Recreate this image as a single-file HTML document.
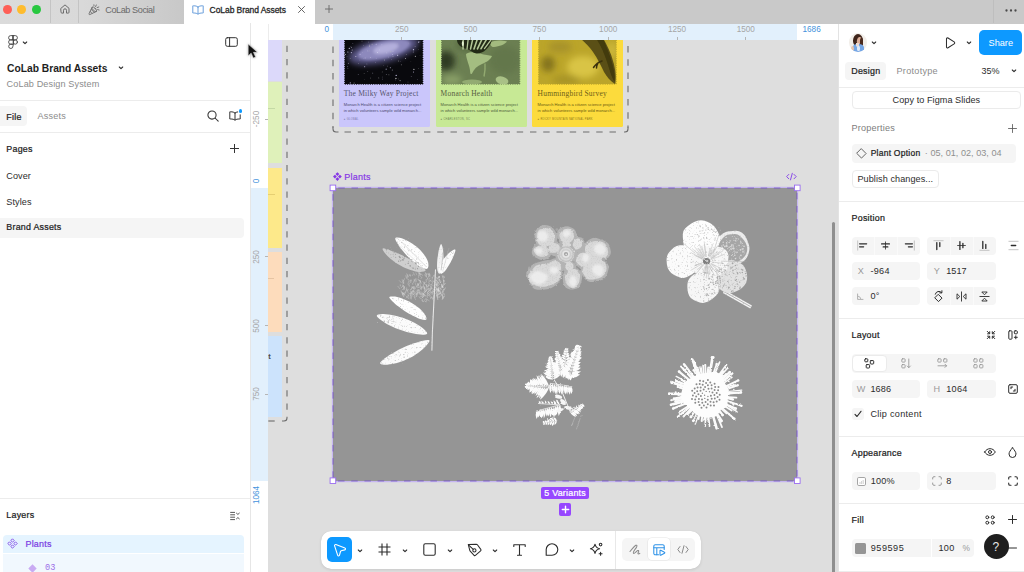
<!DOCTYPE html>
<html><head><meta charset="utf-8"><title>CoLab Brand Assets</title>
<style>
*{box-sizing:border-box;margin:0;padding:0}
html,body{width:1024px;height:572px;overflow:hidden;background:#fff;font-family:"Liberation Sans",sans-serif;font-size:8.65px;color:#1e1e1e}
.a{position:absolute}
.t{position:absolute;white-space:pre;line-height:12px;height:12px;font-size:9.1px;letter-spacing:.08px;color:#2c2c2c}
.b{font-weight:normal;font-size:8.900px;letter-spacing:.24px;color:#1e1e1e;-webkit-text-stroke:.24px currentColor}
.g{color:#8c8c8c}
svg{position:absolute;overflow:visible}
.ic{fill:none;stroke:#2c2c2c;stroke-width:1;stroke-linecap:round;stroke-linejoin:round}
.fld{position:absolute;background:#f5f5f5;border-radius:4px;height:18px}
.hr{position:absolute;height:1px;background:#ececec}
/* title bar */
#tb{left:0;top:0;width:1024px;height:23.500px;background:#c9c9c9}
#tbl{left:0;top:0;width:184px;height:23.500px;background:linear-gradient(90deg,#dbdbdb 0,#d9d9d9 45%,#c8c8c8 100%)}
#tab{left:184px;top:0;width:131px;height:24px;background:#fff}
/* panels */
#left{left:0;top:23.500px;width:250px;height:549px;background:#fff}
#lb{left:250px;top:23px;width:1px;height:549px;background:#e6e6e6}
#right{left:838px;top:23.500px;width:186px;height:549px;background:#fff;border-left:1px solid #e3e3e3}
#hr{left:251px;top:23.500px;width:587px;height:16px;background:#fff}
#vr{left:251px;top:39.500px;width:17px;height:532.500px;background:#fff}
#cv{left:268px;top:39.500px;width:570px;height:532.500px;background:#dedede;overflow:hidden}
.rl{position:absolute;font-size:8.2px;line-height:10px;height:10px;color:#a6a6a6;white-space:pre}
.vl{position:absolute;font-size:8.2px;line-height:10px;height:10px;width:30px;text-align:center;color:#a6a6a6;transform:rotate(-90deg);transform-origin:50% 50%;white-space:pre}
.tk{position:absolute;background:#b5b5b5}
.rb{color:#3f92dc}
</style></head><body>

<!-- ================= TITLE BAR ================= -->
<div id="tb" class="a"></div>
<div id="tbl" class="a"></div>
<div id="tab" class="a"></div>
<div class="a" style="left:3.2px;top:5.4px;width:8.8px;height:8.8px;border-radius:50%;background:#fe5f57"></div>
<div class="a" style="left:17.4px;top:5.4px;width:8.8px;height:8.8px;border-radius:50%;background:#febc2e"></div>
<div class="a" style="left:32px;top:5.4px;width:8.8px;height:8.8px;border-radius:50%;background:#28c840"></div>
<div class="a" style="left:50px;top:0;width:1px;height:23px;background:#c4c4c4"></div>
<div class="a" style="left:78px;top:0;width:1px;height:23px;background:#c4c4c4"></div>
<div class="a" style="left:993px;top:0;width:1px;height:23px;background:#bebebe"></div>
<!-- home -->
<svg class="ic" style="left:59.500px;top:4.400px;stroke:#6c6c6c;stroke-width:1" width="10" height="10" viewBox="0 0 10 10"><path d="M1 4.300 5 .9 9 4.300V8.300a.8.800 0 0 1-.8.800H6.500V6.300a1.500 1.500 0 0 0-3 0V9.100H1.800A.8.800 0 0 1 1 8.300z"/></svg>
<!-- party popper (CoLab Social) -->
<svg class="ic" style="left:88px;top:4px;stroke:#6c6c6c;stroke-width:.9" width="12" height="12" viewBox="0 0 12 12"><path d="M4.200 3.200 1 9.800c-.2.500.3 1 .8.800L8.400 7.400"/><ellipse cx="6.300" cy="5.300" rx="1.300" ry="3" transform="rotate(-45 6.300 5.300)"/><path d="M3.200 5.400 6.200 8.400M2.200 7.400 4 9.300"/><path d="M7.600 2.600 8.300 1M9.100 3.600l1.700-.6M9.600 5.600l1.500.4M6 1.800 5.900.8"/></svg>
<!-- book (active tab) -->
<svg class="ic" style="left:192.300px;top:4.600px;stroke:#6a9fdc;stroke-width:1" width="12" height="10" viewBox="0 0 12 10"><path d="M6 2C5 1.100 3.500 .8 1.600 .8H.8V8h.8C3.500 8 5 8.300 6 9.200 7 8.300 8.500 8 10.400 8h.8V.8h-.8C8.500 .8 7 1.100 6 2zM6 2v7"/></svg>
<!-- close -->
<svg class="ic" style="left:297.500px;top:6.100px;stroke:#555;stroke-width:.9" width="7" height="7" viewBox="0 0 7 7"><path d="M.5 .5 6.500 6.500M6.500 .5 .5 6.500"/></svg>
<!-- new tab -->
<svg class="ic" style="left:325.300px;top:5.400px;stroke:#666;stroke-width:.9" width="8" height="8" viewBox="0 0 8 8"><path d="M4 .4V7.600M.4 4H7.600"/></svg>
<!-- ellipsis -->
<svg style="left:1004.500px;top:8.600px" width="12" height="3" viewBox="0 0 12 3"><circle cx="1.500" cy="1.500" r="1.150" fill="#4a4a4a"/><circle cx="6" cy="1.500" r="1.150" fill="#4a4a4a"/><circle cx="10.500" cy="1.500" r="1.150" fill="#4a4a4a"/></svg>

<div class="t" style="left:105.300px;top:4px;color:#6a6a6a;letter-spacing:-.42px">CoLab Social</div>
<div class="t" style="left:209.600px;top:4px;font-size:8.500px;letter-spacing:-.07px;color:#2a2a2a;-webkit-text-stroke:.3px #2a2a2a">CoLab Brand Assets</div>

<!-- ================= LEFT PANEL ================= -->
<div id="left" class="a"></div>
<div id="lb" class="a"></div>
<div class="t" style="left:7px;top:63px;font-size:10.250px;font-weight:bold;letter-spacing:0;color:#1e1e1e">CoLab Brand Assets</div>
<div class="t g" style="left:6.6px;top:77.8px;letter-spacing:.12px">CoLab Design System</div>
<div class="hr" style="left:0;top:99.5px;width:250px"></div>
<div class="a" style="left:0;top:106px;width:27px;height:19.5px;background:#f5f5f5;border-radius:0 4px 4px 0"></div>
<div class="t b" style="left:6.300px;top:110.600px">File</div>
<div class="t g" style="left:37.500px;top:110.400px;letter-spacing:.2px">Assets</div>
<div class="hr" style="left:0;top:132px;width:250px"></div>
<div class="t b" style="left:6.3px;top:142.5px">Pages</div>
<div class="t" style="left:6.3px;top:170px">Cover</div>
<div class="t" style="left:6.3px;top:196px">Styles</div>
<div class="a" style="left:0;top:217.5px;width:244px;height:20px;background:#f5f5f5;border-radius:0 4px 4px 0"></div>
<div class="t b" style="left:6.300px;top:221.400px">Brand Assets</div>
<div class="hr" style="left:0;top:498px;width:250px"></div>
<div class="t b" style="left:6.3px;top:509px">Layers</div>
<div class="a" style="left:3px;top:534.5px;width:241px;height:18.5px;background:#e5f4ff;border-radius:4px 4px 0 0"></div>
<div class="a" style="left:3px;top:554px;width:241px;height:18px;background:#f1f8fe"></div>
<div class="t b" style="left:25.500px;top:538.200px;color:#7b3fe4">Plants</div>
<div class="t" style="left:45px;top:562px;color:#9d6fe8;font-family:'Liberation Mono',monospace;font-size:8.6px;letter-spacing:0">03</div>

<!-- figma logo + chevron -->
<svg class="ic" style="left:7.600px;top:35.300px;stroke:#3c3c3c;stroke-width:.85" width="10" height="14" viewBox="0 0 10 14"><path d="M5 .6H2.750a2.150 2.150 0 0 0 0 4.300H5zM5 .6h2.250a2.150 2.150 0 0 1 0 4.300H5zM5 4.900H2.750a2.150 2.150 0 0 0 0 4.300H5zM5 9.200H2.750a2.150 2.150 0 1 0 2.250 2.150z"/><circle cx="7.250" cy="7.050" r="2.150"/></svg>
<svg class="ic" style="left:22.300px;top:40.800px;stroke-width:1.100" width="6" height="4" viewBox="0 0 6 4"><path d="M1.300 1 3 2.600 4.700 1"/></svg>
<!-- sidebar toggle -->
<svg class="ic" style="left:225.300px;top:37.300px;stroke:#333;stroke-width:1" width="13" height="10" viewBox="0 0 13 10"><rect x=".7" y=".7" width="11.600" height="8.600" rx="1.600"/><path d="M4.600 .7v8.600"/></svg>
<!-- title chevron -->
<svg class="ic" style="left:118.200px;top:66.200px;stroke-width:1.100" width="6" height="4" viewBox="0 0 6 4"><path d="M1.300 1 3 2.600 4.700 1"/></svg>
<!-- search -->
<svg class="ic" style="left:207px;top:110.300px;stroke:#333;stroke-width:1.050" width="12" height="12" viewBox="0 0 12 12"><circle cx="5" cy="5" r="4.100"/><path d="M8 8 11.200 11.200"/></svg>
<!-- libraries book + dot -->
<svg class="ic" style="left:229px;top:110.500px;stroke:#333;stroke-width:1" width="12" height="10" viewBox="0 0 12 10"><path d="M6 2C5 1.100 3.500 .8 1.600 .8H.8V8h.8C3.500 8 5 8.300 6 9.200 7 8.300 8.500 8 10.400 8h.8V3.800M6 2v7M6 2c.7-.6 1.600-.9 2.700-1.100"/></svg>
<div class="a" style="left:238.700px;top:109.300px;width:3.600px;height:3.600px;border-radius:50%;background:#0d99ff"></div>
<!-- add page -->
<svg class="ic" style="left:230px;top:143.500px;stroke:#333;stroke-width:1" width="9" height="9" viewBox="0 0 9 9"><path d="M4.500 .4V8.600M.4 4.500H8.600"/></svg>
<!-- layers collapse -->
<svg class="ic" style="left:230px;top:510.500px;stroke:#444;stroke-width:.9" width="10" height="10" viewBox="0 0 10 10"><path d="M.6 1.400H4.600M.6 3.800H4.600M.6 6.200H4.600M.6 8.600H4.600M6.500 2.200 7.900 3.400 9.300 2.200M6.500 7.800 7.900 6.600 9.300 7.800"/></svg>
<!-- component-set glyph in layers -->
<svg style="left:7px;top:538px" width="11" height="11" viewBox="0 0 11 11" fill="none" stroke="#7b3fe4" stroke-width=".85" stroke-linejoin="round"><path d="M5.500 .8 7.200 2.500 5.500 4.200 3.800 2.500zM5.500 6.800 7.200 8.500 5.500 10.200 3.800 8.500zM2.500 3.800 4.200 5.500 2.500 7.200 .8 5.500zM8.500 3.800 10.200 5.500 8.500 7.200 6.800 5.500z"/></svg>
<!-- variant diamond (faded) -->
<svg style="left:27.500px;top:563.500px" width="9" height="9" viewBox="0 0 9 9"><path d="M4.500 .3 8.700 4.500 4.500 8.700 .3 4.500z" fill="#c9abf3"/></svg>

<!-- ================= RULERS + CANVAS ================= -->
<div id="cv" class="a">
<div class="a" style="left:-268px;top:-39.500px;width:1024px;height:572px">
<!-- colour strips at far left -->
<div class="a" style="left:268px;top:39px;width:14.200px;height:41.500px;background:#dcd9fa"></div>
<div class="a" style="left:268px;top:82.300px;width:14.200px;height:80.800px;background:#dff1ba"></div>
<div class="a" style="left:268px;top:167.500px;width:14.200px;height:80.500px;background:#fde98a"></div>
<div class="a" style="left:268px;top:252px;width:14.200px;height:80.200px;background:#fddcbc"></div>
<div class="a" style="left:268px;top:336.200px;width:14.200px;height:80.500px;background:#cce3fc"></div>
<div class="a" style="left:268px;top:108px;width:7px;height:1px;background:#c4d9a5"></div>
<div class="a" style="left:268px;top:194px;width:7px;height:1px;background:#e6cf72"></div>
<div class="a" style="left:268px;top:278px;width:6px;height:1px;background:#e6c4a3"></div>
<div class="t" style="left:268.200px;top:350.500px;font-size:7.500px;color:#4a4a4a;font-weight:bold">t</div>

<!-- dashed section outlines -->
<svg style="left:0;top:0" width="1024" height="572" viewBox="0 0 1024 572">
  <g fill="none" stroke="#6c6c6c" stroke-width="1.100" stroke-dasharray="6.400 6.850">
    <path d="M287 45.700V416"/>
    <path d="M274.700 421H268"/>
    <path d="M333 46.600V128"/>
    <path d="M344.500 132H622"/>
    <path d="M628 46V128"/>
  </g>
  <g fill="none" stroke="#6c6c6c" stroke-width="1.100">
    <path d="M287 416.800v1.200a3 3 0 0 1-3 3h-2"/>
    <path d="M333 127.500v1.500a3 3 0 0 0 3 3h2.500"/>
    <path d="M628 127.500v1.500a3 3 0 0 1-3 3h-1"/>
  </g>
</svg>

<!-- cards -->
<div class="a" style="left:339px;top:30px;width:91px;height:96.800px;background:#cac6fb;border-radius:0 0 1.500px 1.500px"></div>
<div class="a" style="left:435.700px;top:30px;width:91px;height:96.800px;background:#c7e995;border-radius:0 0 1.500px 1.500px"></div>
<div class="a" style="left:532px;top:30px;width:91.300px;height:96.800px;background:#fcdb3c;border-radius:0 0 1.500px 1.500px"></div>
<svg style="left:0;top:0" width="1024" height="572" viewBox="0 0 1024 572"><defs><filter id="cb1" x="-20%" y="-20%" width="140%" height="140%"><feGaussianBlur stdDeviation="1.6"/></filter><filter id="cb2" x="-20%" y="-20%" width="140%" height="140%"><feGaussianBlur stdDeviation=".7"/></filter><filter id="cb3" x="-20%" y="-20%" width="140%" height="140%"><feGaussianBlur stdDeviation="3"/></filter><filter id="cb0" x="-20%" y="-20%" width="140%" height="140%"><feGaussianBlur stdDeviation=".3"/></filter><clipPath id="c1"><rect x="344.1" y="30" width="79.3" height="54.8"/></clipPath><clipPath id="c2"><rect x="441" y="30" width="79.3" height="54.8"/></clipPath><clipPath id="c3"><rect x="538" y="30" width="78.9" height="54.8"/></clipPath></defs><g clip-path="url(#c1)"><rect x="344" y="30" width="80" height="55" fill="#09090d"/><g filter="url(#cb3)"><ellipse cx="383.5" cy="50" rx="36" ry="12" transform="rotate(-14 383.5 50)" fill="#5b5888"/></g><g filter="url(#cb1)"><ellipse cx="384" cy="49.500" rx="27" ry="8.500" transform="rotate(-14 384 49.500)" fill="#8d89bd"/><ellipse cx="386" cy="48.500" rx="13" ry="4.600" transform="rotate(-14 386 48.500)" fill="#b3afdc"/></g><g filter="url(#cb0)"><circle cx="363.4" cy="45.4" r="0.4" fill="#bbb" opacity="0.58"/><circle cx="350.2" cy="58.3" r="0.35" fill="#fff" opacity="0.61"/><circle cx="386.9" cy="52.9" r="0.3" fill="#fff" opacity="0.63"/><circle cx="418.6" cy="42.1" r="0.65" fill="#d0ccf0" opacity="0.90"/><circle cx="360.1" cy="54.3" r="0.65" fill="#d0ccf0" opacity="0.54"/><circle cx="392.3" cy="69.9" r="0.5" fill="#e8e6ff" opacity="0.59"/><circle cx="381.9" cy="44.8" r="0.5" fill="#d0ccf0" opacity="0.50"/><circle cx="367.8" cy="71.3" r="0.35" fill="#e8e6ff" opacity="0.71"/><circle cx="391.7" cy="59.5" r="0.3" fill="#e8e6ff" opacity="0.65"/><circle cx="408.4" cy="42.9" r="0.25" fill="#bbb" opacity="0.81"/><circle cx="366.9" cy="64" r="0.4" fill="#d0ccf0" opacity="0.57"/><circle cx="397.6" cy="43.9" r="0.3" fill="#bbb" opacity="0.64"/><circle cx="372.8" cy="73.1" r="0.35" fill="#e8e6ff" opacity="0.95"/><circle cx="352.9" cy="43.6" r="0.3" fill="#d0ccf0" opacity="0.88"/><circle cx="393" cy="51.2" r="0.35" fill="#e8e6ff" opacity="0.65"/><circle cx="347" cy="56.4" r="0.25" fill="#d0ccf0" opacity="0.87"/><circle cx="419.9" cy="41.8" r="0.35" fill="#d0ccf0" opacity="0.98"/><circle cx="405.5" cy="58.6" r="0.5" fill="#fff" opacity="0.65"/><circle cx="359.9" cy="60.1" r="0.3" fill="#d0ccf0" opacity="0.69"/><circle cx="420" cy="55.2" r="0.25" fill="#d0ccf0" opacity="0.52"/><circle cx="358.2" cy="74.7" r="0.35" fill="#d0ccf0" opacity="0.79"/><circle cx="379.3" cy="49.9" r="0.3" fill="#fff" opacity="0.53"/><circle cx="349.3" cy="48.3" r="0.65" fill="#e8e6ff" opacity="0.80"/><circle cx="387.6" cy="66.1" r="0.35" fill="#fff" opacity="0.56"/><circle cx="386.3" cy="74.3" r="0.4" fill="#e8e6ff" opacity="0.74"/><circle cx="363.9" cy="58.7" r="0.25" fill="#e8e6ff" opacity="0.71"/><circle cx="364.4" cy="79.2" r="0.3" fill="#bbb" opacity="0.59"/><circle cx="347.9" cy="51.9" r="0.5" fill="#e8e6ff" opacity="0.89"/><circle cx="377.5" cy="52.3" r="0.35" fill="#fff" opacity="0.95"/><circle cx="369.5" cy="46" r="0.5" fill="#bbb" opacity="0.98"/><circle cx="395.9" cy="78.4" r="0.65" fill="#fff" opacity="0.75"/><circle cx="352.2" cy="50.1" r="0.5" fill="#e8e6ff" opacity="0.67"/><circle cx="396.2" cy="75.4" r="0.65" fill="#d0ccf0" opacity="0.91"/><circle cx="386.2" cy="69.2" r="0.65" fill="#d0ccf0" opacity="0.67"/><circle cx="375.6" cy="62.3" r="0.35" fill="#e8e6ff" opacity="0.52"/><circle cx="415.1" cy="46.5" r="0.35" fill="#fff" opacity="0.94"/><circle cx="398.7" cy="61" r="0.4" fill="#bbb" opacity="0.96"/><circle cx="362" cy="41.1" r="0.3" fill="#fff" opacity="0.81"/><circle cx="365.1" cy="58" r="0.4" fill="#e8e6ff" opacity="0.78"/><circle cx="413.5" cy="49.7" r="0.65" fill="#d0ccf0" opacity="0.91"/><circle cx="388.9" cy="74.7" r="0.5" fill="#bbb" opacity="0.51"/><circle cx="347.7" cy="66.6" r="0.4" fill="#d0ccf0" opacity="0.80"/><circle cx="355.8" cy="56.6" r="0.5" fill="#fff" opacity="0.65"/><circle cx="372.1" cy="44.2" r="0.5" fill="#bbb" opacity="0.69"/><circle cx="406.4" cy="54.4" r="0.3" fill="#bbb" opacity="0.93"/><circle cx="376.2" cy="44.3" r="0.5" fill="#d0ccf0" opacity="0.76"/><circle cx="378.8" cy="77.9" r="0.4" fill="#fff" opacity="0.81"/><circle cx="418.4" cy="68.4" r="0.4" fill="#bbb" opacity="0.56"/><circle cx="388.5" cy="57" r="0.3" fill="#e8e6ff" opacity="0.85"/><circle cx="370.5" cy="78" r="0.35" fill="#fff" opacity="0.86"/><circle cx="345.4" cy="54.4" r="0.5" fill="#fff" opacity="0.74"/><circle cx="400.8" cy="61.8" r="0.25" fill="#e8e6ff" opacity="0.71"/><circle cx="367.9" cy="50.9" r="0.3" fill="#fff" opacity="0.84"/><circle cx="392.5" cy="54.5" r="0.4" fill="#d0ccf0" opacity="0.97"/><circle cx="384.5" cy="60" r="0.5" fill="#bbb" opacity="0.70"/><circle cx="364.6" cy="66.7" r="0.65" fill="#d0ccf0" opacity="0.57"/><circle cx="351.4" cy="47.2" r="0.5" fill="#e8e6ff" opacity="0.64"/><circle cx="418.3" cy="49.5" r="0.35" fill="#fff" opacity="0.54"/><circle cx="395.4" cy="79.9" r="0.35" fill="#d0ccf0" opacity="0.66"/><circle cx="368.4" cy="42" r="0.25" fill="#fff" opacity="0.90"/><circle cx="408" cy="82" r="0.3" fill="#e8e6ff" opacity="0.79"/><circle cx="383.6" cy="65.7" r="0.25" fill="#fff" opacity="0.59"/><circle cx="382.4" cy="79.1" r="0.3" fill="#d0ccf0" opacity="0.93"/><circle cx="398.6" cy="78.9" r="0.3" fill="#bbb" opacity="0.85"/><circle cx="369.2" cy="50.9" r="0.35" fill="#bbb" opacity="0.95"/><circle cx="376.2" cy="58.2" r="0.35" fill="#d0ccf0" opacity="0.72"/><circle cx="390.9" cy="51.8" r="0.5" fill="#bbb" opacity="0.85"/><circle cx="393" cy="56.7" r="0.4" fill="#fff" opacity="0.58"/><circle cx="350.3" cy="82.9" r="0.65" fill="#d0ccf0" opacity="0.80"/><circle cx="369.4" cy="44.9" r="0.35" fill="#bbb" opacity="0.61"/><circle cx="417.4" cy="79.4" r="0.25" fill="#e8e6ff" opacity="0.96"/><circle cx="350.4" cy="46.7" r="0.25" fill="#e8e6ff" opacity="0.70"/><circle cx="390.4" cy="67.7" r="0.65" fill="#d0ccf0" opacity="0.51"/><circle cx="364.1" cy="73.3" r="0.3" fill="#fff" opacity="0.97"/><circle cx="351.4" cy="52.6" r="0.65" fill="#d0ccf0" opacity="0.80"/><circle cx="394.3" cy="48.4" r="0.3" fill="#bbb" opacity="0.98"/><circle cx="413.5" cy="71.9" r="0.5" fill="#d0ccf0" opacity="0.85"/><circle cx="401.4" cy="64.8" r="0.5" fill="#bbb" opacity="0.58"/><circle cx="410.9" cy="61.8" r="0.25" fill="#bbb" opacity="0.58"/><circle cx="413.2" cy="52" r="0.4" fill="#d0ccf0" opacity="0.93"/><circle cx="370.6" cy="57.6" r="0.4" fill="#fff" opacity="0.64"/><circle cx="397.7" cy="54.1" r="0.3" fill="#fff" opacity="0.58"/><circle cx="411.2" cy="76.4" r="0.3" fill="#e8e6ff" opacity="0.78"/><circle cx="382.2" cy="71.9" r="0.3" fill="#bbb" opacity="1.00"/><circle cx="400.1" cy="80.6" r="0.65" fill="#bbb" opacity="0.67"/><circle cx="358.5" cy="63.8" r="0.3" fill="#fff" opacity="0.74"/><circle cx="415.4" cy="56.3" r="0.65" fill="#bbb" opacity="0.80"/><circle cx="347.9" cy="68.2" r="0.35" fill="#d0ccf0" opacity="0.89"/><circle cx="382.2" cy="76.9" r="0.25" fill="#e8e6ff" opacity="0.95"/><circle cx="413.9" cy="69.3" r="0.65" fill="#fff" opacity="0.80"/><circle cx="386.1" cy="83.5" r="0.35" fill="#fff" opacity="0.59"/><circle cx="348.4" cy="63.3" r="0.5" fill="#e8e6ff" opacity="0.52"/><circle cx="397.7" cy="55.5" r="0.5" fill="#e8e6ff" opacity="0.85"/><circle cx="354.1" cy="83.1" r="0.5" fill="#fff" opacity="0.54"/><circle cx="362.6" cy="52.8" r="0.25" fill="#fff" opacity="0.51"/></g></g><g clip-path="url(#c2)"><rect x="441" y="30" width="80" height="55" fill="#6b7f52"/><g filter="url(#cb3)"><ellipse cx="446" cy="61" rx="9" ry="10" fill="#2f3b22"/><ellipse cx="505" cy="60" rx="16" ry="14" fill="#63774b"/><ellipse cx="470" cy="45" rx="14" ry="6" fill="#57693f"/><ellipse cx="452" cy="80" rx="10" ry="5" fill="#8aa068"/></g><g filter="url(#cb2)"><path d="M466 54c3-2.500 9-2 14-.5 5 1.500 9 1.500 12 2.500-1 3-5 6-10 8-5 2-8 5-10 9.500-1 1.500-1.800 0-1.800-1.500C470 66 466 59 466 54z" fill="#a4bd81"/><path d="M485 63.500c.4 5-.2 9-1 13" stroke="#92aa70" stroke-width="1.400" fill="none"/><path d="M491 42c3-1.500 9-2.500 16-.5-2 3-8 5-13 5.500-3 .3-4.500-3-3-5z" fill="#a3bb7f"/><ellipse cx="502" cy="80.500" rx="6.500" ry="4" fill="#a9c186" transform="rotate(15 502 80.500)"/><ellipse cx="472" cy="82" rx="10" ry="2.600" fill="#93ab72"/></g><g filter="url(#cb0)"><path d="M457 40c0 4 4 8 10 9 3 .8 5.500 4 9.500 4.500 6 .5 13-5 15.500-13.500z" fill="#222b17"/><path d="M464.5 38L462 49" stroke="#b4c898" stroke-width="1.5" stroke-linecap="round" transform="rotate(-12 462 44)"/><path d="M469.0 38L466.5 49" stroke="#b4c898" stroke-width="1.3" stroke-linecap="round" transform="rotate(-6 466.5 44)"/><path d="M473.0 38L470.5 49" stroke="#b4c898" stroke-width="1.5" stroke-linecap="round" transform="rotate(0 470.5 44)"/><path d="M477.0 38L474.5 49" stroke="#b4c898" stroke-width="1.6" stroke-linecap="round" transform="rotate(6 474.5 44)"/><path d="M481.0 38L478.5 49" stroke="#b4c898" stroke-width="1.6" stroke-linecap="round" transform="rotate(12 478.5 44)"/><path d="M485.0 38L482.5 49" stroke="#b4c898" stroke-width="1.5" stroke-linecap="round" transform="rotate(18 482.5 44)"/><path d="M489.0 38L486.5 49" stroke="#b4c898" stroke-width="1.3" stroke-linecap="round" transform="rotate(24 486.5 44)"/><ellipse cx="462.800" cy="43.500" rx="1" ry="2.600" fill="#e6f2d2"/></g></g><g clip-path="url(#c3)"><rect x="538" y="30" width="80" height="55" fill="#bba52a"/><g filter="url(#cb3)"><ellipse cx="583" cy="67" rx="16" ry="11" fill="#d9c444"/><ellipse cx="548" cy="64" rx="7" ry="8" fill="#85751a"/><ellipse cx="560" cy="47" rx="12" ry="6" fill="#a8932a"/><ellipse cx="566" cy="80" rx="14" ry="5" fill="#a89426"/><ellipse cx="612" cy="50" rx="5" ry="8" fill="#cdb83a"/></g><g filter="url(#cb2)"><path d="M580 38c5 5 10 9 13 14 5 7 8 14 11 20 3 5 6 9 11 12 1.500-6 .5-15-2-23-2-8-6-16-10-23z" fill="#5a5016"/><path d="M596 38c5 8 9 17 12 27 2 7 4 13 6.500 17 1-5-.5-13-3-21-2.500-9-6-17-9-23z" fill="#3f360c" opacity=".85"/><path d="M602 61c-3 1-6 3-8.500 6.500M598 63c-1 2-1.500 3.500-1.500 5" stroke="#3a300a" stroke-width="1.500" fill="none" stroke-linecap="round"/></g></g><g fill="#cac6fb"><circle cx="344.1" cy="84.8" r=".78"/><circle cx="346.4" cy="84.8" r=".78"/><circle cx="348.7" cy="84.8" r=".78"/><circle cx="350.9" cy="84.8" r=".78"/><circle cx="353.2" cy="84.8" r=".78"/><circle cx="355.5" cy="84.8" r=".78"/><circle cx="357.8" cy="84.8" r=".78"/><circle cx="360.1" cy="84.8" r=".78"/><circle cx="362.3" cy="84.8" r=".78"/><circle cx="364.6" cy="84.8" r=".78"/><circle cx="366.9" cy="84.8" r=".78"/><circle cx="369.2" cy="84.8" r=".78"/><circle cx="371.5" cy="84.8" r=".78"/><circle cx="373.7" cy="84.8" r=".78"/><circle cx="376" cy="84.8" r=".78"/><circle cx="378.3" cy="84.8" r=".78"/><circle cx="380.6" cy="84.8" r=".78"/><circle cx="382.9" cy="84.8" r=".78"/><circle cx="385.1" cy="84.8" r=".78"/><circle cx="387.4" cy="84.8" r=".78"/><circle cx="389.7" cy="84.8" r=".78"/><circle cx="392" cy="84.8" r=".78"/><circle cx="394.3" cy="84.8" r=".78"/><circle cx="396.5" cy="84.8" r=".78"/><circle cx="398.8" cy="84.8" r=".78"/><circle cx="401.1" cy="84.8" r=".78"/><circle cx="403.4" cy="84.8" r=".78"/><circle cx="405.7" cy="84.8" r=".78"/><circle cx="407.9" cy="84.8" r=".78"/><circle cx="410.2" cy="84.8" r=".78"/><circle cx="412.5" cy="84.8" r=".78"/><circle cx="414.8" cy="84.8" r=".78"/><circle cx="417.1" cy="84.8" r=".78"/><circle cx="419.3" cy="84.8" r=".78"/><circle cx="421.6" cy="84.8" r=".78"/><circle cx="344.1" cy="84.8" r=".78"/><circle cx="423.4" cy="84.8" r=".78"/><circle cx="344.1" cy="82.5" r=".78"/><circle cx="423.4" cy="82.5" r=".78"/><circle cx="344.1" cy="80.2" r=".78"/><circle cx="423.4" cy="80.2" r=".78"/><circle cx="344.1" cy="78" r=".78"/><circle cx="423.4" cy="78" r=".78"/><circle cx="344.1" cy="75.7" r=".78"/><circle cx="423.4" cy="75.7" r=".78"/><circle cx="344.1" cy="73.4" r=".78"/><circle cx="423.4" cy="73.4" r=".78"/><circle cx="344.1" cy="71.1" r=".78"/><circle cx="423.4" cy="71.1" r=".78"/><circle cx="344.1" cy="68.8" r=".78"/><circle cx="423.4" cy="68.8" r=".78"/><circle cx="344.1" cy="66.6" r=".78"/><circle cx="423.4" cy="66.6" r=".78"/><circle cx="344.1" cy="64.3" r=".78"/><circle cx="423.4" cy="64.3" r=".78"/><circle cx="344.1" cy="62" r=".78"/><circle cx="423.4" cy="62" r=".78"/><circle cx="344.1" cy="59.7" r=".78"/><circle cx="423.4" cy="59.7" r=".78"/><circle cx="344.1" cy="57.4" r=".78"/><circle cx="423.4" cy="57.4" r=".78"/><circle cx="344.1" cy="55.2" r=".78"/><circle cx="423.4" cy="55.2" r=".78"/><circle cx="344.1" cy="52.9" r=".78"/><circle cx="423.4" cy="52.9" r=".78"/><circle cx="344.1" cy="50.6" r=".78"/><circle cx="423.4" cy="50.6" r=".78"/><circle cx="344.1" cy="48.3" r=".78"/><circle cx="423.4" cy="48.3" r=".78"/><circle cx="344.1" cy="46" r=".78"/><circle cx="423.4" cy="46" r=".78"/><circle cx="344.1" cy="43.8" r=".78"/><circle cx="423.4" cy="43.8" r=".78"/><circle cx="344.1" cy="41.5" r=".78"/><circle cx="423.4" cy="41.5" r=".78"/><circle cx="344.1" cy="39.2" r=".78"/><circle cx="423.4" cy="39.2" r=".78"/></g><g fill="#c7e995"><circle cx="441" cy="84.8" r=".78"/><circle cx="443.3" cy="84.8" r=".78"/><circle cx="445.6" cy="84.8" r=".78"/><circle cx="447.8" cy="84.8" r=".78"/><circle cx="450.1" cy="84.8" r=".78"/><circle cx="452.4" cy="84.8" r=".78"/><circle cx="454.7" cy="84.8" r=".78"/><circle cx="457" cy="84.8" r=".78"/><circle cx="459.2" cy="84.8" r=".78"/><circle cx="461.5" cy="84.8" r=".78"/><circle cx="463.8" cy="84.8" r=".78"/><circle cx="466.1" cy="84.8" r=".78"/><circle cx="468.4" cy="84.8" r=".78"/><circle cx="470.6" cy="84.8" r=".78"/><circle cx="472.9" cy="84.8" r=".78"/><circle cx="475.2" cy="84.8" r=".78"/><circle cx="477.5" cy="84.8" r=".78"/><circle cx="479.8" cy="84.8" r=".78"/><circle cx="482" cy="84.8" r=".78"/><circle cx="484.3" cy="84.8" r=".78"/><circle cx="486.6" cy="84.8" r=".78"/><circle cx="488.9" cy="84.8" r=".78"/><circle cx="491.2" cy="84.8" r=".78"/><circle cx="493.4" cy="84.8" r=".78"/><circle cx="495.7" cy="84.8" r=".78"/><circle cx="498" cy="84.8" r=".78"/><circle cx="500.3" cy="84.8" r=".78"/><circle cx="502.6" cy="84.8" r=".78"/><circle cx="504.8" cy="84.8" r=".78"/><circle cx="507.1" cy="84.8" r=".78"/><circle cx="509.4" cy="84.8" r=".78"/><circle cx="511.7" cy="84.8" r=".78"/><circle cx="514" cy="84.8" r=".78"/><circle cx="516.2" cy="84.8" r=".78"/><circle cx="518.5" cy="84.8" r=".78"/><circle cx="441" cy="84.8" r=".78"/><circle cx="520.3" cy="84.8" r=".78"/><circle cx="441" cy="82.5" r=".78"/><circle cx="520.3" cy="82.5" r=".78"/><circle cx="441" cy="80.2" r=".78"/><circle cx="520.3" cy="80.2" r=".78"/><circle cx="441" cy="78" r=".78"/><circle cx="520.3" cy="78" r=".78"/><circle cx="441" cy="75.7" r=".78"/><circle cx="520.3" cy="75.7" r=".78"/><circle cx="441" cy="73.4" r=".78"/><circle cx="520.3" cy="73.4" r=".78"/><circle cx="441" cy="71.1" r=".78"/><circle cx="520.3" cy="71.1" r=".78"/><circle cx="441" cy="68.8" r=".78"/><circle cx="520.3" cy="68.8" r=".78"/><circle cx="441" cy="66.6" r=".78"/><circle cx="520.3" cy="66.6" r=".78"/><circle cx="441" cy="64.3" r=".78"/><circle cx="520.3" cy="64.3" r=".78"/><circle cx="441" cy="62" r=".78"/><circle cx="520.3" cy="62" r=".78"/><circle cx="441" cy="59.7" r=".78"/><circle cx="520.3" cy="59.7" r=".78"/><circle cx="441" cy="57.4" r=".78"/><circle cx="520.3" cy="57.4" r=".78"/><circle cx="441" cy="55.2" r=".78"/><circle cx="520.3" cy="55.2" r=".78"/><circle cx="441" cy="52.9" r=".78"/><circle cx="520.3" cy="52.9" r=".78"/><circle cx="441" cy="50.6" r=".78"/><circle cx="520.3" cy="50.6" r=".78"/><circle cx="441" cy="48.3" r=".78"/><circle cx="520.3" cy="48.3" r=".78"/><circle cx="441" cy="46" r=".78"/><circle cx="520.3" cy="46" r=".78"/><circle cx="441" cy="43.8" r=".78"/><circle cx="520.3" cy="43.8" r=".78"/><circle cx="441" cy="41.5" r=".78"/><circle cx="520.3" cy="41.5" r=".78"/><circle cx="441" cy="39.2" r=".78"/><circle cx="520.3" cy="39.2" r=".78"/></g><g fill="#fcdb3c"><circle cx="538" cy="84.8" r=".78"/><circle cx="540.3" cy="84.8" r=".78"/><circle cx="542.6" cy="84.8" r=".78"/><circle cx="544.8" cy="84.8" r=".78"/><circle cx="547.1" cy="84.8" r=".78"/><circle cx="549.4" cy="84.8" r=".78"/><circle cx="551.7" cy="84.8" r=".78"/><circle cx="554" cy="84.8" r=".78"/><circle cx="556.2" cy="84.8" r=".78"/><circle cx="558.5" cy="84.8" r=".78"/><circle cx="560.8" cy="84.8" r=".78"/><circle cx="563.1" cy="84.8" r=".78"/><circle cx="565.4" cy="84.8" r=".78"/><circle cx="567.6" cy="84.8" r=".78"/><circle cx="569.9" cy="84.8" r=".78"/><circle cx="572.2" cy="84.8" r=".78"/><circle cx="574.5" cy="84.8" r=".78"/><circle cx="576.8" cy="84.8" r=".78"/><circle cx="579" cy="84.8" r=".78"/><circle cx="581.3" cy="84.8" r=".78"/><circle cx="583.6" cy="84.8" r=".78"/><circle cx="585.9" cy="84.8" r=".78"/><circle cx="588.2" cy="84.8" r=".78"/><circle cx="590.4" cy="84.8" r=".78"/><circle cx="592.7" cy="84.8" r=".78"/><circle cx="595" cy="84.8" r=".78"/><circle cx="597.3" cy="84.8" r=".78"/><circle cx="599.6" cy="84.8" r=".78"/><circle cx="601.8" cy="84.8" r=".78"/><circle cx="604.1" cy="84.8" r=".78"/><circle cx="606.4" cy="84.8" r=".78"/><circle cx="608.7" cy="84.8" r=".78"/><circle cx="611" cy="84.8" r=".78"/><circle cx="613.2" cy="84.8" r=".78"/><circle cx="615.5" cy="84.8" r=".78"/><circle cx="538" cy="84.8" r=".78"/><circle cx="616.9" cy="84.8" r=".78"/><circle cx="538" cy="82.5" r=".78"/><circle cx="616.9" cy="82.5" r=".78"/><circle cx="538" cy="80.2" r=".78"/><circle cx="616.9" cy="80.2" r=".78"/><circle cx="538" cy="78" r=".78"/><circle cx="616.9" cy="78" r=".78"/><circle cx="538" cy="75.7" r=".78"/><circle cx="616.9" cy="75.7" r=".78"/><circle cx="538" cy="73.4" r=".78"/><circle cx="616.9" cy="73.4" r=".78"/><circle cx="538" cy="71.1" r=".78"/><circle cx="616.9" cy="71.1" r=".78"/><circle cx="538" cy="68.8" r=".78"/><circle cx="616.9" cy="68.8" r=".78"/><circle cx="538" cy="66.6" r=".78"/><circle cx="616.9" cy="66.6" r=".78"/><circle cx="538" cy="64.3" r=".78"/><circle cx="616.9" cy="64.3" r=".78"/><circle cx="538" cy="62" r=".78"/><circle cx="616.9" cy="62" r=".78"/><circle cx="538" cy="59.7" r=".78"/><circle cx="616.9" cy="59.7" r=".78"/><circle cx="538" cy="57.4" r=".78"/><circle cx="616.9" cy="57.4" r=".78"/><circle cx="538" cy="55.2" r=".78"/><circle cx="616.9" cy="55.2" r=".78"/><circle cx="538" cy="52.9" r=".78"/><circle cx="616.9" cy="52.9" r=".78"/><circle cx="538" cy="50.6" r=".78"/><circle cx="616.9" cy="50.6" r=".78"/><circle cx="538" cy="48.3" r=".78"/><circle cx="616.9" cy="48.3" r=".78"/><circle cx="538" cy="46" r=".78"/><circle cx="616.9" cy="46" r=".78"/><circle cx="538" cy="43.8" r=".78"/><circle cx="616.9" cy="43.8" r=".78"/><circle cx="538" cy="41.5" r=".78"/><circle cx="616.9" cy="41.5" r=".78"/><circle cx="538" cy="39.2" r=".78"/><circle cx="616.9" cy="39.2" r=".78"/></g></svg>
<div class="t" style="left:343.800px;top:87.600px;font-family:'Liberation Serif',serif;font-size:7.500px;letter-spacing:.21px;color:#55546e">The Milky Way Project</div>
<div class="t" style="left:440.600px;top:87.600px;font-family:'Liberation Serif',serif;font-size:7.500px;letter-spacing:.21px;color:#56613f">Monarch Health</div>
<div class="t" style="left:537.600px;top:87.600px;font-family:'Liberation Serif',serif;font-size:7.500px;letter-spacing:.21px;color:#6e5f18">Hummingbird Survey</div>
<div class="t" style="left:343.800px;top:101.900px;font-size:4.080px;line-height:5.900px;height:auto;letter-spacing:0;color:#4b4972">Monarch Health is a citizen science project
in which volunteers sample wild monarch...</div>
<div class="t" style="left:440.600px;top:101.900px;font-size:4.080px;line-height:5.900px;height:auto;letter-spacing:0;color:#4d5c38">Monarch Health is a citizen science project
in which volunteers sample wild monarch...</div>
<div class="t" style="left:537.600px;top:101.900px;font-size:4.080px;line-height:5.900px;height:auto;letter-spacing:0;color:#6a590f">Monarch Health is a citizen science project
in which volunteers sample wild monarch...</div>
<div class="t" style="left:343.800px;top:113.500px;font-size:2.600px;letter-spacing:.28px;color:#7a77a8">● GLOBAL</div>
<div class="t" style="left:440.600px;top:113.500px;font-size:2.600px;letter-spacing:.28px;color:#6f8354">● CHARLESTON, SC</div>
<div class="t" style="left:537.600px;top:113.500px;font-size:2.600px;letter-spacing:.28px;color:#8c7718">● ROCKY MOUNTAIN NATIONAL PARK</div>

<!-- main frame -->
<div class="a" style="left:333px;top:188px;width:464px;height:293px;background:#959595;border-radius:2.200px;overflow:hidden">
<svg style="left:0;top:0" width="464" height="293" viewBox="333 188 464 293"><defs><filter id="bl3" x="-10%" y="-10%" width="120%" height="120%"><feGaussianBlur stdDeviation=".32"/></filter><filter id="bl5" x="-10%" y="-10%" width="120%" height="120%"><feGaussianBlur stdDeviation=".55"/></filter><filter id="bl8" x="-20%" y="-20%" width="140%" height="140%"><feGaussianBlur stdDeviation="1.1"/></filter><filter id="rough" x="-10%" y="-10%" width="120%" height="120%"><feTurbulence type="fractalNoise" baseFrequency=".5" numOctaves="2" seed="3" result="n"/><feDisplacementMap in="SourceGraphic" in2="n" scale="2.6" xChannelSelector="R" yChannelSelector="G"/></filter><filter id="roughtex" x="-10%" y="-10%" width="120%" height="120%"><feTurbulence type="fractalNoise" baseFrequency=".5" numOctaves="2" seed="3" result="n"/><feDisplacementMap in="SourceGraphic" in2="n" scale="2.6" xChannelSelector="R" yChannelSelector="G" result="d"/><feTurbulence type="fractalNoise" baseFrequency=".8" numOctaves="2" seed="9" result="m"/><feColorMatrix in="m" type="matrix" values="0 0 0 0 .64  0 0 0 0 .64  0 0 0 0 .64  0 0 0 6 -3.05" result="sp"/><feComposite in="sp" in2="d" operator="in" result="s2"/><feMerge><feMergeNode in="d"/><feMergeNode in="s2"/></feMerge></filter><filter id="rough2" x="-10%" y="-10%" width="120%" height="120%"><feTurbulence type="fractalNoise" baseFrequency=".4" numOctaves="2" seed="12" result="n"/><feDisplacementMap in="SourceGraphic" in2="n" scale="2.2" xChannelSelector="R" yChannelSelector="G"/><feGaussianBlur stdDeviation=".3"/></filter><filter id="tex" x="-5%" y="-5%" width="110%" height="110%"><feTurbulence type="fractalNoise" baseFrequency=".55" numOctaves="3" seed="5" result="m"/><feColorMatrix in="m" type="matrix" values="0 0 0 0 .62  0 0 0 0 .62  0 0 0 0 .62  0 0 0 5 -2.98" result="sp"/><feComposite in="sp" in2="SourceGraphic" operator="in" result="s2"/><feMerge><feMergeNode in="SourceGraphic"/><feMergeNode in="s2"/></feMerge></filter></defs><g filter="url(#bl3)"><g filter="url(#tex)"><g><path d="M417.8 292.2l-1.9 -1.6M409.3 286.2l0 -1.3M433.8 290l-1 -0.9M403.7 293.9l-0.8 -1.2M406.3 277.9l-0.5 -2.3M424.4 287.6l-1.2 -2.7M424.7 291.1l1.1 -1.4M427.6 297.5l-0.6 -2.4M417 287.2l-0.7 -1.1M415.4 280.1l0.4 -1.8M410.8 290l1.2 -2.5M421.6 298.4l1.6 -1.6M419.6 281.1l-2.2 -2.2M404.9 294l-0 -1.5M437.6 290.8l0.5 -2.7M428.7 282.9l0.6 -2.5M409 283.6l2.4 -1.7M404.1 289.8l0.6 -1.2M407.9 276.4l-1.2 -2.6M408.1 295.5l-0.1 -1.2M423.9 291.5l0.7 -1.1M427.5 292.5l1.4 -1.4M432.8 292.3l1.7 -1.6M429.4 275.9l-0.3 -1.7M408.2 298.4l-2 -2.4M425 293.4l-0 -1.7M412.7 284.5l-0.2 -1.2M410.4 295.5l1.3 -2.8M404.7 286.9l-2 -1.6M436.2 280.6l1.8 -2.4M411.2 293.2l0.4 -1.3M425 289.1l-1 -1.2M419 290.1l-0.8 -0.9M430.5 292.7l0.9 -0.9M415.7 284.9l-0.5 -1.6M416.9 291.1l2.5 -1.4M407.2 290l-1 -0.9M415.6 293.4l-1.8 -2.2M441.9 290l-1.5 -1.7M418.6 287.5l1.9 -1.2M432.5 279.1l-0.4 -1.7M430.3 298.8l1.3 -1.9M416.7 293.2l2.4 -1.4M432.5 277.8l1.4 -2.5M423.1 297.7l-1.6 -1.1M431 289.2l0.7 -1.6M433.9 285.6l2.7 -1.5M432.4 285.8l-0.9 -1.4M423.7 293.3l1.9 -1.6M428.5 280.1l1.5 -2M435.6 293.7l1.7 -2.5M421 278.6l0.9 -1.3M411.5 299l-0.6 -3.1M403.8 296.1l-1.6 -2.1M425.9 291.3l1.9 -2.4M432.8 298.3l1.1 -3M412 296.2l-1.2 -0.8M437.5 285.9l1.8 -1.3M402.6 293.4l-1.6 -2.4M420.9 294.9l0.3 -1.6M420.2 296.6l1.1 -0.9M412.7 295.2l1.8 -1.5M402.8 294.6l0.2 -2.2M419 287.8l-1.3 -1.7M440 288.3l-0.1 -1.5M418.6 277.9l0.1 -1.8M403.3 283.7l0.2 -1.4M421.1 294.7l0.1 -2.7M403.8 283.3l-0.3 -3M410 281.7l0.9 -2M406.7 290.9l1.8 -1.3M414.7 275.2l-1.4 -2.7M401.4 282.8l-1.9 -2.1M430.6 294.1l-0.7 -1.2M436.4 293l2.1 -1.8M431.1 297.8l-1.7 -1.9M436.8 278.4l1.4 -0.9M409.6 293.6l2.1 -2.4M427.9 295.4l-0.7 -2.1M424.7 294.9l-2.2 -1.5M408.4 285l-0.4 -1.2M410.6 281.1l1.1 -0.7M426.1 274.1l-0.6 -1.3M439.2 291.1l-1.2 -1.3M402.8 294.4l-1.3 -2.5M433.2 299.1l1 -2.1M424.3 289.4l-0.3 -2.6M439.8 294.1l1.5 -2M438.2 294.6l0.9 -0.9M410.1 290.1l1.8 -1.4M420.3 292.2l-1.1 -1.9M426.6 291.1l-0.7 -1.1M416.9 294.6l-1.1 -2.5M413.2 288l-1.6 -1M421 289.2l0.3 -2.6M426.2 296.6l-2.2 -2.1M426.5 280l1.4 -1.6M409.6 294l2.2 -1.3M410.2 298.9l0.8 -2.5M411.4 292.3l-0.9 -1M437.4 293.2l-1.1 -1.3M437.9 294.6l1.1 -2.7M419.1 294.1l-0.1 -1.8M428.4 295.5l1.4 -0.9M435.9 286.2l1.4 -0.9M416.7 295.3l-0.3 -1.2M406.7 289.5l0 -1.6M430.8 288.2l-0.3 -1.4M423.1 288.4l-0.9 -1.6M408.2 282.9l0.9 -2.5M416.7 274.8l-0.7 -1.9M427.9 287.5l0.8 -2.5M439.8 291.5l0.8 -2.9M419 275.2l0.1 -1.5M401.4 287.6l1.8 -2.1M403.4 281.1l1.1 -2.3M421.3 289.8l-0.4 -1.4M436.5 296l0.7 -2.2M408.8 279.7l-1.9 -1.1M426.4 276.3l0.2 -2.2M418.7 285.6l-1.3 -2.3M429.8 290.9l-1.5 -2.2M419.6 273.7l-0.5 -2.1M403.8 289.5l0.7 -2.6M418 285.5l-0.7 -1.3M420.5 280.9l-2 -1.3M430.2 290.4l1 -2.3M416.3 281.8l-0.1 -2.2M415 288.8l-1.7 -2.4M441.8 286.1l-0.1 -1.2M430.1 275.1l-0.9 -1.9M426.2 301.6l0.3 -1.6M430.3 295.6l-2.1 -2.3M427.2 279.2l1.3 -2.7M423.4 301.5l-1.8 -1.2M435.2 288.2l-0.8 -1.9M428.3 293.9l1.2 -1.4M439.3 288.1l-2 -2.1M436.9 282.7l-1.2 -2.7M412.3 293.9l0.7 -3.1M412.6 294.7l-1.4 -1M436.7 295.8l1.4 -1.1M421 294.5l-1.3 -1.8M406.1 298.1l1.9 -2.3M406.9 277.9l0.4 -3.1M420.3 285.6l-0.2 -2.7M421.3 276.8l-1.4 -1.1M426.7 286.1l-0.6 -2M415.6 299.6l-1.5 -2.8M415.1 282.1l-0.5 -2.3M424.6 292.2l1.2 -1M412.2 288.1l2.6 -1.5M414.6 289.4l-1.2 -1.1M418.1 290.9l-0.8 -1.5M402.6 282.2l-0.4 -2.7M408.3 293.1l-0.6 -1.9M430.3 290.5l-2.2 -2.3M404.5 287.7l-1.6 -2.5M419.7 294.2l-0.2 -2M439.9 284.2l-2.5 -1.6M438.4 290.4l-0.1 -3M420.9 287.9l1.6 -1.2M430.1 276.2l-1.5 -2.7M426.5 291l0.9 -2.1M437.7 283.7l1.4 -2.1M406.3 290.7l0.7 -1M423.2 301.7l-0.9 -2.3M427.6 292.6l1 -2.2M424.4 289.9l0.4 -2.2M414.2 291.8l-2 -1.3M416.6 296.6l1 -3M431.4 281.8l-0.8 -1.5M438.1 285.1l-1.5 -1M403.8 288.1l-1 -1.8M410.6 275.9l-1.4 -1M414.2 295.3l-1.5 -2.1M426.3 276.4l-1.2 -1.8M431.6 286.6l-1.5 -2.4M424.3 300.1l1.5 -1M413 288.1l-0.3 -1.6M410.3 275.8l-0.3 -1.5M425.9 301.9l-1.2 -0.9M432.6 291l2.2 -2M418.6 273.5l-1 -2.9M429.2 300.8l-2.2 -1.5M414.7 281l-0.6 -1.8M421.3 288.4l-0.5 -1.7M427 286.8l-1.8 -2.6M408.9 298.1l-0.3 -2.8M434.2 290.8l1.5 -1.2M425.1 295.4l-2.5 -1.7M404.7 294.8l-2.2 -1.6M425 288.6l-1.4 -2.7M420.6 274.3l-0.8 -1.7M436.7 285.1l0.8 -1.5M416.9 294.1l0.6 -1M435.3 282.4l-2.6 -1.7M422.4 297.2l2.6 -1.7M413.8 292.1l0 -2.1M428.1 285.7l1.4 -2.4M429.2 276.8l-0.8 -2.3M416 295.1l-2.1 -1.8M427 299.6l-1.3 -1.1M435.9 290.1l1.6 -1M437.1 278.3l-1.3 -1.1M432.8 293.4l-0.2 -2.6M422.3 296.5l0.9 -2.3M420.7 274.8l-1.8 -1.8M426.6 282.1l-0.6 -2.3M420.4 282.5l-0.8 -1.5M432.5 299.1l-0.8 -2.2M403.7 296.8l-1.1 -1.9M427 277.5l-2.3 -2.2M401.9 290l2.2 -1.8M431.1 289.7l-0.8 -1.2M436.5 286.2l-0.7 -3M430 281.3l1 -1.4M426.3 286.7l0.6 -2.3M423.4 295.8l-0.8 -1.2M420.5 298.7l-1.4 -2.1M432.1 288.5l-1.5 -2.1M417.8 293.1l0.3 -2.8M426.1 289.4l0.3 -2M417.7 285.3l0.6 -1.4M412.3 291.6l1.5 -1M415.1 297.5l-0.3 -1.9M435.3 277l-1.1 -1.6M419.8 282.4l0.9 -0.8M403.8 293.9l1.5 -1.4M413.9 289.2l0.2 -1.2M407.9 277.3l0.4 -1.3M411 295l-0.6 -1.4M400.3 286.1l0 -1.4M428.2 274.6l-1.1 -1.2M441.1 283l-1.7 -1.3M432 284.3l0.8 -2.9M424.3 283.6l-1.5 -2.3M404.7 295.4l-1.7 -2.3M423.5 296.2l-0.5 -2.2M427.7 292.4l2 -1.7M435.9 290.6l-2.2 -1.6M424.2 284.5l0.3 -2.4M413.5 282.9l0.4 -2M405.8 293.1l-0.2 -2.1M437.2 289.6l-1.1 -1.9M422.6 275.5l-1.3 -1.7M415.3 288.6l-0.2 -1.4M432.2 292.8l-1.8 -1.3M417.8 285.5l1.5 -2.2M417.2 287.8l-0.5 -2.1M427.3 286.6l2.5 -1.4M418.8 275.2l1.4 -0.8M399.8 288.7l-1.9 -2.4M426 274.4l-0.4 -1.3M421.3 283.2l-1.3 -2.7M423.7 283.8l1.7 -1.4M423.5 294.3l-0.8 -2.1M428.6 289.2l1.2 -0.9M412.2 275.7l0.9 -1.3M432.2 294.6l-0.7 -2.4" stroke="#dedede" stroke-width=".8" opacity=".42" fill="none" stroke-linecap="round"/><path d="M444.2 289.8l1.1 -1.9M437.8 299.6l-0.3 -2.3M443.6 283.3l0.4 -3M439.9 294.5l-0.8 -1.8M443.2 278.4l-0.8 -2.6M442.3 299.4l0.5 -2.2M439.5 277.4l-0.5 -1.1M442.1 287l1.1 -1.8M438 282.4l-1.3 -2M436.9 285.3l-0.2 -1.4M438.8 290.4l-0.8 -2.1M442.2 288l0.8 -1.2M439 280.7l0.3 -1.3M444.2 294.8l-0.5 -1.8M437 291.8l-0.4 -2.2M442.3 287.3l0.9 -2.7M439 297.6l0.1 -1.3M440.3 282.7l0.5 -1.2M437 289.7l-1.2 -2.6M438.6 291l0.4 -2.1M443.7 281.3l-0.4 -1.7M437.3 297.2l0.8 -2.5M437 296.2l-0.1 -2.5M443.1 287.5l-0.8 -1.4M438.9 278.2l0.6 -1.7M442.8 296.3l-0.7 -2.4M441.6 287.1l0.1 -2.6M439.1 291.7l-1 -2.8M444.3 277.7l-0.5 -1.6M443.2 298.5l-0.5 -2.5M444.3 284.7l0.9 -1.4M442.2 292.8l1.4 -1.9M440.9 296.1l1.1 -2.2M440.6 293.6l-0.5 -2.2M438.7 291.3l0.7 -1.1M438.1 277.9l0.8 -1.2M439.8 280.5l-0.7 -1.1M442.7 291.5l0.8 -2.3M437.5 290.6l0.8 -1.7M443.8 297.3l0.6 -1.2" stroke="#e6e6e6" stroke-width=".8" opacity=".6" fill="none" stroke-linecap="round"/><path d="M435.5 269.8Q433.8 303.9 432.4 331.9L431.9 350.3" stroke="#e8e8e8" stroke-width="1.05" fill="none" stroke-linecap="round"/><path d="M423.9 271.6Q426.6 270.9 425 269.3Q423.5 267.7 421.8 266.5Q420 265.3 418.3 264.2Q416.5 263 414.7 262Q412.9 260.9 411 259.9Q409.2 258.9 407.3 257.9Q405.5 257 403.6 256.1Q401.7 255.1 399.8 254.3Q397.9 253.4 395.9 252.6Q394 251.8 392 251Q390.1 250.3 388.1 249.6Q386.1 248.9 383.9 248.4Q381.8 248 383 250.2Q384.2 252.5 385.7 254.1Q387.2 255.8 388.8 257.2Q390.5 258.7 392.1 260Q393.8 261.3 395.5 262.5Q397.3 263.7 399.1 264.8Q400.9 265.9 402.8 266.8Q404.6 267.8 406.6 268.6Q408.5 269.4 410.5 270.1Q412.5 270.7 414.6 271.2Q416.7 271.7 419 272Q421.2 272.2 423.9 271.6z" fill="#cfcfcf"/><path d="M425.9 268.9Q428.3 269.2 428.4 266.3Q428.6 263.3 427.8 261.3Q427 259.3 426 257.6Q425 255.9 423.8 254.3Q422.6 252.7 421.3 251.3Q420 249.9 418.6 248.6Q417.2 247.3 415.7 246.1Q414.1 244.9 412.5 243.8Q410.9 242.7 409.1 241.7Q407.4 240.7 405.6 239.9Q403.7 239 401.7 238.3Q399.8 237.6 397.2 237.5Q394.7 237.3 395.4 239.4Q396.1 241.4 397.2 243.1Q398.2 244.8 399.3 246.4Q400.5 248.1 401.7 249.6Q402.9 251.1 404.1 252.6Q405.4 254.1 406.7 255.5Q408 256.9 409.4 258.2Q410.8 259.6 412.3 260.9Q413.7 262.1 415.3 263.3Q416.8 264.5 418.4 265.6Q420 266.7 421.8 267.6Q423.6 268.5 425.9 268.9z" fill="#fdfdfd"/><path d="M402 242.4L426.6 267" stroke="#b5b5b5" stroke-width=".6" opacity=".8"/><path d="M399.2 245.7L422.9 267.6" stroke="#c2c2c2" stroke-width=".5" opacity=".7"/><path d="M438.4 272.9Q439.2 274.3 440.4 273.1Q441.6 271.8 442 270.6Q442.5 269.3 442.8 268.1Q443 266.8 443.2 265.5Q443.4 264.2 443.5 263Q443.6 261.7 443.6 260.4Q443.7 259.1 443.6 257.8Q443.6 256.5 443.5 255.2Q443.5 253.9 443.3 252.6Q443.2 251.4 443 250.1Q442.8 248.8 442.6 247.4Q442.3 246.1 441.7 244.8Q441.1 243.5 440.5 244.7Q439.9 246 439.6 247.3Q439.2 248.5 438.9 249.8Q438.7 251.1 438.4 252.3Q438.2 253.6 438 254.9Q437.8 256.2 437.6 257.4Q437.4 258.7 437.3 260Q437.2 261.3 437.1 262.6Q437.1 263.8 437 265.1Q437 266.4 437.1 267.7Q437.2 269 437.4 270.3Q437.6 271.6 438.4 272.9z" fill="#f1f1f1"/><path d="M439.8 272.4Q440.6 274.3 441.9 273.6Q443.2 273 444 272.1Q444.9 271.1 445.6 270.2Q446.4 269.2 447 268.2Q447.7 267.2 448.4 266.1Q449 265.1 449.6 264Q450.2 262.9 450.8 261.9Q451.3 260.8 451.9 259.7Q452.4 258.6 452.9 257.4Q453.4 256.3 453.9 255.2Q454.4 254 454.8 252.8Q455.2 251.7 455.4 250.4Q455.7 249.1 454.2 249.6Q452.7 250.2 451.7 251Q450.6 251.8 449.6 252.6Q448.7 253.4 447.8 254.3Q446.9 255.2 446 256.2Q445.2 257.1 444.4 258.1Q443.7 259 443 260Q442.3 261 441.7 262.1Q441.1 263.2 440.6 264.3Q440.1 265.4 439.7 266.6Q439.3 267.8 439.1 269.1Q439 270.5 439.8 272.4z" fill="#fcfcfc"/><path d="M443.9 248L441.1 270.3" stroke="#a5a5a5" stroke-width=".7" opacity=".8"/><path d="M449 248L442.8 270.9" stroke="#b5b5b5" stroke-width=".5" opacity=".7"/><path d="M425 320Q427.1 320.1 426.4 317.7Q425.7 315.3 424.4 313.7Q423.2 312.1 421.8 310.7Q420.5 309.3 419 308.1Q417.6 306.9 416 305.8Q414.5 304.7 412.9 303.7Q411.3 302.7 409.6 301.8Q408 300.9 406.2 300.2Q404.5 299.4 402.7 298.8Q400.9 298.1 399 297.6Q397.1 297 395.1 296.6Q393.2 296.3 390.8 296.5Q388.5 296.6 389.7 298.3Q390.9 300 392.3 301.3Q393.7 302.6 395.2 303.9Q396.6 305.1 398.1 306.3Q399.6 307.4 401.1 308.5Q402.7 309.6 404.2 310.7Q405.8 311.7 407.4 312.7Q409 313.7 410.7 314.6Q412.3 315.5 414 316.3Q415.7 317.1 417.5 317.9Q419.2 318.6 421.1 319.2Q422.9 319.9 425 320z" fill="#fefefe"/><path d="M425.6 334.5Q428.3 334.1 426.6 332Q424.9 329.8 422.9 328.3Q421 326.8 419 325.6Q416.9 324.3 414.9 323.1Q412.8 322 410.7 321Q408.6 320 406.4 319.2Q404.2 318.3 402 317.6Q399.8 316.9 397.5 316.3Q395.3 315.7 393 315.2Q390.7 314.8 388.3 314.5Q385.9 314.2 383.5 314.1Q381 314 378.3 314.5Q375.7 315.1 377.4 317Q379.2 319 381.2 320.3Q383.2 321.7 385.2 322.9Q387.3 324.1 389.4 325.2Q391.5 326.3 393.6 327.2Q395.7 328.2 397.9 329Q400.1 329.9 402.3 330.6Q404.5 331.3 406.7 332Q409 332.6 411.3 333.1Q413.6 333.6 415.9 334Q418.2 334.4 420.6 334.6Q423 334.8 425.6 334.5z" fill="#fbfbfb"/><path d="M429 342.1Q430.5 339.7 428 339.9Q425.4 340.1 423.1 340.7Q420.7 341.2 418.4 341.9Q416.1 342.6 413.9 343.3Q411.6 344.1 409.4 345Q407.2 345.8 405 346.8Q402.9 347.7 400.7 348.7Q398.6 349.8 396.5 350.9Q394.4 352 392.4 353.2Q390.3 354.4 388.3 355.7Q386.3 357.1 384.4 358.5Q382.5 360 380.7 361.9Q379 363.8 381.9 364.4Q384.8 364.9 387.3 364.7Q389.8 364.5 392.2 364.1Q394.6 363.6 396.9 363Q399.3 362.3 401.5 361.5Q403.7 360.7 405.9 359.8Q408.1 358.8 410.2 357.7Q412.3 356.6 414.3 355.4Q416.3 354.1 418.3 352.7Q420.2 351.3 422.1 349.7Q424 348.1 425.7 346.3Q427.5 344.6 429 342.1z" fill="#fbfbfb"/><g fill="#959595" opacity="0.9"><circle cx="421.3" cy="269.7" r="0.30"/><circle cx="390.8" cy="249.7" r="0.27"/><circle cx="418.5" cy="266.5" r="0.54"/><circle cx="417.5" cy="262.2" r="0.38"/><circle cx="386.3" cy="249.3" r="0.59"/><circle cx="390.8" cy="254.7" r="0.44"/><circle cx="382.9" cy="253.2" r="0.38"/><circle cx="399.8" cy="257.5" r="0.60"/><circle cx="394.2" cy="252.2" r="0.56"/><circle cx="415.9" cy="263.7" r="0.60"/><circle cx="399.3" cy="256.5" r="0.65"/><circle cx="383.1" cy="251.9" r="0.37"/><circle cx="414.4" cy="262.5" r="0.41"/><circle cx="418.3" cy="262.9" r="0.58"/><circle cx="415.3" cy="260.9" r="0.31"/><circle cx="392.2" cy="251.6" r="0.39"/><circle cx="412.2" cy="267.2" r="0.32"/><circle cx="388.7" cy="252.9" r="0.40"/><circle cx="396.1" cy="251.5" r="0.69"/><circle cx="416.2" cy="264.6" r="0.45"/><circle cx="386.6" cy="252" r="0.42"/><circle cx="416" cy="263.6" r="0.48"/><circle cx="409.2" cy="258.1" r="0.31"/><circle cx="400.5" cy="260.8" r="0.59"/><circle cx="413.1" cy="268.1" r="0.60"/><circle cx="412.1" cy="267.5" r="0.56"/><circle cx="409.6" cy="257.9" r="0.39"/><circle cx="412.7" cy="262.1" r="0.36"/><circle cx="400.2" cy="257.9" r="0.53"/><circle cx="410.1" cy="265.7" r="0.42"/><circle cx="405.3" cy="264.2" r="0.48"/><circle cx="404.4" cy="256.8" r="0.68"/><circle cx="393.8" cy="256.6" r="0.26"/><circle cx="400" cy="257.1" r="0.56"/><circle cx="397.1" cy="253.4" r="0.35"/><circle cx="391.1" cy="250.1" r="0.60"/><circle cx="416.8" cy="262.2" r="0.46"/><circle cx="393.5" cy="256" r="0.36"/><circle cx="394.1" cy="252.9" r="0.39"/><circle cx="402.6" cy="257.3" r="0.54"/><circle cx="421.9" cy="267.5" r="0.28"/><circle cx="417.6" cy="268.7" r="0.60"/><circle cx="386.4" cy="250.4" r="0.36"/><circle cx="415.6" cy="263" r="0.65"/><circle cx="415.9" cy="267.1" r="0.34"/><circle cx="411.8" cy="259.7" r="0.58"/><circle cx="392.1" cy="250.3" r="0.47"/><circle cx="403.4" cy="259.9" r="0.64"/><circle cx="402.1" cy="260.5" r="0.55"/><circle cx="408.2" cy="263.4" r="0.67"/><circle cx="404" cy="258.6" r="0.65"/><circle cx="402.4" cy="259.6" r="0.60"/><circle cx="391.1" cy="257.4" r="0.44"/><circle cx="399.4" cy="259.1" r="0.37"/><circle cx="410.1" cy="266" r="0.40"/><circle cx="395.6" cy="254.2" r="0.51"/><circle cx="409.3" cy="265.8" r="0.27"/><circle cx="413.1" cy="268.3" r="0.50"/><circle cx="410.3" cy="265.9" r="0.66"/><circle cx="408.3" cy="261.8" r="0.53"/><circle cx="411.9" cy="261.3" r="0.56"/><circle cx="386.4" cy="251.4" r="0.27"/><circle cx="415.3" cy="268.9" r="0.55"/><circle cx="393.1" cy="254.2" r="0.44"/><circle cx="395.7" cy="257.3" r="0.54"/><circle cx="398.6" cy="261.2" r="0.67"/><circle cx="388.5" cy="247.4" r="0.25"/><circle cx="390.1" cy="248.2" r="0.60"/><circle cx="412.7" cy="267.5" r="0.58"/><circle cx="382.5" cy="247.4" r="0.54"/></g><g fill="#959595" opacity="0.8"><circle cx="392.8" cy="313.2" r="0.36"/><circle cx="391.1" cy="314.3" r="0.55"/><circle cx="386.3" cy="313" r="0.38"/><circle cx="388" cy="317.5" r="0.49"/><circle cx="379.6" cy="321.7" r="0.38"/><circle cx="389.4" cy="319.7" r="0.40"/><circle cx="384.3" cy="321.5" r="0.58"/><circle cx="392.1" cy="319" r="0.35"/><circle cx="378" cy="323.7" r="0.50"/><circle cx="393" cy="316.2" r="0.46"/><circle cx="395.9" cy="322.1" r="0.46"/><circle cx="382.8" cy="317.3" r="0.56"/><circle cx="384.2" cy="320.4" r="0.46"/><circle cx="394.3" cy="321.8" r="0.35"/><circle cx="376.8" cy="315.4" r="0.40"/><circle cx="388.3" cy="321.9" r="0.56"/><circle cx="377.6" cy="322.1" r="0.53"/><circle cx="393.8" cy="319" r="0.35"/><circle cx="393.4" cy="321.8" r="0.49"/><circle cx="394.7" cy="316.4" r="0.28"/><circle cx="387.6" cy="321.7" r="0.32"/><circle cx="391.5" cy="323.3" r="0.33"/><circle cx="388.7" cy="320.3" r="0.41"/><circle cx="380.8" cy="315.3" r="0.51"/><circle cx="392.3" cy="317.7" r="0.28"/><circle cx="392.6" cy="321.4" r="0.33"/><circle cx="388.1" cy="322.8" r="0.56"/><circle cx="387" cy="317.9" r="0.46"/></g><g fill="#959595" opacity="0.8"><circle cx="386" cy="353.9" r="0.31"/><circle cx="399.6" cy="356" r="0.45"/><circle cx="391.7" cy="358" r="0.30"/><circle cx="382.2" cy="364" r="0.38"/><circle cx="383.8" cy="359.4" r="0.53"/><circle cx="385.1" cy="359" r="0.37"/><circle cx="394.8" cy="351.7" r="0.26"/><circle cx="407.3" cy="362.4" r="0.42"/><circle cx="396.1" cy="354.8" r="0.52"/><circle cx="392.3" cy="363.4" r="0.52"/><circle cx="402.7" cy="363.6" r="0.34"/><circle cx="382" cy="354" r="0.31"/><circle cx="383.2" cy="352.1" r="0.45"/><circle cx="404.1" cy="357.2" r="0.58"/><circle cx="405.2" cy="352.3" r="0.46"/><circle cx="391.5" cy="353" r="0.59"/><circle cx="387.8" cy="358.6" r="0.47"/><circle cx="406.4" cy="359.9" r="0.39"/><circle cx="392.9" cy="353.5" r="0.59"/><circle cx="407.3" cy="354.3" r="0.26"/><circle cx="387.8" cy="355.9" r="0.57"/><circle cx="405" cy="362" r="0.27"/><circle cx="401.9" cy="360.4" r="0.48"/><circle cx="407.2" cy="352.2" r="0.30"/><circle cx="401" cy="363.3" r="0.49"/><circle cx="388.9" cy="358.9" r="0.52"/><circle cx="383.8" cy="355.5" r="0.34"/><circle cx="384.3" cy="357.5" r="0.31"/><circle cx="387.3" cy="353.3" r="0.49"/><circle cx="381.3" cy="360.5" r="0.32"/><circle cx="381.9" cy="363.1" r="0.33"/><circle cx="405.8" cy="362.4" r="0.56"/><circle cx="384.7" cy="357.1" r="0.28"/><circle cx="405.7" cy="362.1" r="0.47"/></g><g fill="#959595" opacity="0.7"><circle cx="401.8" cy="242.6" r="0.50"/><circle cx="402.1" cy="246.2" r="0.29"/><circle cx="398.7" cy="239.2" r="0.46"/><circle cx="403.1" cy="240.2" r="0.51"/><circle cx="399.3" cy="243.5" r="0.30"/><circle cx="399.4" cy="248.8" r="0.35"/><circle cx="398" cy="244.5" r="0.35"/><circle cx="407.7" cy="239.9" r="0.54"/><circle cx="396.6" cy="249.5" r="0.45"/><circle cx="398.6" cy="244.3" r="0.34"/><circle cx="399.2" cy="240.9" r="0.36"/><circle cx="408.8" cy="250.7" r="0.53"/><circle cx="397.1" cy="242" r="0.52"/><circle cx="396.6" cy="247.4" r="0.34"/><circle cx="408.7" cy="238.7" r="0.49"/><circle cx="400.3" cy="240.2" r="0.25"/></g></g></g></g><g filter="url(#bl3)"><g filter="url(#rough)"><path d="M555.5 231.8Q556.6 233.8 557.1 236.1Q557.7 238.3 556.9 240.5Q556.1 242.7 554.8 244.7Q553.6 246.6 551.5 247.8Q549.5 248.9 547.2 248.6Q544.9 248.3 542.9 247.6Q540.9 246.9 538.6 246Q536.4 245.2 535.7 242.8Q535.1 240.4 534.8 238.2Q534.6 235.9 534.6 233.4Q534.6 230.9 536.4 229.4Q538.3 227.8 540.2 226.4Q542.1 224.9 544.5 225Q546.8 225.2 549.1 225.7Q551.4 226.3 552.9 228.1Q554.4 229.9 555.5 231.8z" fill="#b4b4b4"/><path d="M551.6 250.5Q551.6 252.3 551.3 254Q550.9 255.7 549.4 256.9Q547.9 258.1 546.3 259Q544.6 259.9 542.6 260Q540.6 260.1 538.9 259.2Q537.2 258.3 535.4 257.6Q533.5 256.8 532.7 255.3Q531.8 253.7 531.8 252Q531.9 250.3 532.6 248.9Q533.3 247.4 534 245.8Q534.7 244.1 536.6 243.6Q538.5 243 540.4 242.7Q542.4 242.4 544.4 242.9Q546.4 243.3 547.9 244.5Q549.4 245.8 550.5 247.3Q551.6 248.8 551.6 250.5z" fill="#b4b4b4"/><path d="M562 246.7Q562.2 248.1 562.1 249.6Q562.1 251.2 561 252.3Q559.9 253.4 558.7 254.5Q557.5 255.6 555.8 255.9Q554.1 256.1 552.6 255.4Q551.1 254.7 549.9 253.9Q548.6 253.2 547.7 252Q546.8 250.9 546 249.5Q545.2 248.1 545.9 246.7Q546.5 245.3 547.3 244Q548.1 242.7 549.6 242Q551 241.4 552.6 241Q554.1 240.6 555.6 240.9Q557.2 241.3 558.5 242.1Q559.8 242.9 560.8 244.1Q561.8 245.2 562 246.7z" fill="#b4b4b4"/><path d="M576.6 234Q577 235.9 576.8 237.9Q576.7 239.8 575.4 241.4Q574.1 242.9 572.5 244.2Q570.9 245.4 568.9 245.7Q566.8 246.1 564.8 245.8Q562.7 245.5 561.2 244.2Q559.6 242.9 558.8 241.1Q558.1 239.4 557.2 237.6Q556.3 235.9 556.6 233.9Q556.9 231.9 558.1 230.3Q559.3 228.6 561.2 227.8Q563 226.9 564.9 226.4Q566.8 225.9 568.7 226.6Q570.5 227.4 572.4 228Q574.3 228.7 575.2 230.4Q576.2 232.2 576.6 234z" fill="#b4b4b4"/><path d="M572.4 243Q572.6 244.3 572.3 245.5Q571.9 246.7 571.5 248.1Q571.2 249.4 570.1 250.3Q569 251.1 567.7 250.9Q566.3 250.7 565 250.8Q563.7 250.9 562.8 250Q561.8 249.1 561.2 247.9Q560.7 246.8 560.3 245.5Q560 244.3 560.1 242.9Q560.1 241.6 560.8 240.4Q561.5 239.2 562.7 238.8Q564 238.4 565.2 237.9Q566.3 237.3 567.5 237.9Q568.6 238.4 569.9 238.8Q571.1 239.3 571.6 240.5Q572.2 241.7 572.4 243z" fill="#b4b4b4"/><path d="M585.1 244.9Q584.8 246.5 584.1 248Q583.4 249.5 582.1 250.3Q580.7 251.1 579.4 251.9Q578 252.7 576.6 252.1Q575.3 251.6 574.2 250.8Q573.1 250 572 249.1Q570.9 248.2 570.9 246.7Q570.8 245.1 570.9 243.7Q571 242.3 571.6 240.9Q572.1 239.5 573.2 238.4Q574.2 237.3 575.7 237.1Q577.1 236.9 578.4 237.1Q579.7 237.3 581.1 237.5Q582.6 237.8 583.2 239.2Q583.8 240.6 584.6 241.9Q585.3 243.3 585.1 244.9z" fill="#b4b4b4"/><path d="M610.8 251.3Q611.2 253.9 609.6 256.1Q608 258.3 606.2 260.1Q604.3 262 601.8 263Q599.3 264 596.5 264Q593.7 264.1 591.1 263Q588.6 261.9 586.6 260Q584.6 258.1 583.5 255.7Q582.3 253.3 581.9 250.6Q581.5 247.9 583 245.6Q584.5 243.4 586.5 241.7Q588.5 239.9 591 238.7Q593.4 237.5 596.2 238Q598.9 238.6 601.4 239.5Q603.9 240.5 606.4 241.9Q609 243.3 609.6 245.9Q610.3 248.6 610.8 251.3z" fill="#b4b4b4"/><path d="M607.8 264.1Q609.4 266.1 608.7 268.6Q608 271.1 607.3 273.6Q606.7 276 604.7 278Q602.8 280 599.9 280.5Q597.1 281 594.2 281.7Q591.4 282.4 588.7 281.5Q586 280.6 584.5 278.4Q583.1 276.2 581.4 274.2Q579.8 272.1 580 269.5Q580.3 266.9 581.2 264.4Q582.1 261.9 584.5 260.3Q586.8 258.6 589.4 257.2Q592 255.8 595 255.7Q598 255.6 600.2 257.2Q602.5 258.8 604.4 260.4Q606.3 262 607.8 264.1z" fill="#b4b4b4"/><path d="M592.7 257.5Q593 259.3 592.9 261.2Q592.7 263.1 591.2 264.4Q589.7 265.6 588.2 266.7Q586.8 267.9 584.9 268.3Q583.1 268.8 581.3 268.2Q579.5 267.7 578 266.7Q576.4 265.8 575.5 264.3Q574.5 262.8 574.1 261.1Q573.7 259.3 573.9 257.5Q574.1 255.7 575.3 254.3Q576.5 253 578 251.9Q579.5 250.9 581.3 250.3Q583.1 249.6 584.8 250.5Q586.5 251.4 588.3 252Q590 252.7 591.2 254.2Q592.4 255.6 592.7 257.5z" fill="#b4b4b4"/><path d="M582.2 276.8Q582.1 279.2 581.4 281.4Q580.8 283.5 579.8 285.7Q578.9 287.9 576.9 288.6Q574.9 289.2 573 289.4Q571.1 289.7 569.2 289.2Q567.3 288.8 565.7 287.5Q564 286.3 563.5 284Q563.1 281.7 562.8 279.4Q562.4 277.2 563 275Q563.6 272.8 564.6 270.7Q565.6 268.5 567.6 267.7Q569.5 266.8 571.5 266.2Q573.5 265.5 575.3 266.8Q577 268.1 578.5 269.3Q580.1 270.6 581.2 272.5Q582.3 274.5 582.2 276.8z" fill="#b4b4b4"/><path d="M575.8 265Q576.4 266.3 575.9 267.7Q575.4 269.1 574.6 270.1Q573.9 271.2 572.8 271.9Q571.8 272.6 570.6 273.1Q569.5 273.6 568.3 273.1Q567.1 272.6 565.9 272.2Q564.7 271.7 563.9 270.4Q563.1 269.2 563.2 267.8Q563.3 266.3 563.5 265Q563.7 263.7 564.2 262.3Q564.7 261 565.8 260.3Q566.9 259.5 568.2 259.1Q569.5 258.8 570.7 259.3Q571.9 259.8 572.8 260.7Q573.8 261.5 574.5 262.6Q575.3 263.7 575.8 265z" fill="#b4b4b4"/><path d="M561.2 268.5Q563.3 270.7 562.6 273.6Q561.8 276.6 560.6 279.3Q559.4 282 557 284.3Q554.6 286.5 551.4 287.9Q548.2 289.3 544.7 289.6Q541.2 290 537.5 289.7Q533.9 289.5 532.1 287Q530.4 284.5 529.3 282Q528.2 279.6 526.9 276.9Q525.5 274.1 527 271.2Q528.6 268.3 531.1 265.8Q533.7 263.3 537.4 262.4Q541.1 261.5 544.7 260.5Q548.4 259.6 551.9 260.5Q555.4 261.3 557.2 263.8Q559 266.2 561.2 268.5z" fill="#b4b4b4"/><path d="M564.2 265.3Q564.4 267 564.1 268.8Q563.8 270.5 562.7 271.9Q561.5 273.3 559.9 274.1Q558.3 275 556.6 275.2Q554.8 275.3 553 275Q551.3 274.8 549.9 273.8Q548.5 272.8 547.6 271.5Q546.8 270.1 546.1 268.6Q545.4 267 545.9 265.4Q546.5 263.8 547.2 262.2Q547.9 260.6 549.7 260.2Q551.5 259.7 553.1 258.8Q554.8 257.9 556.6 258.4Q558.4 258.8 560.1 259.7Q561.8 260.5 562.9 262Q563.9 263.5 564.2 265.3z" fill="#b4b4b4"/><path d="M577.2 252.3Q577.7 254.4 577 256.5Q576.3 258.6 574.7 260Q573.2 261.4 571.8 263.1Q570.4 264.7 568.2 264.6Q566 264.6 563.9 264.3Q561.9 264 559.9 263.1Q558 262.2 556.8 260.4Q555.7 258.5 555.4 256.5Q555.1 254.4 555.1 252.2Q555.1 250 556.5 248.4Q558 246.7 559.9 245.8Q561.9 244.8 563.9 244.5Q566 244.2 568.2 244.1Q570.4 244 572.1 245.4Q573.8 246.9 575.2 248.5Q576.6 250.2 577.2 252.3z" fill="#b4b4b4"/></g><g filter="url(#roughtex)"><path d="M553.7 232.8Q554.4 234.5 554.5 236.2Q554.5 238 554.4 239.9Q554.2 241.7 553.2 243.3Q552.2 245 550.4 245.3Q548.5 245.7 546.8 246.4Q545.1 247.2 543.2 246.7Q541.3 246.2 539.8 244.9Q538.3 243.5 537.4 241.8Q536.5 240 537 238.1Q537.5 236.2 537.5 234.3Q537.4 232.4 538.4 230.8Q539.4 229.2 541.4 229Q543.3 228.8 544.9 228.4Q546.6 228 548.2 228.6Q549.9 229.1 551.4 230.1Q553 231 553.7 232.8z" fill="#d9d9d9"/><path d="M548.8 250.8Q548.8 252 548.5 253.1Q548.1 254.3 547.4 255.3Q546.6 256.4 545.1 256.5Q543.5 256.6 542.2 256.7Q540.9 256.8 539.6 256.5Q538.3 256.2 537.3 255.5Q536.2 254.8 535.6 253.8Q535 252.8 534.1 251.6Q533.3 250.5 533.8 249.3Q534.4 248.1 535.7 247.5Q537 246.9 538.1 246.1Q539.2 245.4 540.6 245.4Q542.1 245.4 543.4 245.8Q544.8 246.2 545.9 246.9Q547 247.6 547.9 248.6Q548.8 249.6 548.8 250.8z" fill="#d9d9d9"/><path d="M559.7 247.1Q559.9 248.1 559.6 249.1Q559.2 250 558.6 250.7Q557.9 251.5 557 252.1Q556.2 252.6 555.1 252.7Q554.1 252.8 553 252.8Q551.9 252.8 550.8 252.4Q549.8 251.9 549.4 250.9Q548.9 250 548.9 249.1Q548.8 248.1 549 247.2Q549.1 246.3 549.6 245.5Q550.1 244.7 551 244Q551.8 243.4 553 243.1Q554.1 242.8 555.2 243.2Q556.2 243.6 557.3 244Q558.4 244.3 559 245.3Q559.5 246.2 559.7 247.1z" fill="#d9d9d9"/><path d="M573.9 234.6Q574.2 235.9 573.9 237.2Q573.6 238.6 572.9 239.7Q572.1 240.9 571 241.8Q569.8 242.8 568.3 242.8Q566.8 242.9 565.4 242.8Q563.9 242.7 562.7 241.8Q561.6 240.9 560.9 239.7Q560.3 238.5 559.8 237.2Q559.3 235.9 559.5 234.5Q559.7 233 560.8 232.2Q562 231.3 563 230.3Q564 229.4 565.4 229.1Q566.8 228.8 568.4 228.8Q569.9 228.8 571.3 229.6Q572.6 230.4 573.1 231.8Q573.6 233.2 573.9 234.6z" fill="#d9d9d9"/><path d="M570.2 243.5Q570.6 244.3 570.4 245.2Q570.2 246 569.6 246.6Q569 247.2 568.4 247.7Q567.8 248.3 567.1 248.3Q566.3 248.3 565.5 248.4Q564.7 248.6 564.1 248Q563.4 247.5 562.9 246.8Q562.3 246.1 562.2 245.2Q562.1 244.3 562.3 243.4Q562.5 242.6 562.9 241.8Q563.4 241.1 564.1 240.6Q564.8 240.2 565.5 240.2Q566.3 240.3 567.1 240.2Q567.9 240.2 568.4 240.9Q568.9 241.5 569.3 242.1Q569.8 242.7 570.2 243.5z" fill="#d9d9d9"/><path d="M582 244.7Q582.3 245.7 581.5 246.5Q580.7 247.2 580.1 247.9Q579.4 248.5 578.6 248.8Q577.7 249.2 576.8 249.5Q575.8 249.8 575.2 249Q574.5 248.2 574.1 247.5Q573.6 246.7 573 245.9Q572.4 245 572.9 244Q573.4 243 573.6 241.9Q573.7 240.8 574.6 240.1Q575.4 239.5 576.3 239.1Q577.3 238.6 578.3 238.6Q579.3 238.7 580 239.3Q580.8 240 581.4 240.7Q582.1 241.5 582 242.6Q581.8 243.7 582 244.7z" fill="#d9d9d9"/><path d="M608 251.3Q608.5 253.4 607.3 255.2Q606.2 257.1 604.8 258.7Q603.3 260.3 601 260.5Q598.6 260.6 596.4 261.3Q594.2 261.9 591.9 261.2Q589.5 260.4 588.6 258.3Q587.7 256.2 586.5 254.4Q585.4 252.7 585.1 250.6Q584.8 248.6 585.4 246.5Q586 244.4 588.1 243.4Q590.1 242.4 592.1 241.7Q594.1 241.1 596.3 241Q598.4 241 600.7 241.5Q602.9 242 604.7 243.4Q606.5 244.9 607 247Q607.6 249.1 608 251.3z" fill="#d9d9d9"/><path d="M605.9 264.7Q606.5 266.7 606.5 268.8Q606.4 270.8 605.4 272.7Q604.4 274.6 602.8 276.1Q601.2 277.7 598.9 278.2Q596.6 278.7 594.3 279.2Q592 279.7 589.4 279.4Q586.9 279.1 585.7 277.2Q584.4 275.3 583.2 273.5Q581.9 271.7 582.7 269.6Q583.4 267.5 583.8 265.4Q584.2 263.3 586 261.6Q587.7 260 590.1 259.2Q592.5 258.3 594.9 258.4Q597.4 258.5 599.5 259.3Q601.7 260 603.6 261.4Q605.4 262.7 605.9 264.7z" fill="#d9d9d9"/><path d="M590.6 257.9Q590.8 259.3 590 260.5Q589.3 261.7 588.5 262.7Q587.8 263.7 586.9 264.8Q586 265.9 584.6 266.3Q583.1 266.7 581.7 266.2Q580.4 265.6 579.2 264.9Q578.1 264.1 577.2 263.1Q576.2 262 576.3 260.7Q576.4 259.3 576.6 258.1Q576.8 256.8 577.6 255.8Q578.4 254.8 579.3 253.9Q580.3 252.9 581.7 252.9Q583.1 252.8 584.4 253.1Q585.7 253.4 587 253.9Q588.4 254.3 589.3 255.4Q590.3 256.5 590.6 257.9z" fill="#d9d9d9"/><path d="M580 277Q579.6 279 579.4 280.9Q579.2 282.8 578.1 284.1Q576.9 285.4 575.7 286.7Q574.5 288 572.9 288Q571.3 287.9 570 287.1Q568.6 286.3 567.6 285.2Q566.5 284.1 566 282.5Q565.6 280.9 565.1 279.2Q564.7 277.5 565.2 275.7Q565.7 274 566.8 272.7Q567.9 271.4 569.1 270.4Q570.3 269.4 571.7 269.2Q573.2 269 574.7 269.1Q576.3 269.2 577.1 270.8Q577.9 272.5 579.2 273.7Q580.4 275 580 277z" fill="#d9d9d9"/><path d="M573.4 265.4Q573.5 266.3 573.3 267.2Q573.2 268.2 572.8 268.9Q572.3 269.6 571.7 270.3Q571.1 271 570.3 271.1Q569.5 271.3 568.7 271Q567.9 270.7 567.3 270.2Q566.7 269.6 566.1 268.9Q565.6 268.2 565.4 267.3Q565.2 266.3 565.5 265.4Q565.9 264.6 566.2 263.7Q566.5 262.8 567.2 262.2Q567.8 261.6 568.6 261.6Q569.5 261.7 570.2 261.9Q570.9 262.2 571.5 262.7Q572.1 263.2 572.7 263.8Q573.3 264.4 573.4 265.4z" fill="#d9d9d9"/><path d="M558.6 269.7Q560.6 271.3 561 273.8Q561.4 276.3 560 278.8Q558.5 281.3 555.7 282.7Q552.8 284.2 550.1 285.3Q547.4 286.4 544.5 286.7Q541.6 287.1 539 286.4Q536.4 285.8 533.7 284.8Q531 283.8 529.6 281.7Q528.1 279.6 528.1 277.1Q528 274.5 530.2 272.4Q532.3 270.2 533.8 267.8Q535.4 265.5 538.6 264.8Q541.8 264.2 544.7 263.8Q547.7 263.3 550.8 263.6Q553.8 263.9 555.2 265.9Q556.6 268 558.6 269.7z" fill="#d9d9d9"/><path d="M560.8 265.9Q561 267 561.2 268.3Q561.5 269.5 560.4 270.3Q559.4 271.2 558.3 271.8Q557.3 272.5 556 272.9Q554.8 273.2 553.4 273Q552.1 272.9 551.3 271.9Q550.4 270.9 549.6 270.1Q548.7 269.3 548.4 268.2Q548.1 267 548.3 265.9Q548.5 264.7 549.4 263.8Q550.3 263 551.2 262.1Q552.1 261.3 553.5 260.8Q554.8 260.4 556.1 260.9Q557.3 261.5 558.5 262.1Q559.6 262.7 560.1 263.8Q560.6 264.9 560.8 265.9z" fill="#d9d9d9"/><path d="M574.2 252.8Q574.1 254.4 574.1 256Q574.1 257.7 572.8 258.7Q571.5 259.8 570.5 261.2Q569.5 262.6 567.7 262.9Q566 263.3 564.5 262.3Q563 261.4 561.2 261.1Q559.4 260.7 558.8 259.1Q558.3 257.5 557.6 256Q557 254.4 557.3 252.8Q557.7 251.1 558.9 250Q560.2 248.9 561.4 247.7Q562.6 246.6 564.3 246.3Q566 246 567.7 246.2Q569.4 246.4 570.6 247.6Q571.7 248.9 573 250Q574.3 251.1 574.2 252.8z" fill="#d9d9d9"/></g><g filter="url(#bl8)"><path d="M547.9 234.7Q548.6 236.2 547.9 237.8Q547.2 239.4 546.1 240.4Q545 241.5 543.7 241.4Q542.4 241.3 541.1 241.3Q539.7 241.4 538.9 240.2Q538.1 239 537.4 237.6Q536.7 236.2 537.1 234.6Q537.5 233.1 538.6 232Q539.7 231 541 231Q542.4 231 543.7 230.9Q545.1 230.8 546.1 231.9Q547.1 233.1 547.9 234.7z" fill="#f1f1f1" opacity="0.8"/><path d="M542.5 250.3Q542.5 251.1 542.8 252Q543.1 252.9 542.1 253.5Q541.1 254 540 253.9Q538.9 253.8 537.6 254Q536.4 254.3 536.1 253.4Q535.7 252.5 535.3 251.8Q534.9 251.1 534.9 250.2Q534.9 249.4 535.8 248.8Q536.7 248.3 537.8 248.1Q538.9 247.9 540 248.1Q541.1 248.2 541.8 248.9Q542.4 249.6 542.5 250.3z" fill="#f1f1f1" opacity="0.8"/><path d="M570.3 232.9Q570.7 233.6 570.4 234.4Q570 235.1 569.3 235.6Q568.6 236.1 567.7 236.8Q566.8 237.4 565.7 237.2Q564.5 237 563.8 236.2Q563.1 235.4 562.7 234.5Q562.2 233.6 562.8 232.8Q563.4 232 564.2 231.4Q564.9 230.9 565.9 230.6Q566.8 230.3 568.1 230.2Q569.3 230.1 569.5 231.2Q569.8 232.2 570.3 232.9z" fill="#f1f1f1" opacity="0.8"/><path d="M605.7 248Q606.4 249.4 605.7 250.7Q605 252 604.3 253.5Q603.6 255.1 601.8 255Q600.1 255 598.6 254.6Q597.1 254.2 596 253.2Q594.8 252.2 594.3 250.8Q593.7 249.4 593.9 247.7Q594 246.1 595.6 245.3Q597.1 244.5 598.6 243.5Q600.1 242.6 601.4 243.8Q602.7 245 603.9 245.8Q605 246.7 605.7 248z" fill="#f1f1f1" opacity="0.8"/><path d="M603.6 269.1Q603.9 270.3 603.6 271.5Q603.2 272.7 602.6 274.2Q602 275.7 600.2 276.1Q598.3 276.5 596.9 275.5Q595.4 274.6 594.4 273.7Q593.3 272.8 592.6 271.6Q591.9 270.3 592 268.8Q592 267.3 593.3 266.1Q594.6 264.9 596.5 264.5Q598.3 264.2 600.1 264.8Q601.8 265.3 602.5 266.6Q603.3 267.9 603.6 269.1z" fill="#f1f1f1" opacity="0.8"/><path d="M576.7 280.5Q577 281.7 576.6 282.9Q576.2 284 575.6 285.2Q575.1 286.3 574 286.7Q573 287.1 572 286.4Q571.1 285.7 570.4 284.9Q569.7 284.1 569 282.9Q568.3 281.7 569.2 280.7Q570 279.6 570.3 278.1Q570.6 276.6 571.8 276.1Q573 275.6 574.2 276Q575.4 276.4 575.9 277.8Q576.4 279.2 576.7 280.5z" fill="#f1f1f1" opacity="0.8"/><path d="M547.5 275.6Q547.8 277.3 547.2 279Q546.7 280.6 545.1 281.8Q543.5 283.1 541.2 284Q538.9 284.8 536.5 284Q534.2 283.2 533 281.7Q531.9 280.2 530.4 278.8Q528.9 277.3 530.1 275.8Q531.3 274.2 532.8 272.9Q534.3 271.7 536.6 271.1Q538.9 270.5 540.6 271.7Q542.4 273 544.8 273.4Q547.3 273.9 547.5 275.6z" fill="#f1f1f1" opacity="0.8"/><path d="M558.5 269.2Q558.6 270.3 558.1 271.3Q557.7 272.3 556.8 273Q556 273.7 554.9 273.9Q553.7 274.1 552.7 273.7Q551.7 273.3 550.7 272.8Q549.7 272.3 549.9 271.3Q550 270.3 549.9 269.4Q549.8 268.4 550.6 267.6Q551.3 266.8 552.5 266.7Q553.7 266.6 554.9 266.8Q556.1 266.9 557.2 267.5Q558.4 268.1 558.5 269.2z" fill="#f1f1f1" opacity="0.8"/><path d="M589.4 256.8Q589.7 258.1 588.9 259.1Q588.1 260 587.7 261.3Q587.4 262.5 586.3 262.7Q585.2 262.9 584.4 262.1Q583.6 261.3 582.9 260.8Q582.1 260.2 581.9 259.2Q581.8 258.1 582.1 257.2Q582.4 256.2 582.9 255.2Q583.3 254.1 584.2 253.4Q585.2 252.8 586.1 253.6Q587 254.4 588 255Q589 255.5 589.4 256.8z" fill="#f1f1f1" opacity="0.8"/></g><circle cx="566" cy="254.1" r="7.2" fill="none" stroke="#b6b6b6" stroke-width="1.3" opacity=".7"/><circle cx="536.2" cy="245" r="1.57" fill="#a8a8a8" opacity=".9"/><circle cx="603.6" cy="259.3" r="1.92" fill="#a8a8a8" opacity=".9"/><circle cx="556.9" cy="229.6" r="1.40" fill="#a8a8a8" opacity=".9"/><circle cx="529.2" cy="267.7" r="1.22" fill="#a8a8a8" opacity=".9"/><circle cx="566" cy="254.1" r="5.2" fill="#cdcdcd"/><circle cx="566" cy="254.1" r="3.7" fill="#e6e6e6"/><circle cx="566" cy="254.1" r="2.1" fill="#a4a4a4"/><circle cx="566.2" cy="254.4" r=".9" fill="#dedede"/></g><g filter="url(#bl3)"><g filter="url(#tex)"><path d="M723.8 291.4L751.1 307" stroke="#f4f4f4" stroke-width="3.4" stroke-linecap="butt"/><path d="M724.1 291.6L750.7 306.7" stroke="#aaa" stroke-width=".9"/><path d="M748.8 244.4Q749.8 247.6 749.2 251Q748.6 254.4 746.9 257.5Q745.2 260.6 742.1 262.2Q739 263.8 735.6 264.5Q732.2 265.2 728.8 264.6Q725.4 264 722.8 261.8Q720.2 259.7 718 257Q715.9 254.3 715.2 251Q714.4 247.6 714.9 244.1Q715.5 240.6 717.9 238.1Q720.3 235.6 722.9 233.6Q725.6 231.6 728.9 231.2Q732.2 230.7 735.7 230.7Q739.2 230.8 742.1 232.8Q744.9 234.9 746.3 238Q747.8 241.2 748.8 244.4z" fill="#ececec"/><path d="M746.7 245.5Q747.6 248.4 747 251.4Q746.4 254.4 744.4 256.7Q742.5 259 740 260.6Q737.6 262.2 734.7 262.2Q731.8 262.3 729.2 261.6Q726.6 260.9 724 259.9Q721.4 258.8 720.3 256.2Q719.2 253.6 718.5 251Q717.9 248.4 718.4 245.7Q718.8 243 720.5 240.9Q722.2 238.8 724.2 236.8Q726.2 234.9 729 234.4Q731.8 233.8 734.8 234Q737.8 234.1 740 236Q742.2 238 744 240.3Q745.7 242.6 746.7 245.5z" fill="#a6a6a6"/><path d="M746.8 273.2Q747.5 276.3 747 279.5Q746.5 282.7 744.5 285.3Q742.6 287.8 739.8 289.5Q737 291.1 733.9 292.3Q730.8 293.5 727.4 292.8Q724 292.2 721.3 290.2Q718.5 288.3 716.7 285.5Q714.9 282.7 714.6 279.5Q714.3 276.3 715 273.3Q715.7 270.2 717.4 267.6Q719.1 265 721.9 263.4Q724.6 261.9 727.7 260.7Q730.8 259.5 733.9 260.4Q737.1 261.4 740.1 262.9Q743 264.4 744.6 267.2Q746.1 270.1 746.8 273.2z" fill="#e2e2e2"/><path d="M719.2 284.2Q720 287.2 719.2 290.3Q718.5 293.4 716.2 295.5Q713.9 297.7 711.4 299.4Q708.9 301.2 705.9 302.3Q702.9 303.4 699.7 302.5Q696.6 301.5 693.7 300.1Q690.7 298.7 689.3 295.9Q687.9 293.1 687.6 290.2Q687.2 287.2 687.4 284.2Q687.6 281.2 689.3 278.6Q691 275.9 693.9 274.6Q696.7 273.2 699.8 272.8Q702.9 272.3 705.9 272.7Q709 273.1 712 274.4Q715 275.7 716.7 278.4Q718.4 281.1 719.2 284.2z" fill="#f6f6f6"/><path d="M699.2 258.1Q699.7 261.2 699.2 264.3Q698.6 267.5 696.7 270Q694.8 272.6 692.1 274.3Q689.4 276 686.3 277.3Q683.1 278.5 680 277.4Q676.8 276.2 673.8 274.7Q670.9 273.2 669.1 270.4Q667.3 267.6 666.9 264.4Q666.5 261.2 666.7 257.9Q666.9 254.6 669.2 252.2Q671.4 249.8 673.9 247.6Q676.5 245.5 679.8 245.3Q683.1 245.1 686.4 245.5Q689.7 245.8 692.3 247.8Q695 249.7 696.8 252.3Q698.7 254.9 699.2 258.1z" fill="#fbfbfb"/><path d="M719.2 234.8Q720.7 238.1 719.8 241.7Q718.9 245.3 716.5 248Q714.1 250.7 711.3 253.1Q708.5 255.5 704.7 255.6Q701 255.7 697.4 255.1Q693.8 254.6 690.5 253Q687.2 251.4 685.2 248.2Q683.3 245.1 683.1 241.6Q682.9 238.1 682.8 234.5Q682.7 230.9 685.3 228.3Q688 225.8 691 223.8Q693.9 221.9 697.5 220.7Q701 219.6 704.5 220.7Q708.1 221.8 711.1 223.7Q714.1 225.6 715.9 228.6Q717.7 231.5 719.2 234.8z" fill="#fdfdfd"/><path d="M728.4 257.7Q727.8 261.6 727.9 265.4Q728.1 269.1 724.8 271.5Q721.4 274 717.9 276.2Q714.3 278.4 709.9 277.9Q705.5 277.5 701.5 276.1Q697.5 274.6 693.7 272.2Q689.9 269.7 689.9 265.7Q689.9 261.6 690.7 257.9Q691.5 254.2 693.9 250.8Q696.3 247.4 701 246.9Q705.7 246.5 709.8 246.6Q713.9 246.6 718.6 246.9Q723.4 247.2 726.3 250.5Q729.1 253.8 728.4 257.7z" fill="#f7f7f7"/><g fill="#e4e4e4" opacity="0.85"><circle cx="742.6" cy="249.4" r="0.41"/><circle cx="720.7" cy="250.8" r="0.38"/><circle cx="738.3" cy="238.7" r="0.35"/><circle cx="730.6" cy="241.2" r="0.42"/><circle cx="734.8" cy="255.3" r="0.79"/><circle cx="733.7" cy="238.8" r="0.34"/><circle cx="739.1" cy="245.5" r="0.73"/><circle cx="724.9" cy="259.6" r="0.82"/><circle cx="726" cy="237.6" r="0.52"/><circle cx="731.5" cy="246.8" r="0.61"/><circle cx="724.4" cy="255.4" r="0.53"/><circle cx="730.6" cy="249" r="0.62"/><circle cx="737.9" cy="238.6" r="0.31"/><circle cx="734.3" cy="251" r="0.61"/><circle cx="730.5" cy="248.6" r="0.47"/><circle cx="733.4" cy="256.5" r="0.40"/><circle cx="726.8" cy="245.9" r="0.80"/><circle cx="731.7" cy="245.1" r="0.86"/><circle cx="740.6" cy="243.3" r="0.44"/><circle cx="724.9" cy="246.4" r="0.89"/><circle cx="721.8" cy="246" r="0.68"/><circle cx="725.9" cy="249.5" r="0.34"/><circle cx="728.4" cy="248.7" r="0.31"/><circle cx="735.5" cy="258.6" r="0.83"/><circle cx="735.8" cy="240.9" r="0.71"/><circle cx="722.7" cy="249.9" r="0.85"/><circle cx="735.1" cy="240.4" r="0.61"/><circle cx="723.2" cy="242.2" r="0.69"/><circle cx="722.5" cy="247.4" r="0.62"/><circle cx="727.4" cy="241.6" r="0.45"/><circle cx="742.9" cy="252.1" r="0.64"/><circle cx="736.1" cy="238.8" r="0.73"/><circle cx="729.4" cy="250.1" r="0.67"/><circle cx="729.7" cy="242.4" r="0.45"/><circle cx="720.8" cy="248.9" r="0.53"/><circle cx="725.5" cy="260.3" r="0.44"/><circle cx="732.8" cy="248.2" r="0.47"/><circle cx="740.5" cy="237.4" r="0.34"/><circle cx="744" cy="246.6" r="0.34"/><circle cx="726.8" cy="246.6" r="0.74"/><circle cx="718.4" cy="243.2" r="0.51"/><circle cx="737" cy="252.3" r="0.81"/><circle cx="742.2" cy="249.1" r="0.74"/><circle cx="739.4" cy="257" r="0.59"/><circle cx="740.9" cy="255.3" r="0.85"/><circle cx="733.8" cy="248.5" r="0.88"/><circle cx="733.3" cy="245.9" r="0.77"/><circle cx="744.1" cy="252" r="0.53"/><circle cx="729.1" cy="247.2" r="0.73"/><circle cx="723.4" cy="245" r="0.63"/><circle cx="726.6" cy="242.7" r="0.77"/><circle cx="743.2" cy="248.5" r="0.57"/><circle cx="719.5" cy="242.2" r="0.39"/><circle cx="733.5" cy="251.2" r="0.35"/><circle cx="733.1" cy="248.4" r="0.85"/><circle cx="740.5" cy="249.8" r="0.90"/><circle cx="731.4" cy="249.1" r="0.71"/><circle cx="726.8" cy="243.9" r="0.66"/><circle cx="737.1" cy="249.3" r="0.36"/><circle cx="726.3" cy="245.3" r="0.64"/><circle cx="733.4" cy="260.9" r="0.88"/><circle cx="730.3" cy="246.6" r="0.67"/><circle cx="731.8" cy="258.8" r="0.40"/><circle cx="742.4" cy="248.9" r="0.37"/><circle cx="744.6" cy="246" r="0.39"/><circle cx="723.3" cy="248.9" r="0.60"/><circle cx="735.4" cy="251.9" r="0.51"/><circle cx="741" cy="242.2" r="0.71"/><circle cx="743" cy="251.3" r="0.70"/><circle cx="719.9" cy="248.5" r="0.63"/></g><g fill="#9a9a9a" opacity="0.85"><circle cx="722.9" cy="281" r="0.57"/><circle cx="727.8" cy="263.6" r="0.38"/><circle cx="739.5" cy="263.1" r="0.35"/><circle cx="719.7" cy="276.9" r="0.71"/><circle cx="734.6" cy="286.3" r="0.33"/><circle cx="724.8" cy="283.3" r="0.48"/><circle cx="719.7" cy="268.4" r="0.35"/><circle cx="744.3" cy="278.8" r="0.47"/><circle cx="729.1" cy="272.3" r="0.33"/><circle cx="743.9" cy="278.9" r="0.78"/><circle cx="728.7" cy="280.1" r="0.42"/><circle cx="742.7" cy="270" r="0.75"/><circle cx="741.4" cy="269.6" r="0.60"/><circle cx="746.2" cy="276" r="0.77"/><circle cx="722.1" cy="272.5" r="0.66"/><circle cx="721.4" cy="269.8" r="0.74"/><circle cx="730.2" cy="285.8" r="0.42"/><circle cx="719.8" cy="271.4" r="0.39"/><circle cx="732.8" cy="263.3" r="0.57"/><circle cx="726.9" cy="272.9" r="0.33"/><circle cx="725.8" cy="267.7" r="0.40"/><circle cx="723.5" cy="267.4" r="0.32"/><circle cx="736.3" cy="270.9" r="0.38"/><circle cx="737.7" cy="262.6" r="0.43"/><circle cx="728.9" cy="287.3" r="0.70"/><circle cx="719.3" cy="271.2" r="0.66"/><circle cx="730.9" cy="267.1" r="0.53"/><circle cx="718.4" cy="283" r="0.43"/><circle cx="744.2" cy="279" r="0.48"/><circle cx="722.2" cy="279.7" r="0.41"/><circle cx="731.2" cy="277.5" r="0.44"/><circle cx="739.9" cy="272.3" r="0.63"/><circle cx="733" cy="269.8" r="0.49"/><circle cx="742.5" cy="270.2" r="0.63"/><circle cx="717.6" cy="278.2" r="0.48"/><circle cx="730.8" cy="269.4" r="0.33"/><circle cx="724.4" cy="267" r="0.36"/><circle cx="738" cy="268.9" r="0.50"/><circle cx="718.4" cy="268.7" r="0.31"/><circle cx="736.8" cy="281.5" r="0.48"/><circle cx="727.8" cy="281.4" r="0.65"/><circle cx="722.3" cy="287.6" r="0.48"/><circle cx="735.1" cy="265.6" r="0.36"/><circle cx="720.6" cy="269.6" r="0.49"/><circle cx="735.4" cy="265.5" r="0.72"/><circle cx="733.1" cy="283.3" r="0.43"/><circle cx="728.6" cy="282.2" r="0.47"/><circle cx="740" cy="269" r="0.32"/><circle cx="742.7" cy="279.7" r="0.32"/><circle cx="722.2" cy="263.2" r="0.70"/><circle cx="737.3" cy="272.6" r="0.67"/><circle cx="741.8" cy="268.9" r="0.34"/><circle cx="745.7" cy="273.6" r="0.77"/><circle cx="737.2" cy="284" r="0.71"/><circle cx="735.1" cy="274.5" r="0.33"/><circle cx="737.4" cy="273.7" r="0.56"/><circle cx="737.6" cy="286.2" r="0.43"/><circle cx="735.4" cy="277.6" r="0.42"/><circle cx="716" cy="271.4" r="0.51"/><circle cx="720.7" cy="269.8" r="0.37"/><circle cx="737.7" cy="281.8" r="0.42"/><circle cx="722.1" cy="276.6" r="0.52"/><circle cx="745.4" cy="271.2" r="0.45"/><circle cx="732.9" cy="270.6" r="0.71"/><circle cx="732.4" cy="284.7" r="0.38"/><circle cx="736.4" cy="279.4" r="0.53"/><circle cx="739.7" cy="287.1" r="0.36"/><circle cx="723.7" cy="271.5" r="0.40"/><circle cx="720.6" cy="282.8" r="0.52"/><circle cx="717.8" cy="270.3" r="0.53"/><circle cx="726.2" cy="265.1" r="0.34"/><circle cx="732.9" cy="263.1" r="0.54"/><circle cx="728.6" cy="265.8" r="0.57"/><circle cx="735.6" cy="280.3" r="0.77"/><circle cx="735.9" cy="267.9" r="0.42"/><circle cx="740" cy="287.4" r="0.45"/><circle cx="720.2" cy="280.7" r="0.72"/><circle cx="740.3" cy="287.1" r="0.67"/><circle cx="724.9" cy="265.7" r="0.71"/><circle cx="724.7" cy="271.8" r="0.58"/><circle cx="726.4" cy="287.1" r="0.42"/><circle cx="735.1" cy="286.7" r="0.65"/><circle cx="730.6" cy="276.1" r="0.38"/><circle cx="724" cy="278.8" r="0.34"/><circle cx="737.1" cy="265" r="0.52"/><circle cx="720.4" cy="283.5" r="0.30"/><circle cx="740.4" cy="273.6" r="0.44"/><circle cx="736.2" cy="276.6" r="0.51"/><circle cx="725.3" cy="274.1" r="0.63"/><circle cx="719.5" cy="269.3" r="0.52"/><circle cx="732.9" cy="271.1" r="0.40"/><circle cx="716.8" cy="270.3" r="0.53"/><circle cx="736.7" cy="279.7" r="0.45"/><circle cx="733.2" cy="291.1" r="0.54"/><circle cx="735.7" cy="269.5" r="0.47"/><circle cx="720.3" cy="282" r="0.52"/><circle cx="716.8" cy="281.4" r="0.49"/><circle cx="733.5" cy="273.3" r="0.56"/><circle cx="732.9" cy="272.7" r="0.36"/><circle cx="732.4" cy="263.3" r="0.73"/><circle cx="731.8" cy="267.9" r="0.54"/><circle cx="732.6" cy="267.1" r="0.59"/><circle cx="717.8" cy="276.6" r="0.59"/><circle cx="716.7" cy="273.1" r="0.34"/><circle cx="728.7" cy="288.2" r="0.58"/><circle cx="738" cy="284.6" r="0.36"/><circle cx="727.1" cy="265.2" r="0.78"/><circle cx="732.9" cy="285.2" r="0.37"/><circle cx="721.9" cy="271.9" r="0.31"/><circle cx="733.9" cy="266.6" r="0.45"/><circle cx="737.7" cy="273.7" r="0.74"/><circle cx="734.8" cy="288.4" r="0.58"/><circle cx="719.6" cy="284.2" r="0.47"/><circle cx="739.6" cy="282.1" r="0.71"/><circle cx="718.1" cy="271.9" r="0.67"/><circle cx="717.3" cy="277.7" r="0.70"/><circle cx="736.6" cy="268" r="0.40"/><circle cx="729" cy="287.3" r="0.59"/><circle cx="720.2" cy="277.9" r="0.45"/><circle cx="737" cy="272.2" r="0.37"/><circle cx="743.4" cy="277.4" r="0.64"/><circle cx="719" cy="276.2" r="0.74"/><circle cx="720.1" cy="286.7" r="0.64"/><circle cx="727.2" cy="275.3" r="0.38"/><circle cx="742.3" cy="272.6" r="0.74"/><circle cx="734.5" cy="262.1" r="0.46"/><circle cx="733.8" cy="261" r="0.38"/><circle cx="726.1" cy="275" r="0.59"/><circle cx="727" cy="271.3" r="0.30"/><circle cx="733.4" cy="270.6" r="0.31"/><circle cx="736.5" cy="268.6" r="0.44"/><circle cx="730.8" cy="268.2" r="0.58"/><circle cx="731.7" cy="291.3" r="0.80"/><circle cx="739.9" cy="288.5" r="0.69"/><circle cx="735.2" cy="280.6" r="0.48"/><circle cx="723.4" cy="285.9" r="0.74"/><circle cx="724.2" cy="284.8" r="0.67"/><circle cx="731.1" cy="280.6" r="0.48"/><circle cx="732.5" cy="273" r="0.33"/><circle cx="725.3" cy="270.3" r="0.79"/><circle cx="730.1" cy="271.7" r="0.42"/><circle cx="721.9" cy="271.1" r="0.37"/><circle cx="729.2" cy="274.3" r="0.58"/><circle cx="724.1" cy="265.1" r="0.33"/><circle cx="724.1" cy="269.8" r="0.66"/><circle cx="732.5" cy="290.6" r="0.47"/><circle cx="744.9" cy="278.9" r="0.34"/><circle cx="720" cy="278.8" r="0.79"/><circle cx="726" cy="285.2" r="0.51"/><circle cx="730.2" cy="289.3" r="0.44"/></g><g fill="#9d9d9d" opacity="0.8"><circle cx="707.5" cy="272.8" r="0.38"/><circle cx="707.7" cy="294" r="0.41"/><circle cx="709.8" cy="278.3" r="0.60"/><circle cx="717.1" cy="292.2" r="0.40"/><circle cx="712.9" cy="274.6" r="0.70"/><circle cx="717.3" cy="282.7" r="0.37"/><circle cx="706.5" cy="288.8" r="0.74"/><circle cx="713.6" cy="300.8" r="0.41"/><circle cx="708.6" cy="295.4" r="0.62"/><circle cx="709.9" cy="293.2" r="0.47"/><circle cx="704.4" cy="285" r="0.32"/><circle cx="713.3" cy="282.5" r="0.55"/><circle cx="712.9" cy="280.1" r="0.53"/><circle cx="703.7" cy="300.9" r="0.58"/><circle cx="713.2" cy="294.6" r="0.46"/><circle cx="705" cy="277" r="0.37"/><circle cx="716.3" cy="285.3" r="0.57"/><circle cx="712.8" cy="289.4" r="0.63"/><circle cx="713" cy="282.4" r="0.67"/><circle cx="707.5" cy="294.2" r="0.68"/><circle cx="715.7" cy="281.7" r="0.69"/><circle cx="718.9" cy="286.2" r="0.44"/><circle cx="711.7" cy="301.3" r="0.37"/><circle cx="703.6" cy="286.9" r="0.63"/><circle cx="715.7" cy="283.4" r="0.79"/><circle cx="707.1" cy="295.6" r="0.34"/><circle cx="703.9" cy="276.3" r="0.33"/><circle cx="711.4" cy="289.4" r="0.39"/><circle cx="718.3" cy="283.5" r="0.37"/><circle cx="706.3" cy="295" r="0.76"/><circle cx="706" cy="273" r="0.69"/><circle cx="707.3" cy="302.6" r="0.55"/><circle cx="713.5" cy="282.8" r="0.70"/><circle cx="710.7" cy="282.2" r="0.75"/><circle cx="705.2" cy="294.9" r="0.33"/><circle cx="713.6" cy="284.6" r="0.73"/><circle cx="704.4" cy="289.6" r="0.50"/><circle cx="713.4" cy="279.1" r="0.43"/><circle cx="707.6" cy="285.6" r="0.42"/><circle cx="706.7" cy="295.7" r="0.62"/><circle cx="708.2" cy="303" r="0.41"/><circle cx="712.5" cy="277" r="0.73"/><circle cx="717.2" cy="280.4" r="0.68"/><circle cx="716.4" cy="280.9" r="0.47"/><circle cx="711.1" cy="299.8" r="0.38"/><circle cx="714.2" cy="290.7" r="0.53"/><circle cx="712.6" cy="299.5" r="0.40"/><circle cx="717.4" cy="283.3" r="0.69"/><circle cx="708.2" cy="272.9" r="0.36"/><circle cx="706.1" cy="293.3" r="0.35"/><circle cx="708.8" cy="300.6" r="0.66"/><circle cx="704" cy="279.4" r="0.70"/><circle cx="711.4" cy="279.3" r="0.52"/><circle cx="705.1" cy="272.7" r="0.80"/><circle cx="708.5" cy="299.4" r="0.36"/><circle cx="711.2" cy="276.3" r="0.51"/><circle cx="706.3" cy="293.4" r="0.37"/><circle cx="715.1" cy="287.7" r="0.36"/><circle cx="709.1" cy="287.5" r="0.76"/><circle cx="709" cy="278.8" r="0.78"/><circle cx="717.4" cy="294.8" r="0.44"/><circle cx="706.3" cy="280.3" r="0.33"/><circle cx="704.2" cy="287.9" r="0.50"/><circle cx="712.3" cy="283.4" r="0.31"/><circle cx="714.3" cy="292.4" r="0.57"/><circle cx="712.1" cy="293.6" r="0.79"/><circle cx="717.2" cy="294.4" r="0.50"/><circle cx="708.5" cy="285.1" r="0.79"/><circle cx="709.6" cy="284.1" r="0.50"/><circle cx="705.7" cy="303.1" r="0.30"/></g><g fill="#a5a5a5" opacity="0.75"><circle cx="709.8" cy="239.4" r="0.40"/><circle cx="709.8" cy="230.2" r="0.40"/><circle cx="699.9" cy="225.8" r="0.64"/><circle cx="714" cy="239.1" r="0.32"/><circle cx="711.8" cy="229.3" r="0.56"/><circle cx="708.3" cy="229.2" r="0.69"/><circle cx="715.7" cy="232.4" r="0.54"/><circle cx="719.1" cy="227.8" r="0.55"/><circle cx="713" cy="230.2" r="0.58"/><circle cx="704.6" cy="232.7" r="0.55"/><circle cx="711.4" cy="229.3" r="0.55"/><circle cx="708.2" cy="227.6" r="0.55"/><circle cx="701.5" cy="239.1" r="0.49"/><circle cx="712.5" cy="232.6" r="0.49"/><circle cx="700.4" cy="226.3" r="0.67"/><circle cx="707.9" cy="232.7" r="0.51"/><circle cx="714.7" cy="227.9" r="0.37"/><circle cx="714.9" cy="231.6" r="0.56"/><circle cx="715.1" cy="238.9" r="0.65"/><circle cx="715.2" cy="237.6" r="0.35"/><circle cx="698.8" cy="228.1" r="0.34"/><circle cx="703.7" cy="237.4" r="0.51"/><circle cx="706" cy="225.4" r="0.46"/><circle cx="719.2" cy="235.5" r="0.48"/><circle cx="706.6" cy="237.3" r="0.60"/><circle cx="698.7" cy="235.3" r="0.45"/><circle cx="707.7" cy="227.9" r="0.45"/><circle cx="703.3" cy="230.3" r="0.31"/><circle cx="699.9" cy="233.5" r="0.32"/><circle cx="699.4" cy="235.9" r="0.41"/><circle cx="702.9" cy="227.9" r="0.63"/><circle cx="697.3" cy="234.6" r="0.64"/><circle cx="700" cy="231" r="0.62"/><circle cx="710" cy="230.1" r="0.32"/><circle cx="705.8" cy="230" r="0.59"/><circle cx="702.2" cy="230.7" r="0.56"/><circle cx="714.7" cy="229.8" r="0.45"/><circle cx="709.1" cy="239.4" r="0.38"/><circle cx="718.5" cy="235.8" r="0.45"/><circle cx="711.2" cy="229.4" r="0.33"/></g><g fill="#a8a8a8" opacity="0.7"><circle cx="718.9" cy="260.7" r="0.43"/><circle cx="709.7" cy="273.8" r="0.51"/><circle cx="708.5" cy="262.8" r="0.54"/><circle cx="706.8" cy="263.1" r="0.56"/><circle cx="707.6" cy="263.5" r="0.43"/><circle cx="721.4" cy="268" r="0.51"/><circle cx="706.3" cy="252.2" r="0.49"/><circle cx="711.7" cy="270.5" r="0.52"/><circle cx="718.8" cy="265.4" r="0.27"/><circle cx="716.2" cy="269.1" r="0.42"/><circle cx="706.9" cy="265.9" r="0.60"/><circle cx="721.1" cy="273.1" r="0.30"/><circle cx="703.9" cy="264.2" r="0.25"/><circle cx="701.3" cy="259" r="0.34"/><circle cx="722.6" cy="265.1" r="0.43"/><circle cx="706.9" cy="252.4" r="0.36"/><circle cx="722.5" cy="257.6" r="0.32"/><circle cx="705.3" cy="262.8" r="0.42"/><circle cx="712.8" cy="260.4" r="0.53"/><circle cx="711.8" cy="252.4" r="0.36"/><circle cx="711" cy="261.4" r="0.45"/><circle cx="703.5" cy="258" r="0.53"/><circle cx="702.4" cy="269" r="0.53"/><circle cx="713.1" cy="262.6" r="0.58"/><circle cx="707.8" cy="273.3" r="0.27"/><circle cx="707.4" cy="267.2" r="0.27"/><circle cx="713.2" cy="255.7" r="0.57"/><circle cx="712" cy="271.3" r="0.42"/><circle cx="716" cy="268.1" r="0.35"/><circle cx="699.5" cy="272.3" r="0.30"/><circle cx="706.7" cy="267.7" r="0.34"/><circle cx="716.8" cy="252.2" r="0.54"/><circle cx="702.4" cy="257" r="0.45"/><circle cx="703.3" cy="265.3" r="0.30"/><circle cx="705.9" cy="252" r="0.38"/><circle cx="714.8" cy="256.8" r="0.44"/><circle cx="695.3" cy="262.8" r="0.50"/><circle cx="707.3" cy="268.2" r="0.29"/><circle cx="702.3" cy="259.9" r="0.51"/><circle cx="709.7" cy="274.6" r="0.28"/><circle cx="709.2" cy="272.9" r="0.46"/><circle cx="711.2" cy="253.4" r="0.30"/><circle cx="701.6" cy="273.6" r="0.55"/><circle cx="700.1" cy="274.4" r="0.26"/><circle cx="713.3" cy="275.5" r="0.37"/><circle cx="708" cy="257.4" r="0.51"/><circle cx="698.3" cy="271" r="0.35"/><circle cx="695.4" cy="265" r="0.53"/><circle cx="713.2" cy="262.8" r="0.26"/><circle cx="710.3" cy="253.6" r="0.48"/><circle cx="696.7" cy="265.7" r="0.37"/><circle cx="705.3" cy="267.8" r="0.31"/><circle cx="703.8" cy="272.4" r="0.56"/><circle cx="709.1" cy="254.9" r="0.28"/><circle cx="709.6" cy="264.6" r="0.29"/><circle cx="708.6" cy="255.3" r="0.44"/><circle cx="710" cy="260.4" r="0.32"/><circle cx="706.4" cy="256.3" r="0.29"/><circle cx="700.5" cy="273.1" r="0.43"/><circle cx="720.2" cy="265.5" r="0.49"/></g><path d="M706.7 265.2L706.7 278.6M710.4 259.8L724.8 254.1M710.3 257.8L717.1 251.6M709.5 263.4L722.2 273.1M707 266.5L707.6 273.8M708.9 256.8L712.4 249.6M709 265.9L711.5 270.8M707.3 266.1L709.1 279.6M703.5 258.5L692.2 248.6M707.6 264.6L710.3 273.4M703.2 262.4L695.6 265.2M703.3 264.8L699 269.5M702.9 265.6L693.8 276.3M703.8 256.9L697.9 248M708.9 264L713.1 269.1M711.1 258.4L723.2 250.7M711.7 261.9L721.3 263.2M706.1 257L704.2 241.4M711 263.4L722.1 269.1M711 258.1L720.4 251.2M708.2 255.6L710.3 248.2M704.4 255.9L699.2 244M701.9 263.9L690.5 270.5M702.1 259L694.2 255.1M702.3 258.7L697.3 255.9M702.8 256.6L694.6 246.8M706 256.8L704.3 244M702.6 259L690.6 252.3M711.3 263.9L715.5 266.4M702.9 258.4L696.7 253.9M705.1 256.7L701.5 245.9M710.3 259.2L715.5 256.4M705 266.2L702.8 272.6M709.4 266.3L714.7 275.7M701.3 263.3L694.2 266M704.6 257.8L699.4 248.9M708.6 255.8L713.1 243.6M702.9 264.5L696.8 270M709.7 264.8L718.7 275.1M709.7 256.9L718 245.4M706 265.1L704.2 275.5M706 265.2L704.4 275.2M703.3 257.9L697.4 251.9M709.8 256.2L714.4 248.9" stroke="#a4a4a4" stroke-width=".5" opacity=".75"/><ellipse cx="706.6" cy="261.2" rx="3.6" ry="3.2" fill="#7e7e7e"/><circle cx="707.2" cy="261" r="1.2" fill="#c9c9c9"/><path d="M712.9 254.3L720.3 230.2" stroke="#a0a0a0" stroke-width=".7" opacity=".55" stroke-linecap="round"/><path d="M695.1 253.2L681.5 241.7" stroke="#a0a0a0" stroke-width=".7" opacity=".55" stroke-linecap="round"/><path d="M695.1 272.1L685.7 282.6" stroke="#a0a0a0" stroke-width=".7" opacity=".55" stroke-linecap="round"/><path d="M717.1 274.2L719.2 293.1" stroke="#a0a0a0" stroke-width=".7" opacity=".55" stroke-linecap="round"/><path d="M721.3 261.2L746.5 261.6" stroke="#a0a0a0" stroke-width=".7" opacity=".55" stroke-linecap="round"/></g></g><g filter="url(#rough2)"><path d="M569.1 377.7L578.9 345.5" stroke="#fcfcfc" stroke-width=".7"/><path d="M569.4 376.8Q569.6 371 562.5 368.1Q563.7 375.6 569.4 376.8z" fill="#fcfcfc"/><path d="M569.4 376.8Q574.4 379.5 580.2 374.5Q572.9 372.3 569.4 376.8z" fill="#fcfcfc"/><path d="M570.2 373.9Q569.5 368.3 562.4 366Q564.7 373.1 570.2 373.9z" fill="#fcfcfc"/><path d="M570.2 373.9Q575.3 376.5 581.1 371.6Q573.9 369.4 570.2 373.9z" fill="#fcfcfc"/><path d="M571.1 370.9Q570.7 365.6 564 363.5Q565.9 370.3 571.1 370.9z" fill="#fcfcfc"/><path d="M571.1 370.9Q576.1 372.9 580.9 367.7Q574 366.4 571.1 370.9z" fill="#fcfcfc"/><path d="M572 368Q571.7 363.4 565.8 361.8Q567.4 367.7 572 368z" fill="#fcfcfc"/><path d="M572 368Q576.6 370.7 580.4 365.3Q574.2 363.2 572 368z" fill="#fcfcfc"/><path d="M572.9 365.1Q573.3 360 567.1 358.9Q567.9 365.2 572.9 365.1z" fill="#fcfcfc"/><path d="M572.9 365.1Q577.3 367.3 580.9 362.3Q575 360.6 572.9 365.1z" fill="#fcfcfc"/><path d="M573.8 362.2Q574.7 357.6 569.2 357.5Q569.2 363 573.8 362.2z" fill="#fcfcfc"/><path d="M573.8 362.2Q577.3 364.2 580 360.1Q575.3 358.4 573.8 362.2z" fill="#fcfcfc"/><path d="M574.7 359.2Q575.5 355 570.3 353.4Q570.4 358.8 574.7 359.2z" fill="#fcfcfc"/><path d="M574.7 359.2Q578.3 362 581.9 357.8Q576.9 355.3 574.7 359.2z" fill="#fcfcfc"/><path d="M575.6 356.3Q576.8 351.8 571.4 351.8Q571 357.2 575.6 356.3z" fill="#fcfcfc"/><path d="M575.6 356.3Q578.9 359.6 581.5 354.8Q577 351.9 575.6 356.3z" fill="#fcfcfc"/><path d="M576.5 353.4Q577.4 349.5 572.7 349.2Q572.6 353.9 576.5 353.4z" fill="#fcfcfc"/><path d="M576.5 353.4Q579.6 355.5 581.8 351.6Q577.7 349.8 576.5 353.4z" fill="#fcfcfc"/><path d="M577.4 350.5Q578.9 346.9 574.7 347.5Q573.7 351.7 577.4 350.5z" fill="#fcfcfc"/><path d="M577.4 350.5Q580.1 353.3 581.1 349.1Q577.6 346.5 577.4 350.5z" fill="#fcfcfc"/><path d="M578.3 347.5Q580.1 343.9 575.8 344.9Q574.5 349 578.3 347.5z" fill="#fcfcfc"/><path d="M578.3 347.5Q580.5 350.2 581.7 346.5Q578.8 344.1 578.3 347.5z" fill="#fcfcfc"/><path d="M565.6 363L566.3 347.9" stroke="#fcfcfc" stroke-width=".7"/><path d="M565.6 362.2Q565 359.2 560.9 358.7Q562.5 362.4 565.6 362.2z" fill="#fcfcfc"/><path d="M565.6 362.2Q568.6 363 570.9 359.7Q566.9 359.4 565.6 362.2z" fill="#fcfcfc"/><path d="M565.7 359.7Q565.2 356.8 561.4 356.3Q562.8 359.9 565.7 359.7z" fill="#fcfcfc"/><path d="M565.7 359.7Q568.8 360.7 570.7 357.2Q566.7 356.7 565.7 359.7z" fill="#fcfcfc"/><path d="M565.9 357.2Q565.3 354.6 561.9 354.9Q563.3 358 565.9 357.2z" fill="#fcfcfc"/><path d="M565.9 357.2Q568.9 358.5 569.7 354.7Q565.9 353.9 565.9 357.2z" fill="#fcfcfc"/><path d="M566 354.7Q566.6 351.7 563.2 352.6Q563.2 356 566 354.7z" fill="#fcfcfc"/><path d="M566 354.7Q568.2 356.1 569.1 353.2Q566.2 352.1 566 354.7z" fill="#fcfcfc"/><path d="M566.1 352.2Q566.7 349.4 563.7 350.5Q563.6 353.6 566.1 352.2z" fill="#fcfcfc"/><path d="M566.1 352.2Q568.5 353.7 568.5 350.6Q565.6 349.4 566.1 352.2z" fill="#fcfcfc"/><path d="M566.2 349.7Q566.7 347.5 564.2 348.1Q564.2 350.6 566.2 349.7z" fill="#fcfcfc"/><path d="M566.2 349.7Q568 351.1 568.5 348.6Q566.2 347.4 566.2 349.7z" fill="#fcfcfc"/><path d="M561.4 374.5L556.9 350.4" stroke="#fcfcfc" stroke-width=".7"/><path d="M561.3 373.9Q559.2 370 553.4 370.5Q557 375 561.3 373.9z" fill="#fcfcfc"/><path d="M561.3 373.9Q565.7 373.4 567.4 367.8Q561.8 369.5 561.3 373.9z" fill="#fcfcfc"/><path d="M560.9 371.7Q558.5 368.4 553.1 368.8Q557 372.6 560.9 371.7z" fill="#fcfcfc"/><path d="M560.9 371.7Q564.6 370.7 566.6 365.6Q561.7 367.9 560.9 371.7z" fill="#fcfcfc"/><path d="M560.4 369.5Q559.1 365.8 554.2 366.7Q556.8 370.9 560.4 369.5z" fill="#fcfcfc"/><path d="M560.4 369.5Q563.8 368.9 565.1 364.5Q560.9 366.1 560.4 369.5z" fill="#fcfcfc"/><path d="M560 367.3Q558.1 364 553 364.4Q556.4 368.3 560 367.3z" fill="#fcfcfc"/><path d="M560 367.3Q563.9 366.8 565.3 361.9Q560.4 363.4 560 367.3z" fill="#fcfcfc"/><path d="M559.6 365.1Q558.1 362 553.6 362.7Q556.4 366.3 559.6 365.1z" fill="#fcfcfc"/><path d="M559.6 365.1Q563.4 365 564 360.3Q559.4 361.3 559.6 365.1z" fill="#fcfcfc"/><path d="M559.2 362.9Q558.5 359.7 555 361.2Q556.5 364.7 559.2 362.9z" fill="#fcfcfc"/><path d="M559.2 362.9Q562.3 363.3 562.4 359.5Q558.6 359.8 559.2 362.9z" fill="#fcfcfc"/><path d="M558.8 360.7Q558 357.5 554.2 358.7Q555.9 362.3 558.8 360.7z" fill="#fcfcfc"/><path d="M558.8 360.7Q561.9 360.8 562.2 357.1Q558.4 357.6 558.8 360.7z" fill="#fcfcfc"/><path d="M558.4 358.5Q558.1 355.9 555.3 357.1Q556.2 359.9 558.4 358.5z" fill="#fcfcfc"/><path d="M558.4 358.5Q561.3 359.6 560.8 356.2Q557.4 355.5 558.4 358.5z" fill="#fcfcfc"/><path d="M558 356.3Q557.9 353.6 555.1 354.9Q555.8 357.8 558 356.3z" fill="#fcfcfc"/><path d="M558 356.3Q560.7 357.3 560.3 354.1Q557.1 353.5 558 356.3z" fill="#fcfcfc"/><path d="M557.6 354.1Q557.5 351.6 555.5 353.4Q555.9 356 557.6 354.1z" fill="#fcfcfc"/><path d="M557.6 354.1Q559.8 355 559.1 352.5Q556.5 351.9 557.6 354.1z" fill="#fcfcfc"/><path d="M557.1 351.9Q557.7 349.4 555.7 351.2Q555.5 353.9 557.1 351.9z" fill="#fcfcfc"/><path d="M557.1 351.9Q559.2 353.1 558.3 350.8Q556.1 349.8 557.1 351.9z" fill="#fcfcfc"/><path d="M553 379.8L550.2 356.3" stroke="#fcfcfc" stroke-width=".7"/><path d="M552.9 379.2Q550.2 375.3 543.7 375.7Q548.3 380.2 552.9 379.2z" fill="#fcfcfc"/><path d="M552.9 379.2Q557.5 378.9 561.2 373.8Q555 375.1 552.9 379.2z" fill="#fcfcfc"/><path d="M552.7 377.2Q549.9 373 542.9 372.5Q547.7 377.6 552.7 377.2z" fill="#fcfcfc"/><path d="M552.7 377.2Q557.8 376.8 561.6 370.9Q554.8 372.6 552.7 377.2z" fill="#fcfcfc"/><path d="M552.5 375.3Q550.1 371.8 544.3 371.5Q548.3 375.7 552.5 375.3z" fill="#fcfcfc"/><path d="M552.5 375.3Q556.9 375.2 559.7 369.9Q553.8 371 552.5 375.3z" fill="#fcfcfc"/><path d="M552.2 373.3Q549.9 369.5 544 370.1Q547.9 374.6 552.2 373.3z" fill="#fcfcfc"/><path d="M552.2 373.3Q556.6 373.3 559.5 368.2Q553.7 369.3 552.2 373.3z" fill="#fcfcfc"/><path d="M552 371.4Q550.4 368.3 545.9 368.7Q548.7 372.3 552 371.4z" fill="#fcfcfc"/><path d="M552 371.4Q555.5 371.8 557.5 367.5Q552.8 367.9 552 371.4z" fill="#fcfcfc"/><path d="M551.8 369.4Q550.2 365.8 545.1 366.4Q548 370.6 551.8 369.4z" fill="#fcfcfc"/><path d="M551.8 369.4Q555.6 369.6 557.5 364.9Q552.5 365.6 551.8 369.4z" fill="#fcfcfc"/><path d="M551.5 367.5Q550.3 364.3 545.9 364.7Q548.3 368.4 551.5 367.5z" fill="#fcfcfc"/><path d="M551.5 367.5Q555.1 368.3 556.8 364Q552.1 363.8 551.5 367.5z" fill="#fcfcfc"/><path d="M551.3 365.5Q550.7 362.1 546.6 363Q548.1 367 551.3 365.5z" fill="#fcfcfc"/><path d="M551.3 365.5Q554.5 366.2 555.6 362.3Q551.6 362.3 551.3 365.5z" fill="#fcfcfc"/><path d="M551.1 363.6Q550.9 360.4 547.6 361.8Q548.5 365.3 551.1 363.6z" fill="#fcfcfc"/><path d="M551.1 363.6Q553.8 364.7 554.2 361.2Q550.8 360.6 551.1 363.6z" fill="#fcfcfc"/><path d="M550.8 361.6Q550.4 359.1 547.6 360.1Q548.6 362.9 550.8 361.6z" fill="#fcfcfc"/><path d="M550.8 361.6Q553.4 362.8 553.8 359.6Q550.7 358.8 550.8 361.6z" fill="#fcfcfc"/><path d="M550.6 359.6Q550.6 356.9 548.1 358.6Q548.7 361.5 550.6 359.6z" fill="#fcfcfc"/><path d="M550.6 359.6Q552.9 361.1 552.8 358.2Q550.1 357 550.6 359.6z" fill="#fcfcfc"/><path d="M550.4 357.7Q550.4 355.5 548.7 357.1Q549 359.4 550.4 357.7z" fill="#fcfcfc"/><path d="M550.4 357.7Q552.5 359.3 551.8 356.6Q549.4 355.3 550.4 357.7z" fill="#fcfcfc"/><path d="M549.5 387.1L525.4 385.7" stroke="#fcfcfc" stroke-width=".7"/><path d="M549 387.1Q543.2 390.6 540.1 399.8Q547.6 393.7 549 387.1z" fill="#fcfcfc"/><path d="M549 387.1Q548 380.4 541 373.8Q543.6 383 549 387.1z" fill="#fcfcfc"/><path d="M547.1 387Q542.4 390.9 540.1 399.6Q546.2 393.1 547.1 387z" fill="#fcfcfc"/><path d="M547.1 387Q546.4 380.8 540.3 374.2Q542.4 382.9 547.1 387z" fill="#fcfcfc"/><path d="M545.2 386.9Q540.5 390.3 538.9 398.4Q544.9 392.7 545.2 386.9z" fill="#fcfcfc"/><path d="M545.2 386.9Q545.1 380.9 539.1 375.2Q540.4 383.4 545.2 386.9z" fill="#fcfcfc"/><path d="M543.4 386.7Q538.1 389.9 536.5 398.3Q543.1 392.9 543.4 386.7z" fill="#fcfcfc"/><path d="M543.4 386.7Q542.7 380.9 536.4 375.2Q538.5 383.4 543.4 386.7z" fill="#fcfcfc"/><path d="M541.5 386.6Q537.3 389.3 535.5 396.2Q541 391.6 541.5 386.6z" fill="#fcfcfc"/><path d="M541.5 386.6Q542 381.5 537 376.3Q537.5 383.5 541.5 386.6z" fill="#fcfcfc"/><path d="M539.7 386.5Q535.7 388.4 534.3 394.4Q539.3 390.9 539.7 386.5z" fill="#fcfcfc"/><path d="M539.7 386.5Q540.2 382.1 535.5 378Q535.8 384.2 539.7 386.5z" fill="#fcfcfc"/><path d="M537.8 386.4Q533.2 387.8 531.9 394.2Q537.7 391.3 537.8 386.4z" fill="#fcfcfc"/><path d="M537.8 386.4Q538.5 381.6 533.3 377.7Q533.5 384.2 537.8 386.4z" fill="#fcfcfc"/><path d="M536 386.3Q532.2 388.1 531.3 393.7Q536 390.5 536 386.3z" fill="#fcfcfc"/><path d="M536 386.3Q536.8 382 532.2 378.4Q532.1 384.3 536 386.3z" fill="#fcfcfc"/><path d="M534.1 386.2Q530 387.2 529.2 392.6Q534.2 390.4 534.1 386.2z" fill="#fcfcfc"/><path d="M534.1 386.2Q535.2 382 530.3 379Q530 384.7 534.1 386.2z" fill="#fcfcfc"/><path d="M532.3 386.1Q528.9 386.6 529.6 390.7Q533.5 389.2 532.3 386.1z" fill="#fcfcfc"/><path d="M532.3 386.1Q533.4 383.2 530 381.3Q529.3 385.1 532.3 386.1z" fill="#fcfcfc"/><path d="M530.4 386Q527.2 386.1 527.4 390Q531.1 389.1 530.4 386z" fill="#fcfcfc"/><path d="M530.4 386Q531.5 383.1 528.1 381.5Q527.4 385.2 530.4 386z" fill="#fcfcfc"/><path d="M528.5 385.9Q525.7 385.5 526.4 388.7Q529.6 388.5 528.5 385.9z" fill="#fcfcfc"/><path d="M528.5 385.9Q530.7 383.5 527.2 382.6Q525.3 385.7 528.5 385.9z" fill="#fcfcfc"/><path d="M526.7 385.8Q523.6 385.1 525.4 388Q528.7 388.2 526.7 385.8z" fill="#fcfcfc"/><path d="M526.7 385.8Q528.4 383.7 525.5 383.5Q524 386 526.7 385.8z" fill="#fcfcfc"/><path d="M549.9 383.3L572.2 386.4" stroke="#fcfcfc" stroke-width=".7"/><path d="M550.5 383.3Q547.9 387.4 550.5 393.3Q553 387.3 550.5 383.3z" fill="#fcfcfc"/><path d="M552.5 383.6Q550.6 387.7 553.3 393.3Q555 387.3 552.5 383.6z" fill="#fcfcfc"/><path d="M554.5 383.9Q552.6 388.2 555.5 394.2Q557.3 387.8 554.5 383.9z" fill="#fcfcfc"/><path d="M556.6 384.2Q554.6 388.4 556.9 394.7Q558.8 388.3 556.6 384.2z" fill="#fcfcfc"/><path d="M558.6 384.5Q556.1 388.6 559.7 394Q562 388 558.6 384.5z" fill="#fcfcfc"/><path d="M560.6 384.8Q558.8 389 561.9 394.7Q563.5 388.4 560.6 384.8z" fill="#fcfcfc"/><path d="M562.7 385.1Q560.3 388.4 562.7 393.3Q565.1 388.3 562.7 385.1z" fill="#fcfcfc"/><path d="M564.7 385.3Q562.3 389.2 565.5 394.4Q567.7 388.7 564.7 385.3z" fill="#fcfcfc"/><path d="M566.7 385.6Q564.7 389.2 567.1 394.4Q569.1 389.1 566.7 385.6z" fill="#fcfcfc"/><path d="M568.8 385.9Q566.6 389.7 569.8 394.7Q571.8 389.2 568.8 385.9z" fill="#fcfcfc"/><path d="M570.8 386.2Q568.6 389.6 571.7 393.9Q573.7 389 570.8 386.2z" fill="#fcfcfc"/><path d="M561.7 369.3L572.2 375.6" stroke="#fcfcfc" stroke-width=".7"/><path d="M562.2 369.5Q559.4 372.2 561.1 377.1Q564.1 372.9 562.2 369.5z" fill="#fcfcfc"/><path d="M563.7 370.4Q561.4 373.3 563 378Q565.4 373.6 563.7 370.4z" fill="#fcfcfc"/><path d="M565.2 371.3Q562.1 373.5 563.6 378.1Q567 374.6 565.2 371.3z" fill="#fcfcfc"/><path d="M566.7 372.2Q564 374.7 566.1 379Q568.9 375.2 566.7 372.2z" fill="#fcfcfc"/><path d="M568.2 373.1Q565.4 375.2 567.1 379.3Q570.1 376 568.2 373.1z" fill="#fcfcfc"/><path d="M569.7 374Q566.8 376.1 568.7 380.2Q571.8 376.9 569.7 374z" fill="#fcfcfc"/><path d="M571.2 374.9Q568.4 376.7 570.3 380.4Q573.3 377.5 571.2 374.9z" fill="#fcfcfc"/><path d="M560.7 404.6L535.9 411.2" stroke="#fcfcfc" stroke-width=".7"/><path d="M560.1 404.7Q556.7 408.8 558.7 415.9Q562.3 409.6 560.1 404.7z" fill="#fcfcfc"/><path d="M558 405.3Q554.5 408.8 555.8 415.5Q559.8 410 558 405.3z" fill="#fcfcfc"/><path d="M555.9 405.9Q552.6 409.9 554.6 416.9Q558.2 410.6 555.9 405.9z" fill="#fcfcfc"/><path d="M553.9 406.4Q550.9 411 552.6 418.4Q555.9 411.5 553.9 406.4z" fill="#fcfcfc"/><path d="M551.8 407Q548.8 410.8 550.1 417.5Q553.5 411.5 551.8 407z" fill="#fcfcfc"/><path d="M549.7 407.5Q546.3 410.7 548.1 416.6Q551.9 411.6 549.7 407.5z" fill="#fcfcfc"/><path d="M547.7 408.1Q544.4 411.2 546.7 416.6Q550.1 411.8 547.7 408.1z" fill="#fcfcfc"/><path d="M545.6 408.6Q542.8 412.2 543.8 418.4Q546.9 412.9 545.6 408.6z" fill="#fcfcfc"/><path d="M543.5 409.2Q539.7 412.1 541.3 418.3Q545.6 413.5 543.5 409.2z" fill="#fcfcfc"/><path d="M541.5 409.7Q538.3 413 540.7 418.6Q544 413.5 541.5 409.7z" fill="#fcfcfc"/><path d="M539.4 410.3Q535.9 412.7 538 417.6Q541.8 413.8 539.4 410.3z" fill="#fcfcfc"/><path d="M537.3 410.8Q534.6 413.8 536.5 418.9Q539.4 414.3 537.3 410.8z" fill="#fcfcfc"/><path d="M560.3 404.9L538 403.5" stroke="#fcfcfc" stroke-width=".7"/><path d="M559.4 404.9Q559.5 401.8 556 399.6Q556.5 403.7 559.4 404.9z" fill="#fcfcfc"/><path d="M556.2 404.7Q556.6 402 553.5 400.3Q553.6 403.9 556.2 404.7z" fill="#fcfcfc"/><path d="M553 404.5Q553.4 402.1 550.7 400.9Q550.7 403.9 553 404.5z" fill="#fcfcfc"/><path d="M549.8 404.3Q550.4 402 547.6 401Q547.5 403.9 549.8 404.3z" fill="#fcfcfc"/><path d="M546.6 404.1Q547.2 401.9 544.8 400.2Q544.5 403.2 546.6 404.1z" fill="#fcfcfc"/><path d="M543.4 403.9Q544.2 401.8 541.6 400.8Q541.2 403.6 543.4 403.9z" fill="#fcfcfc"/><path d="M540.2 403.7Q541.1 401.8 538.9 400.8Q538.2 403.2 540.2 403.7z" fill="#fcfcfc"/><path d="M557.2 420.7L542.9 423.1" stroke="#fcfcfc" stroke-width=".7"/><path d="M556.5 420.8Q554.1 421.7 554.5 425Q557.3 423.2 556.5 420.8z" fill="#fcfcfc"/><path d="M556.5 420.8Q556.8 418 553.4 417.3Q553.7 420.7 556.5 420.8z" fill="#fcfcfc"/><path d="M554.1 421.2Q551.3 422.3 552 426Q555.2 424 554.1 421.2z" fill="#fcfcfc"/><path d="M554.1 421.2Q554.1 418.2 550.4 417.5Q551.1 421.2 554.1 421.2z" fill="#fcfcfc"/><path d="M551.7 421.6Q549.2 422.1 550 425.2Q552.9 423.9 551.7 421.6z" fill="#fcfcfc"/><path d="M551.7 421.6Q551.9 419.2 548.9 418.9Q549.3 421.8 551.7 421.6z" fill="#fcfcfc"/><path d="M549.3 422Q547.1 422.5 547.8 425.2Q550.4 424.1 549.3 422z" fill="#fcfcfc"/><path d="M549.3 422Q550 419.5 547 419.3Q546.8 422.3 549.3 422z" fill="#fcfcfc"/><path d="M546.9 422.4Q544.9 422.7 545.8 424.9Q548.1 424.2 546.9 422.4z" fill="#fcfcfc"/><path d="M546.9 422.4Q547.6 420.1 544.9 420.5Q544.7 423.2 546.9 422.4z" fill="#fcfcfc"/><path d="M544.5 422.8Q542.3 422.8 543.5 425Q545.9 424.6 544.5 422.8z" fill="#fcfcfc"/><path d="M544.5 422.8Q545.5 420.6 542.9 421.1Q542.2 423.7 544.5 422.8z" fill="#fcfcfc"/><path d="M569.8 412.3L582.7 403.9" stroke="#fcfcfc" stroke-width=".7"/><path d="M570.2 412Q571.4 415.5 576.2 417.1Q573.8 412.6 570.2 412z" fill="#fcfcfc"/><path d="M571.7 411.1Q572.3 414.8 577.2 416.2Q575.5 411.4 571.7 411.1z" fill="#fcfcfc"/><path d="M573.1 410.1Q573.9 413.9 578.8 414.2Q576.9 409.6 573.1 410.1z" fill="#fcfcfc"/><path d="M574.5 409.2Q575.4 412.5 579.9 413.9Q577.9 409.6 574.5 409.2z" fill="#fcfcfc"/><path d="M576 408.3Q576.8 411.4 581 412.1Q579.2 408.2 576 408.3z" fill="#fcfcfc"/><path d="M577.4 407.3Q577.7 410.3 581.4 410.6Q580.3 407 577.4 407.3z" fill="#fcfcfc"/><path d="M578.8 406.4Q578.9 409.5 582.6 409Q581.8 405.4 578.8 406.4z" fill="#fcfcfc"/><path d="M580.3 405.5Q580.1 408.2 583.4 408.2Q583 404.9 580.3 405.5z" fill="#fcfcfc"/><path d="M581.7 404.5Q581.4 407.2 584.5 406.8Q584.3 403.6 581.7 404.5z" fill="#fcfcfc"/><path d="M570.3 411.9L582.4 404.2" stroke="#fcfcfc" stroke-width=".7"/><path d="M570.9 411.5Q572.1 410 570.7 407.9Q569.5 410.1 570.9 411.5z" fill="#fcfcfc"/><path d="M572.9 410.3Q573.9 408.9 572.4 407.4Q571.5 409.3 572.9 410.3z" fill="#fcfcfc"/><path d="M574.9 409Q576.3 408 574.9 406.6Q573.6 408.1 574.9 409z" fill="#fcfcfc"/><path d="M576.9 407.7Q578.1 406.5 576.5 405.3Q575.4 407 576.9 407.7z" fill="#fcfcfc"/><path d="M579 406.4Q580.2 405.5 578.8 404.4Q577.6 405.7 579 406.4z" fill="#fcfcfc"/><path d="M581 405.1Q582.1 404.4 580.7 403.7Q579.7 404.8 581 405.1z" fill="#fcfcfc"/><path d="M562.1 397.1Q562.2 397.7 561.9 398.2Q561.6 398.7 560.4 398.7Q559.3 398.7 557.8 398.5Q556.3 398.3 555.9 397.5Q555.4 396.6 555.1 396Q554.8 395.4 555.3 394.9Q555.8 394.5 556.9 394.6Q558 394.6 559.2 394.9Q560.3 395.2 561.1 395.8Q562 396.5 562.1 397.1z" fill="#f6f6f6"/><path d="M565.7 404.5Q565.7 405.3 564.9 405Q564.1 404.8 563.2 404.9Q562.3 404.9 561.7 403.8Q561.2 402.6 560.5 401.4Q559.8 400.3 560.2 399.6Q560.7 399 561.5 398.9Q562.3 398.8 563.2 399.5Q564.1 400.2 565.1 401Q566.1 401.9 565.9 402.8Q565.7 403.7 565.7 404.5z" fill="#f6f6f6"/><path d="M571.9 407.9Q572.5 408.5 571.6 408.9Q570.7 409.2 569.8 409.5Q568.8 409.8 567.3 409.5Q565.8 409.2 565.1 408.6Q564.5 407.9 564.2 407.3Q563.9 406.8 564.5 406.5Q565.1 406.2 566 406Q566.8 405.8 567.9 406.1Q569.1 406.4 570.2 406.8Q571.3 407.2 571.9 407.9z" fill="#f6f6f6"/><path d="M563.5 408.4Q564.4 408.8 563.6 409.5Q562.9 410.2 562.1 410.8Q561.3 411.3 560.2 411.7Q559.2 412.1 558.3 412Q557.4 411.9 556.6 411.7Q555.7 411.4 556 410.8Q556.2 410.1 557.3 409.6Q558.5 409.1 559.4 408.8Q560.4 408.5 561.6 408.3Q562.7 408.1 563.5 408.4z" fill="#f6f6f6"/><path d="M562.4 392.7L570.3 411.9" stroke="#f0f0f0" stroke-width="1"/><path d="M553.4 378.7L562.4 392.7" stroke="#f0f0f0" stroke-width="1"/><path d="M550.6 384L548.1 388.3" stroke="#f0f0f0" stroke-width="1"/><path d="M571.5 425.9L575 417.2" stroke="#c4c4c4" stroke-width=".6" opacity=".8"/><path d="M576.4 429.4L581.3 415.1" stroke="#c4c4c4" stroke-width=".6" opacity=".8"/><path d="M572.9 423.3L571.5 425.9" stroke="#c4c4c4" stroke-width=".6" opacity=".8"/></g><g filter="url(#bl3)"><g filter="url(#rough2)"><g stroke="#fbfbfb" stroke-linecap="round"><path d="M717.9 393.4L740.9 392.4" stroke-width="2.03"/><path d="M717.9 394.9L738.7 392.8" stroke-width="1.51"/><path d="M717.8 395.6L732.8 399.4" stroke-width="2.50"/><path d="M717.7 396.4L736.4 397.6" stroke-width="1.85"/><path d="M717.3 397.5L741.5 405.8" stroke-width="1.79"/><path d="M716.9 398.7L736.9 411.7" stroke-width="1.47"/><path d="M716.1 400.2L735.7 408.6" stroke-width="2.15"/><path d="M715.8 400.7L731.7 410.6" stroke-width="1.79"/><path d="M714.9 401.8L734.3 418.8" stroke-width="1.84"/><path d="M714.2 402.5L726.4 413.5" stroke-width="1.42"/><path d="M713.9 402.8L722.6 415.1" stroke-width="2.26"/><path d="M712.3 404.1L722 427.1" stroke-width="1.73"/><path d="M711.4 404.6L722.2 420.9" stroke-width="1.69"/><path d="M710.6 405L721.3 421.2" stroke-width="2.29"/><path d="M710.1 405.2L716.6 428.3" stroke-width="2.48"/><path d="M708.8 405.6L716.7 426.1" stroke-width="1.24"/><path d="M707.4 405.9L709.5 426.2" stroke-width="1.75"/><path d="M706.4 406L704.4 419.8" stroke-width="2.09"/><path d="M705.3 406L705.3 426.2" stroke-width="1.53"/><path d="M705.1 406L707.4 420.7" stroke-width="1.32"/><path d="M703.4 405.8L701.7 420.9" stroke-width="1.90"/><path d="M702.3 405.5L695.2 424.2" stroke-width="1.26"/><path d="M701.2 405.1L698.6 419" stroke-width="1.80"/><path d="M700.3 404.8L693.3 420.8" stroke-width="1.25"/><path d="M699.1 404.1L690.9 416.9" stroke-width="1.98"/><path d="M698.6 403.8L687.6 413.9" stroke-width="2.26"/><path d="M698.2 403.5L687.4 414" stroke-width="1.30"/><path d="M696.9 402.3L683.6 416.4" stroke-width="1.87"/><path d="M696.2 401.4L677.9 416.7" stroke-width="2.14"/><path d="M696 401.2L679.1 412" stroke-width="1.84"/><path d="M695 399.8L673.2 408.5" stroke-width="2.07"/><path d="M694.5 398.8L670.9 404.8" stroke-width="2.45"/><path d="M694.2 397.9L678.5 400.3" stroke-width="1.59"/><path d="M694 397.3L675.7 401.4" stroke-width="2.03"/><path d="M693.7 396.3L671.3 400.2" stroke-width="1.46"/><path d="M693.5 394.9L673.8 398.4" stroke-width="2.00"/><path d="M693.5 394.3L669.1 393.7" stroke-width="2.42"/><path d="M693.5 393L678.5 394.8" stroke-width="1.91"/><path d="M693.6 391.8L677.8 387" stroke-width="2.23"/><path d="M693.8 390.9L671.3 381.8" stroke-width="2.30"/><path d="M694.4 389.1L671.8 382.8" stroke-width="2.19"/><path d="M694.7 388.5L676 380.9" stroke-width="2.24"/><path d="M694.8 388.1L681.7 379.9" stroke-width="1.87"/><path d="M695.8 386.6L676.2 376.4" stroke-width="1.41"/><path d="M696.3 386L679.1 371.6" stroke-width="2.15"/><path d="M697.1 385.1L683.2 368.7" stroke-width="1.43"/><path d="M698.1 384.2L681.1 366.6" stroke-width="2.08"/><path d="M698.7 383.7L684 364.3" stroke-width="2.46"/><path d="M699.9 383L693.8 370.2" stroke-width="1.66"/><path d="M700.2 382.9L692.2 359.7" stroke-width="1.90"/><path d="M701.8 382.2L693.8 361.6" stroke-width="2.35"/><path d="M702.4 382L697.7 367.5" stroke-width="1.24"/><path d="M703.2 381.8L700.4 367.1" stroke-width="2.41"/><path d="M704.2 381.6L703.1 365.3" stroke-width="1.75"/><path d="M705.9 381.5L705.3 365" stroke-width="1.76"/><path d="M706.7 381.6L708.4 367.6" stroke-width="2.27"/><path d="M708.1 381.8L712 357.3" stroke-width="1.69"/><path d="M709 382L713.2 357.4" stroke-width="1.46"/><path d="M710.3 382.4L716.7 364" stroke-width="1.80"/><path d="M711.3 382.9L719.6 362" stroke-width="1.69"/><path d="M712.3 383.4L723.2 371.2" stroke-width="2.30"/><path d="M712.4 383.5L726.4 364.7" stroke-width="1.54"/><path d="M713.3 384.2L727.9 367.7" stroke-width="1.64"/><path d="M714.3 385L726 374.6" stroke-width="2.34"/><path d="M715 385.9L729.7 372.1" stroke-width="2.45"/><path d="M715.8 386.9L730.9 374" stroke-width="1.87"/><path d="M716.1 387.4L732.4 373.4" stroke-width="1.96"/><path d="M716.7 388.4L731.7 377.4" stroke-width="1.48"/><path d="M717.3 390L733.9 384.9" stroke-width="1.35"/><path d="M717.4 390.3L738.2 380.4" stroke-width="1.90"/><path d="M717.8 392L737.8 385.2" stroke-width="2.06"/><path d="M717.9 392.5L741.8 390.1" stroke-width="1.24"/></g><g fill="#fbfbfb"><circle cx="740.9" cy="392.4" r="1.33"/><circle cx="738.7" cy="392.8" r="1.17"/><circle cx="733.8" cy="389.5" r="0.74"/><circle cx="728.3" cy="394.5" r="1.09"/><circle cx="741.5" cy="405.8" r="1.09"/><circle cx="731" cy="402.6" r="1.12"/><circle cx="735.7" cy="408.6" r="1.36"/><circle cx="733.4" cy="404.5" r="1.13"/><circle cx="724.4" cy="405.1" r="0.66"/><circle cx="734.3" cy="418.8" r="1.30"/><circle cx="729.2" cy="414.3" r="0.93"/><circle cx="723.2" cy="409.3" r="0.78"/><circle cx="722.6" cy="415.1" r="1.25"/><circle cx="718.6" cy="412.4" r="1.08"/><circle cx="721.3" cy="421.2" r="0.93"/><circle cx="719.2" cy="412.6" r="0.64"/><circle cx="716.6" cy="428.3" r="0.90"/><circle cx="708.3" cy="420" r="0.77"/><circle cx="704.4" cy="419.8" r="1.17"/><circle cx="707.4" cy="420.7" r="0.81"/><circle cx="701.7" cy="420.9" r="0.88"/><circle cx="703.6" cy="413.9" r="0.83"/><circle cx="702" cy="415.5" r="0.75"/><circle cx="693.3" cy="420.8" r="1.42"/><circle cx="696.4" cy="415.7" r="0.93"/><circle cx="690.9" cy="416.9" r="1.47"/><circle cx="693.2" cy="413.1" r="0.92"/><circle cx="687.6" cy="413.9" r="0.95"/><circle cx="689.4" cy="409.3" r="0.61"/><circle cx="683.6" cy="416.4" r="0.88"/><circle cx="688.8" cy="412" r="0.75"/><circle cx="677.9" cy="416.7" r="1.01"/><circle cx="682.9" cy="412.9" r="1.18"/><circle cx="673.2" cy="408.5" r="1.25"/><circle cx="676" cy="404.2" r="0.83"/><circle cx="670.9" cy="404.8" r="0.95"/><circle cx="677.8" cy="399.1" r="0.69"/><circle cx="678.5" cy="400.3" r="1.07"/><circle cx="681" cy="397" r="1.02"/><circle cx="675.7" cy="401.4" r="1.46"/><circle cx="682.9" cy="398.5" r="1.11"/><circle cx="671.3" cy="400.2" r="1.00"/><circle cx="673.8" cy="398.4" r="1.01"/><circle cx="682.4" cy="398.4" r="1.18"/><circle cx="669.1" cy="393.7" r="1.10"/><circle cx="675.7" cy="392.2" r="1.02"/><circle cx="678.5" cy="394.8" r="1.06"/><circle cx="677.8" cy="387" r="0.74"/><circle cx="684.4" cy="386.8" r="0.93"/><circle cx="678.8" cy="381.2" r="0.65"/><circle cx="671.8" cy="382.8" r="1.35"/><circle cx="676" cy="380.9" r="0.98"/><circle cx="680.8" cy="384.1" r="1.13"/><circle cx="681.7" cy="379.9" r="0.92"/><circle cx="689.2" cy="383.3" r="0.90"/><circle cx="679.1" cy="371.6" r="1.36"/><circle cx="687" cy="378" r="0.81"/><circle cx="683.2" cy="368.7" r="0.83"/><circle cx="693.8" cy="370.2" r="1.30"/><circle cx="692.2" cy="359.7" r="1.50"/><circle cx="693.8" cy="361.6" r="1.02"/><circle cx="695.2" cy="368.1" r="1.09"/><circle cx="697.7" cy="367.5" r="0.72"/><circle cx="705.3" cy="365" r="0.91"/><circle cx="712" cy="357.3" r="1.23"/><circle cx="713.2" cy="357.4" r="1.35"/><circle cx="709.3" cy="367.6" r="0.82"/><circle cx="716.7" cy="364" r="1.18"/><circle cx="723.2" cy="371.2" r="0.95"/><circle cx="726.4" cy="364.7" r="0.87"/><circle cx="723.3" cy="371.3" r="1.03"/><circle cx="727.9" cy="367.7" r="0.85"/><circle cx="722.1" cy="375.8" r="1.02"/><circle cx="726" cy="374.6" r="1.28"/><circle cx="729.7" cy="372.1" r="1.21"/><circle cx="723.7" cy="376.5" r="1.05"/><circle cx="725.5" cy="376.1" r="0.87"/><circle cx="732.4" cy="373.4" r="0.83"/><circle cx="731.7" cy="377.4" r="0.82"/><circle cx="733.9" cy="384.9" r="1.02"/><circle cx="738.2" cy="380.4" r="1.18"/><circle cx="728.7" cy="381.5" r="0.95"/><circle cx="737.8" cy="385.2" r="0.95"/></g><path d="M729 390.7Q730.3 393.8 728.7 396.7Q727.1 399.7 727.6 403.5Q728.1 407.3 724 408.3Q719.9 409.2 718.4 413Q716.8 416.8 713.1 417.3Q709.4 417.8 705.7 417.6Q702.1 417.5 698.8 416Q695.6 414.6 693.4 412.1Q691.2 409.6 688.7 407.6Q686.2 405.6 683.9 403Q681.6 400.4 681.2 397.1Q680.7 393.8 681.9 390.7Q683.2 387.5 683.6 384.1Q683.9 380.6 687.8 379.5Q691.6 378.4 693.9 376.3Q696.2 374.2 699.4 373.8Q702.6 373.5 705.8 372.9Q709 372.2 712.7 371.9Q716.4 371.6 719.4 373.6Q722.5 375.6 723.4 379Q724.3 382.5 726 385.1Q727.8 387.7 729 390.7z" fill="#fdfdfd"/></g><g fill="#8a8a8a"><circle cx="704.6" cy="395.2" r="0.70"/><circle cx="706.2" cy="391.4" r="0.70"/><circle cx="707.9" cy="396.5" r="0.70"/><circle cx="702.4" cy="393.3" r="0.70"/><circle cx="709.5" cy="391.8" r="0.70"/><circle cx="704.8" cy="398.4" r="0.70"/><circle cx="703.7" cy="389.6" r="0.98"/><circle cx="710.9" cy="395.8" r="0.98"/><circle cx="700.9" cy="396.1" r="0.98"/><circle cx="708.5" cy="388.7" r="0.98"/><circle cx="707.8" cy="399.8" r="0.98"/><circle cx="700.5" cy="390.8" r="0.98"/><circle cx="712.5" cy="392.5" r="0.98"/><circle cx="702" cy="399.6" r="0.98"/><circle cx="705.1" cy="386.9" r="0.98"/><circle cx="711.7" cy="398.7" r="0.98"/><circle cx="698.4" cy="394.3" r="0.98"/><circle cx="711.6" cy="388.4" r="0.98"/><circle cx="705.6" cy="402" r="0.98"/><circle cx="700.7" cy="387.6" r="0.98"/><circle cx="714.4" cy="395.1" r="0.98"/><circle cx="698.9" cy="398.9" r="0.98"/><circle cx="707.9" cy="385.3" r="0.98"/><circle cx="710.5" cy="401.8" r="0.98"/><circle cx="697.2" cy="391.2" r="0.98"/><circle cx="714.6" cy="390" r="0.98"/><circle cx="702.3" cy="402.8" r="0.98"/><circle cx="702.7" cy="384.8" r="0.98"/><circle cx="714.8" cy="398.6" r="0.98"/><circle cx="696.2" cy="396.6" r="0.98"/><circle cx="711.6" cy="385.3" r="0.98"/><circle cx="707.8" cy="404.3" r="0.98"/><circle cx="697.6" cy="387.5" r="0.98"/><circle cx="716.7" cy="393.1" r="0.98"/><circle cx="698.6" cy="402" r="0.98"/><circle cx="706.1" cy="382.9" r="0.98"/><circle cx="713.6" cy="402.3" r="0.98"/><circle cx="694.6" cy="392.9" r="0.98"/><circle cx="715.2" cy="387" r="0.98"/><circle cx="703.9" cy="405.5" r="0.98"/><circle cx="699.7" cy="384" r="0.98"/><circle cx="717.6" cy="397.1" r="0.98"/><circle cx="695.2" cy="399.5" r="0.98"/><circle cx="710.3" cy="382.5" r="0.98"/><circle cx="710.7" cy="405.5" r="0.98"/><circle cx="694.7" cy="388.6" r="0.98"/><circle cx="718.1" cy="390.2" r="0.98"/><circle cx="699.5" cy="405" r="0.98"/><circle cx="703.3" cy="381.3" r="0.98"/><circle cx="716.7" cy="401.6" r="0.98"/><circle cx="692.9" cy="395.6" r="0.98"/><circle cx="714.6" cy="383.8" r="0.98"/><circle cx="706.5" cy="407.4" r="0.98"/><circle cx="696.5" cy="384.3" r="0.98"/><circle cx="719.7" cy="394.7" r="0.98"/><circle cx="695.3" cy="402.8" r="0.98"/><circle cx="707.9" cy="380.1" r="0.98"/><circle cx="714" cy="405.6" r="0.98"/><circle cx="692.2" cy="390.8" r="0.98"/><circle cx="718.5" cy="386.9" r="0.98"/><circle cx="701.5" cy="407.7" r="0.98"/><circle cx="700" cy="380.7" r="0.98"/><circle cx="719.5" cy="399.7" r="0.98"/><circle cx="692" cy="398.9" r="0.98"/></g></g></svg>
</div>
<svg style="left:0;top:0" width="1024" height="572" viewBox="0 0 1024 572">
  <rect x="332.400" y="187.400" width="465.200" height="294.200" rx="2.600" fill="none" stroke="#c6b6f2" stroke-width="1.100"/>
  <rect x="333.100" y="188.100" width="463.800" height="292.800" rx="2.200" fill="none" stroke="#7a5fc0" stroke-width=".95" stroke-dasharray="6.500 6.700" stroke-dashoffset="-3"/>
  <g fill="#fff" stroke="#9a6cf0" stroke-width=".9">
    <rect x="330.100" y="185.100" width="5.600" height="5.600"/><rect x="794.500" y="185.100" width="5.600" height="5.600"/>
    <rect x="330.100" y="477.900" width="5.600" height="5.600"/><rect x="794.500" y="477.900" width="5.600" height="5.600"/>
  </g>
  <!-- component-set glyph -->
  <g fill="#8638e5">
    <path d="M337.400 172.200l1.900 1.900-1.900 1.900-1.900-1.900zM337.400 177.200l1.900 1.900-1.900 1.900-1.900-1.900zM334.900 174.700l1.900 1.900-1.900 1.900-1.900-1.900zM339.900 174.700l1.900 1.900-1.900 1.900-1.900-1.900z"/>
  </g>
  <!-- code glyph -->
  <g fill="none" stroke="#8a4be8" stroke-width="1" stroke-linecap="round" stroke-linejoin="round">
    <path d="M788.800 174.400 786.600 176.600 788.800 178.800M794 174.400 796.200 176.600 794 178.800M792.300 173.300 790.500 179.900"/>
  </g>
</svg>
<div class="t b" style="left:344.300px;top:170.500px;color:#8638e5;font-weight:normal;font-size:9px;-webkit-text-stroke:.2px #8638e5">Plants</div>

<!-- variants badge -->
<div class="a" style="left:540.500px;top:486.800px;width:48.800px;height:12.700px;border-radius:2px;background:#9747ff"></div>
<div class="t b" style="left:544.300px;top:487.300px;color:#fff;font-size:8.900px">5 Variants</div>
<div class="a" style="left:559px;top:503.300px;width:12.300px;height:12.300px;border-radius:2px;background:#9747ff"></div>
<svg style="left:561.600px;top:505.900px" width="7" height="7" viewBox="0 0 7 7"><path d="M3.500 .3v6.400M.3 3.500h6.400" stroke="#fff" stroke-width="1.400" stroke-linecap="round"/></svg>

<!-- canvas scrollbar -->
<div class="a" style="left:832px;top:221.500px;width:3px;height:360px;border-radius:1.500px;background:#8f8f8f"></div>
</div>

</div>
<div id="hr" class="a"></div>
<div id="vr" class="a"></div>
<div class="a" style="left:333px;top:23.500px;width:464px;height:16px;background:#e2f0fc"></div>
<div class="a" style="left:251px;top:188px;width:17px;height:293px;background:#e2f0fc"></div>
<div class="a" style="left:251px;top:39px;width:587px;height:1px;background:#ececec;opacity:.0"></div>
<div class="rl" style="left:386.8px;top:24.6px;width:30px;text-align:center">250</div>
<div class="tk" style="left:401.3px;top:36.500px;width:1px;height:3px"></div>
<div class="rl" style="left:455.6px;top:24.6px;width:30px;text-align:center">500</div>
<div class="tk" style="left:470.1px;top:36.500px;width:1px;height:3px"></div>
<div class="rl" style="left:524.4px;top:24.6px;width:30px;text-align:center">750</div>
<div class="tk" style="left:538.9px;top:36.500px;width:1px;height:3px"></div>
<div class="rl" style="left:593.2px;top:24.6px;width:30px;text-align:center">1000</div>
<div class="tk" style="left:607.7px;top:36.500px;width:1px;height:3px"></div>
<div class="rl" style="left:662.0px;top:24.6px;width:30px;text-align:center">1250</div>
<div class="tk" style="left:676.5px;top:36.500px;width:1px;height:3px"></div>
<div class="rl" style="left:730.8px;top:24.6px;width:30px;text-align:center">1500</div>
<div class="tk" style="left:745.3px;top:36.500px;width:1px;height:3px"></div>
<div class="rl rb" style="left:299px;top:24.6px;width:30px;text-align:right">0</div>
<div class="rl rb" style="left:802.5px;top:24.6px">1686</div>
<div class="vl" style="left:241.5px;top:114.2px">-250</div>
<div class="tk" style="left:265px;top:118.7px;width:2.5px;height:1px"></div>
<div class="vl" style="left:241.5px;top:251.8px">250</div>
<div class="tk" style="left:265px;top:256.3px;width:2.5px;height:1px"></div>
<div class="vl" style="left:241.5px;top:320.6px">500</div>
<div class="tk" style="left:265px;top:325.1px;width:2.5px;height:1px"></div>
<div class="vl" style="left:241.5px;top:389.4px">750</div>
<div class="tk" style="left:265px;top:393.9px;width:2.5px;height:1px"></div>
<div class="vl rb" style="left:241.5px;top:176.0px">0</div>
<div class="vl rb" style="left:241.5px;top:489.8px">1064</div>
<div class="a" style="left:267.500px;top:23.500px;width:1px;height:16px;background:#ececec"></div>

<!-- ================= RIGHT PANEL ================= -->
<div id="right" class="a"></div>
<!-- header row: avatar, play, share -->
<div class="a" style="left:848.800px;top:33.300px;width:18px;height:18.600px;border-radius:50%;overflow:hidden;background:#f2eee9">
  <div class="a" style="left:4.400px;top:.8px;width:10.200px;height:13.400px;border-radius:50% 50% 42% 46%;background:#3e241a"></div>
  <div class="a" style="left:8px;top:3.600px;width:4.600px;height:6.600px;border-radius:50%;background:#dcae98;transform:rotate(12deg)"></div>
  <div class="a" style="left:11.400px;top:5px;width:3.200px;height:8.500px;border-radius:40%;background:#4a2a1e"></div>
  <div class="a" style="left:3.800px;top:11.200px;width:11.400px;height:8px;border-radius:40% 45% 0 0;background:#74a6e6"></div>
  <div class="a" style="left:7.600px;top:10.200px;width:3px;height:3.400px;background:#e9d9d2;border-radius:0 0 50% 50%"></div>
  <div class="a" style="left:1.800px;top:12.500px;width:3px;height:5px;background:#e6c3ae;border-radius:50%"></div>
  <div class="a" style="left:8.500px;top:13px;width:2.400px;height:5px;background:#dfeaf8;border-radius:40%"></div>
</div>
<svg class="ic" style="left:870.5px;top:41px;stroke-width:1.1" width="6" height="4" viewBox="0 0 6 4"><path d="M1.300 1 3 2.600 4.700 1"/></svg>
<svg class="ic" style="left:944.800px;top:36.600px;stroke-width:1.100" width="11" height="11.900" viewBox="0 0 12 13"><path d="M1.6 2.1c0-.9.9-1.4 1.7-1L10 5.4c.8.5.8 1.6 0 2.100L3.300 11.800c-.8.400-1.700-.1-1.700-1z"/></svg>
<svg class="ic" style="left:966.3px;top:41px;stroke-width:1.1" width="6" height="4" viewBox="0 0 6 4"><path d="M1.300 1 3 2.600 4.700 1"/></svg>
<div class="a" style="left:979px;top:30px;width:42.500px;height:25px;border-radius:5px;background:#0d99ff"></div>
<div class="t" style="left:988.500px;top:36.800px;color:#fff;font-size:9.200px;letter-spacing:0">Share</div>

<!-- tabs -->
<div class="a" style="left:845.300px;top:62px;width:41px;height:18px;border-radius:4px;background:#f5f5f5"></div>
<div class="t b" style="left:851.300px;top:65px">Design</div>
<div class="t g" style="left:896.500px;top:65px;letter-spacing:.28px">Prototype</div>
<div class="t" style="left:981.600px;top:65px;letter-spacing:0;font-size:9px">35%</div>
<svg class="ic" style="left:1010.800px;top:69.300px;stroke-width:1.1" width="6" height="4" viewBox="0 0 6 4"><path d="M1.300 1 3 2.600 4.700 1"/></svg>
<div class="hr" style="left:839px;top:86.500px;width:185px"></div>

<!-- copy to slides -->
<div class="a" style="left:851.600px;top:91px;width:169.700px;height:17.600px;border:1px solid #ebebeb;border-radius:4px;background:#fff"></div>
<div class="t" style="left:892.600px;top:93.700px;letter-spacing:.06px">Copy to Figma Slides</div>

<!-- properties -->
<div class="t g" style="left:851.600px;top:122.200px;letter-spacing:.2px;color:#7d7d7d">Properties</div>
<svg class="ic" style="left:1008px;top:124px;stroke:#5a5a5a;stroke-width:.85" width="9" height="9" viewBox="0 0 9 9"><path d="M4.500 .5v8M.5 4.500h8"/></svg>
<div class="fld" style="left:851.600px;top:144.200px;width:164.200px;height:18.500px"></div>
<svg class="ic" style="left:856px;top:148px;stroke:#555;stroke-width:.9" width="11" height="11" viewBox="0 0 11 11"><path d="M5.500 .9 10.100 5.500 5.500 10.100 .9 5.500z"/></svg>
<div class="t b" style="left:870.700px;top:147.400px;font-size:8.500px">Plant Option</div>
<div class="t g" style="left:924.800px;top:147.400px;letter-spacing:.02px;color:#8f8f8f">· 05, 01, 02, 03, 04</div>
<div class="a" style="left:851.600px;top:169.600px;width:87px;height:18.200px;border:1px solid #ebebeb;border-radius:4px;background:#fff"></div>
<div class="t" style="left:857.400px;top:172.600px;letter-spacing:.08px">Publish changes...</div>
<div class="hr" style="left:839px;top:201px;width:185px"></div>

<!-- position -->
<div class="t b" style="left:851.600px;top:211.600px">Position</div>
<div class="fld" style="left:851.600px;top:236.700px;width:68.600px"></div>
<div class="fld" style="left:927px;top:236.700px;width:69.200px"></div>
<div class="a" style="left:874.400px;top:236.700px;width:1px;height:18px;background:#fafafa"></div>
<div class="a" style="left:897.400px;top:236.700px;width:1px;height:18px;background:#fafafa"></div>
<div class="a" style="left:949.800px;top:236.700px;width:1px;height:18px;background:#fafafa"></div>
<div class="a" style="left:973px;top:236.700px;width:1px;height:18px;background:#fafafa"></div>
<!-- align icons: left / hcenter / right -->
<svg style="left:857px;top:240px" width="11" height="11" viewBox="0 0 11 11"><path d="M.7 .5v10" stroke="#b5b5b5" stroke-width=".8"/><path d="M2.600 3.800h7M2.600 6.800h4" stroke="#2c2c2c" stroke-width="1.300" stroke-linecap="round"/></svg>
<svg style="left:880.300px;top:240px" width="11" height="11" viewBox="0 0 11 11"><path d="M5.500 1.500v8" stroke="#2c2c2c" stroke-width=".8"/><path d="M1.600 3.900h7.800M3.200 6.900h4.600" stroke="#2c2c2c" stroke-width="1.300" stroke-linecap="round"/></svg>
<svg style="left:903.500px;top:240px" width="11" height="11" viewBox="0 0 11 11"><path d="M10.300 .5v10" stroke="#b5b5b5" stroke-width=".8"/><path d="M1.400 3.800h7M4.400 6.800h4" stroke="#2c2c2c" stroke-width="1.300" stroke-linecap="round"/></svg>
<!-- top / vcenter / bottom -->
<svg style="left:932.500px;top:240px" width="11" height="11" viewBox="0 0 11 11"><path d="M.5 .7h10" stroke="#b5b5b5" stroke-width=".8"/><path d="M3.800 2.600v7M6.800 2.600v4" stroke="#2c2c2c" stroke-width="1.300" stroke-linecap="round"/></svg>
<svg style="left:956.100px;top:240px" width="11" height="11" viewBox="0 0 11 11"><path d="M1.200 5.500h8.600" stroke="#2c2c2c" stroke-width=".8"/><path d="M3.900 1.600v7.800M6.900 3.300v4.400" stroke="#2c2c2c" stroke-width="1.300" stroke-linecap="round"/></svg>
<svg style="left:979.400px;top:240px" width="11" height="11" viewBox="0 0 11 11"><path d="M.5 10.300h10" stroke="#b5b5b5" stroke-width=".8"/><path d="M3.800 1.400v7M6.800 4.400v4" stroke="#2c2c2c" stroke-width="1.300" stroke-linecap="round"/></svg>
<!-- distribute -->
<svg style="left:1007.500px;top:240px" width="11" height="11" viewBox="0 0 11 11"><path d="M.5 1.300h10M.5 9.700h10" stroke="#b5b5b5" stroke-width=".8"/><path d="M3.300 5.500h4.400" stroke="#2c2c2c" stroke-width="1.300" stroke-linecap="round"/></svg>

<div class="fld" style="left:851.600px;top:261.900px;width:68.600px"></div>
<div class="fld" style="left:927px;top:261.900px;width:69.200px"></div>
<div class="t g" style="left:857.800px;top:264.900px;color:#9a9a9a">X</div>
<div class="t" style="left:870.400px;top:264.900px;letter-spacing:.3px">-964</div>
<div class="t g" style="left:933.800px;top:264.900px;color:#9a9a9a">Y</div>
<div class="t" style="left:946.200px;top:264.900px;letter-spacing:.05px">1517</div>

<div class="fld" style="left:851.600px;top:287.300px;width:68.600px"></div>
<div class="fld" style="left:927px;top:287.300px;width:69.200px"></div>
<div class="a" style="left:949.800px;top:287.300px;width:1px;height:18px;background:#fafafa"></div>
<div class="a" style="left:973px;top:287.300px;width:1px;height:18px;background:#fafafa"></div>
<svg style="left:857.300px;top:293px" width="7" height="7" viewBox="0 0 7 7"><path d="M.6 .6v5.800h5.800" fill="none" stroke="#a8a8a8" stroke-width=".9"/><path d="M.8 3.200a3.200 3.200 0 0 1 3 3" fill="none" stroke="#a8a8a8" stroke-width=".8"/></svg>
<div class="t" style="left:870.400px;top:290.400px;letter-spacing:.2px">0°</div>
<!-- rotate 90 / flip h / flip v -->
<svg class="ic" style="left:932.500px;top:290.300px;stroke-width:1" width="11" height="12" viewBox="0 0 11 12"><path d="M5.500 4.600 9 8.100 5.500 11.600 2 8.100z"/><path d="M2.300 4.200A3.700 3.700 0 0 1 8.600 2.600"/><path d="M8.900 .7v2.200H6.700" /></svg>
<svg style="left:956.100px;top:291px" width="11" height="11" viewBox="0 0 11 11"><path d="M5.500 .5v10" stroke="#2c2c2c" stroke-width=".9"/><path d="M1 2.800 3.800 5.500 1 8.200zM10 2.800 7.200 5.500 10 8.200z" fill="none" stroke="#2c2c2c" stroke-width=".9" stroke-linejoin="round"/></svg>
<svg style="left:979.400px;top:291px" width="11" height="11" viewBox="0 0 11 11"><path d="M.5 5.500h10" stroke="#2c2c2c" stroke-width=".9"/><path d="M2.800 1 5.500 3.800 8.200 1zM2.800 10 5.500 7.200 8.200 10z" fill="none" stroke="#2c2c2c" stroke-width=".9" stroke-linejoin="round"/></svg>
<div class="hr" style="left:839px;top:318.300px;width:185px"></div>

<!-- layout -->
<div class="t b" style="left:851.600px;top:329px">Layout</div>
<svg style="left:985.600px;top:330.200px" width="10" height="10" viewBox="0 0 10 10"><g fill="#2c2c2c"><path d="M1 1.100 3.500 3.600M3.700 1.300v2.500H1.200M9 1.100 6.500 3.600M6.300 1.300v2.500h2.500M1 8.900 3.500 6.400M3.700 8.700V6.200H1.200M9 8.900 6.500 6.400M6.300 8.700V6.200h2.500" fill="none" stroke="#2c2c2c" stroke-width="1"/></g></svg>
<svg class="ic" style="left:1007.500px;top:330px;stroke-width:1" width="11" height="10" viewBox="0 0 11 10"><rect x=".8" y=".8" width="3.200" height="8.400" rx=".8"/><rect x="6.300" y=".8" width="3" height="3" rx=".8"/><path d="M7.800 5.800v3M6.300 7.300h3"/></svg>
<div class="fld" style="left:851.600px;top:354.200px;width:144.600px;height:18.500px"></div>
<div class="a" style="left:852.200px;top:354.700px;width:34.600px;height:17.500px;border:1px solid #ebebeb;border-radius:4px;background:#fff"></div>
<!-- layout mode icons -->
<svg class="ic" style="left:864px;top:358px;stroke-width:1" width="11" height="11" viewBox="0 0 11 11"><rect x=".8" y=".8" width="3" height="3" rx=".7"/><rect x="6.300" y="2.600" width="3.400" height="3.400" rx=".7"/><rect x="2.200" y="6.600" width="3.400" height="3.400" rx=".7"/></svg>
<svg class="ic" style="left:900.600px;top:358px;stroke:#9a9a9a;stroke-width:.9" width="11" height="11" viewBox="0 0 11 11"><rect x=".8" y=".8" width="3.300" height="3.300" rx=".7"/><rect x=".8" y="6.600" width="3.300" height="3.300" rx=".7"/><path d="M7.800 1v8.600M6.200 8 7.800 9.600 9.400 8"/></svg>
<svg class="ic" style="left:936.800px;top:358px;stroke:#9a9a9a;stroke-width:.9" width="11" height="11" viewBox="0 0 11 11"><rect x=".8" y=".8" width="3.300" height="3.300" rx=".7"/><rect x="6.600" y=".8" width="3.300" height="3.300" rx=".7"/><path d="M1 7.800h8.600M8 6.200 9.600 7.800 8 9.400"/></svg>
<svg class="ic" style="left:973.300px;top:358px;stroke:#9a9a9a;stroke-width:.9" width="11" height="11" viewBox="0 0 11 11"><rect x=".8" y=".8" width="3.300" height="3.300" rx=".7"/><rect x="6.600" y=".8" width="3.300" height="3.300" rx=".7"/><rect x=".8" y="6.600" width="3.300" height="3.300" rx=".7"/><rect x="6.600" y="6.600" width="3.300" height="3.300" rx=".7"/></svg>

<div class="fld" style="left:851.600px;top:379.500px;width:68.600px"></div>
<div class="fld" style="left:927px;top:379.500px;width:69.200px"></div>
<div class="t g" style="left:856.800px;top:382.500px;color:#9a9a9a">W</div>
<div class="t" style="left:870.400px;top:382.500px;letter-spacing:.12px">1686</div>
<div class="t g" style="left:933.500px;top:382.500px;color:#9a9a9a">H</div>
<div class="t" style="left:946.200px;top:382.500px;letter-spacing:.3px">1064</div>
<svg class="ic" style="left:1007.700px;top:383.500px;stroke-width:1" width="10" height="10" viewBox="0 0 10 10"><rect x=".7" y=".7" width="8.600" height="8.600" rx="1.300"/><path d="M3 4.600V3h1.600M7 5.400V7H5.400" stroke-width="1.100"/></svg>
<div class="a" style="left:851.600px;top:407.800px;width:12px;height:12.200px;background:#f5f5f5;border-radius:3px"></div>
<svg class="ic" style="left:853.600px;top:410px;stroke-width:1.100" width="8" height="8" viewBox="0 0 8 8"><path d="M1 4.400 3 6.500 7 1.300"/></svg>
<div class="t" style="left:870.400px;top:408px;letter-spacing:.28px">Clip content</div>
<div class="hr" style="left:839px;top:436.200px;width:185px"></div>

<!-- appearance -->
<div class="t b" style="left:851.600px;top:446.600px">Appearance</div>
<svg class="ic" style="left:983.800px;top:448.300px;stroke-width:1" width="12" height="8" viewBox="0 0 12 8"><path d="M.7 4C2 1.800 3.800 .7 6 .7s4 1.100 5.300 3.300C10 6.200 8.200 7.300 6 7.300S2 6.200 .7 4z"/><circle cx="6" cy="4" r="1.500"/></svg>
<svg class="ic" style="left:1008.200px;top:446.700px;stroke-width:1" width="9" height="11" viewBox="0 0 9 11"><path d="M4.500 .8C6.500 3.200 8 5.200 8 7a3.500 3.500 0 0 1-7 0C1 5.200 2.500 3.200 4.500 .8z"/></svg>
<div class="fld" style="left:851.600px;top:472px;width:68.600px"></div>
<div class="fld" style="left:927px;top:472px;width:69.200px"></div>
<svg style="left:856.800px;top:476.500px" width="9" height="9" viewBox="0 0 9 9"><rect x=".5" y=".5" width="8" height="8" rx="1.300" fill="#fff" stroke="#9b9b9b" stroke-width=".9"/><path d="M3 7V5M4.600 7V4M6.200 7V3" stroke="#c4c4c4" stroke-width=".8"/></svg>
<div class="t" style="left:870.700px;top:475px;letter-spacing:.2px">100%</div>
<svg class="ic" style="left:931.500px;top:476.300px;stroke:#9a9a9a;stroke-width:1" width="10" height="10" viewBox="0 0 10 10"><path d="M.7 3V2A1.300 1.300 0 0 1 2 .7h1M7 .7h1A1.300 1.300 0 0 1 9.300 2v1M9.300 7v1A1.300 1.300 0 0 1 8 9.300H7M3 9.300H2A1.300 1.300 0 0 1 .7 8V7"/></svg>
<div class="t" style="left:946.200px;top:475px">8</div>
<svg class="ic" style="left:1007.700px;top:476px;stroke-width:1.100" width="10" height="10" viewBox="0 0 10 10"><path d="M.7 3V2A1.300 1.300 0 0 1 2 .7h1M7 .7h1A1.300 1.300 0 0 1 9.300 2v1M9.300 7v1A1.300 1.300 0 0 1 8 9.300H7M3 9.300H2A1.300 1.300 0 0 1 .7 8V7"/></svg>
<div class="hr" style="left:839px;top:503px;width:185px"></div>

<!-- fill -->
<div class="t b" style="left:851.600px;top:513.500px">Fill</div>
<svg class="ic" style="left:985.200px;top:514.600px;stroke-width:1" width="10" height="10" viewBox="0 0 10 10"><circle cx="2.300" cy="2.300" r="1.450"/><circle cx="7.700" cy="2.300" r="1.450"/><circle cx="2.300" cy="7.700" r="1.450"/><circle cx="7.700" cy="7.700" r="1.450"/></svg>
<svg class="ic" style="left:1008px;top:515px;stroke-width:1" width="9" height="9" viewBox="0 0 9 9"><path d="M4.500 .5v8M.5 4.500h8"/></svg>
<div class="fld" style="left:851.600px;top:539px;width:122px"></div>
<div class="a" style="left:931.200px;top:539px;width:1px;height:18px;background:#fff"></div>
<div class="a" style="left:855.300px;top:542.500px;width:11px;height:11px;border-radius:1.500px;background:#959595"></div>
<div class="t" style="left:870.700px;top:542px;letter-spacing:.55px">959595</div>
<div class="t" style="left:938.500px;top:542px;letter-spacing:.3px">100</div>
<div class="t g" style="left:962.500px;top:542px;color:#9a9a9a;font-size:8.400px">%</div>
<svg class="ic" style="left:1008px;top:547px;stroke-width:1" width="9" height="2" viewBox="0 0 9 2"><path d="M.5 1h8"/></svg>
<div class="hr" style="left:839px;top:571px;width:185px"></div>
<!-- help -->
<div class="a" style="left:984.200px;top:534.200px;width:24.800px;height:24.800px;border-radius:50%;background:#1e1e1e"></div>
<div class="t" style="left:992.600px;top:539.600px;color:#e6e6e6;font-size:12px;line-height:14px;height:14px;letter-spacing:0">?</div>


<!-- bottom toolbar -->
<div class="a" style="left:320.500px;top:531.300px;width:380.800px;height:37.500px;border-radius:10px;background:#fff;box-shadow:0 1px 3px rgba(0,0,0,.10),0 0 .5px rgba(0,0,0,.18)"></div>
<div class="a" style="left:327px;top:537px;width:25px;height:25px;border-radius:5px;background:#0d99ff"></div>
<svg style="left:332.500px;top:542.500px" width="14" height="14" viewBox="0 0 14 14"><path d="M1.600 2.900c-.3-.8.500-1.600 1.300-1.300l9 3.500c.9.300.8 1.600-.1 1.800L8.200 7.800a1 1 0 0 0-.7.700l-1 3.700c-.2.900-1.500 1-1.800.1z" fill="none" stroke="#fff" stroke-width="1.100" stroke-linejoin="round"/></svg>
<svg class="ic" style="left:356.800px;top:548.600px;stroke-width:1.100" width="6" height="4" viewBox="0 0 6 4"><path d="M1.300 1 3 2.600 4.700 1"/></svg>
<!-- frame -->
<svg class="ic" style="left:378px;top:543px;stroke-width:1.100;stroke-linecap:butt" width="13" height="13" viewBox="0 0 13 13"><path d="M4 .5v12M9 .5v12M.5 4h12M.5 9h12"/></svg>
<svg class="ic" style="left:401.800px;top:548.600px;stroke-width:1.100" width="6" height="4" viewBox="0 0 6 4"><path d="M1.300 1 3 2.600 4.700 1"/></svg>
<!-- rectangle -->
<svg class="ic" style="left:423px;top:543.300px;stroke-width:1.100" width="13" height="13" viewBox="0 0 13 13"><rect x=".8" y=".8" width="11.400" height="11.400" rx="1.500"/></svg>
<svg class="ic" style="left:446.800px;top:548.600px;stroke-width:1.100" width="6" height="4" viewBox="0 0 6 4"><path d="M1.300 1 3 2.600 4.700 1"/></svg>
<!-- pen -->
<svg class="ic" style="left:467px;top:542.500px;stroke-width:1.050" width="15" height="15" viewBox="0 0 15 15"><path d="M1.300 1.600 9.200 1.200a1.500 1.500 0 0 1 1.200.6l3.400 4.600a1 1 0 0 1-.2 1.400L8.400 12.400a1 1 0 0 1-1.300-.1L3.200 8.200a1.500 1.500 0 0 1-.4-.9z"/><circle cx="7.400" cy="7.400" r="1.600"/><path d="M1.500 1.800 6.200 6.300"/></svg>
<svg class="ic" style="left:491.800px;top:548.600px;stroke-width:1.100" width="6" height="4" viewBox="0 0 6 4"><path d="M1.300 1 3 2.600 4.700 1"/></svg>
<!-- text -->
<svg class="ic" style="left:513px;top:543.500px;stroke-width:1.100" width="13" height="12" viewBox="0 0 13 12"><path d="M.8 2.400V.8h11.400v1.600M6.500 .8v10.400M4.500 11.200h4"/></svg>
<!-- comment -->
<svg class="ic" style="left:544.500px;top:543px;stroke-width:1.100" width="14" height="13" viewBox="0 0 14 13"><path d="M7 .8a5.800 5.800 0 0 1 5.800 5.800c0 3.200-2.600 5.600-5.800 5.600H1.200V6.600A5.800 5.800 0 0 1 7 .8z"/></svg>
<svg class="ic" style="left:568.800px;top:548.600px;stroke-width:1.100" width="6" height="4" viewBox="0 0 6 4"><path d="M1.300 1 3 2.600 4.700 1"/></svg>
<!-- actions sparkle -->
<svg class="ic" style="left:589px;top:542px;stroke-width:1.050" width="15" height="15" viewBox="0 0 15 15"><path d="M6 2.200c.5 2.700 1.400 3.900 4.600 4.600C7.400 7.500 6.500 8.700 6 11.400 5.500 8.700 4.600 7.500 1.400 6.800 4.600 6.100 5.500 4.900 6 2.200z"/><circle cx="11.600" cy="2.600" r="1.300"/><path d="M11.600 10.200v3M10.100 11.700h3"/></svg>
<div class="a" style="left:615.300px;top:531.300px;width:1px;height:37.500px;background:#e8e8e8"></div>
<!-- mode segmented -->
<div class="a" style="left:622px;top:537.500px;width:72.500px;height:23.800px;border-radius:5px;background:#f5f5f5"></div>
<div class="a" style="left:647.800px;top:538.300px;width:22.400px;height:22.200px;border-radius:4px;background:#fff;box-shadow:0 0 0 .6px #e4e4e4"></div>
<svg class="ic" style="left:629px;top:543.500px;stroke:#8a8a8a;stroke-width:1.050" width="12" height="12" viewBox="0 0 12 12"><path d="M1 7.500C3 5 5.500 2 6.800 1.300c1.300-.6 1.500.9.500 2.300C6 5.500 3.500 8.500 4.500 9.300c1 .7 2.800-2.300 4.300-2.800 1.300-.4 1 1.200.3 2.300-.5.900.2 1.600 1.700.6"/></svg>
<svg style="left:652.800px;top:543.500px" width="13" height="12" viewBox="0 0 13 12" fill="none" stroke="#2f93e8" stroke-width="1.050" stroke-linejoin="round" stroke-linecap="round"><path d="M5.600 10.800H2.300A1.500 1.500 0 0 1 .8 9.300V2.300A1.500 1.500 0 0 1 2.300 .8h7.400a1.500 1.500 0 0 1 1.500 1.500v3.200"/><path d="M.8 3.800h10.400M3.800 3.800v7"/><path d="M7 6.700v4.100c0 .4.400.6.700.4l3.800-2a.5.500 0 0 0 0-.9l-3.800-2a.5.500 0 0 0-.7.400z"/></svg>
<svg class="ic" style="left:676.500px;top:545px;stroke:#8a8a8a;stroke-width:1" width="12" height="9" viewBox="0 0 12 9"><path d="M3 1.500.8 4.500 3 7.500M9 1.500 11.200 4.500 9 7.500M7 .7 5 8.300"/></svg>

<!-- mouse cursor -->
<svg style="left:247px;top:42.500px;filter:drop-shadow(0 .6px .9px rgba(0,0,0,.3))" width="13.500" height="17.100" viewBox="0 0 15 19"><path d="M1.300 1.200 1.300 14.300 4.600 11.300 7 16.800 9.600 15.700 7.200 10.400 11.600 10.300z" fill="#111" stroke="#f0f0f0" stroke-width=".6" stroke-linejoin="round"/></svg>

</body></html>
